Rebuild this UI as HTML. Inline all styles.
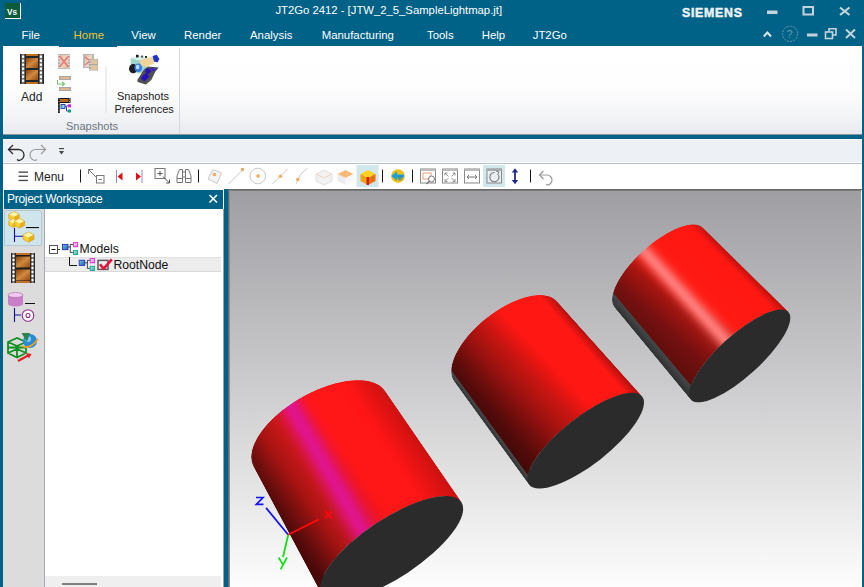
<!DOCTYPE html>
<html><head><meta charset="utf-8">
<style>
*{margin:0;padding:0;box-sizing:border-box}
html,body{width:864px;height:587px;overflow:hidden;background:#006286;font-family:"Liberation Sans",sans-serif}
.a{position:absolute}
.t{position:absolute;white-space:nowrap;line-height:1}
#title{left:0;top:0;width:864px;height:46px;background:#006286}
.tab{color:#fff;font-size:11.4px;top:30.2px}
#ribbon{left:3px;top:46px;width:859px;height:88px;background:linear-gradient(#ffffff 0%,#fefefe 45%,#f5f6f8 75%,#e9eaee 100%)}
#qat{left:3px;top:139px;width:859px;height:24px;background:#edf0f4;border-top:1px solid #f8f9fb;border-bottom:1px solid #fafbfc}
#tb{left:3px;top:163px;width:859px;height:26px;background:#fff;border-top:1px solid #b8c2cc}
#pwh{left:4px;top:190px;width:219px;height:19px;background:#006286}
#col{left:3px;top:209px;width:41px;height:378px;background:#dcdcdc}
#tree{left:45px;top:209px;width:177px;height:378px;background:#fff}
#vp{left:229px;top:190px;width:632px;height:397px;background:linear-gradient(#9f9ea3 0%,#c8c8ca 45%,#fdfdfd 100%)}
</style></head><body>
<div id="title" class="a"></div>
<!-- app icon -->
<div class="a" style="left:5px;top:3px;width:16px;height:16px;background:#0d5a3c;border-right:1px solid #fff;border-bottom:1px solid #fff"></div>
<div class="t" style="left:7px;top:8.5px;font-size:8.2px;font-weight:bold;color:#fff">Vs</div>
<div class="t" style="left:275.4px;top:5.3px;font-size:11.3px;color:#fff">JT2Go 2412 - [JTW_2_5_SampleLightmap.jt]</div>
<div class="t" style="left:682px;top:6.6px;font-size:12.3px;font-weight:bold;color:#eef2f4;letter-spacing:0.75px;-webkit-text-stroke:0.5px #eef2f4">SIEMENS</div>

<div class="t tab" style="left:21.5px">File</div>
<div class="t tab" style="left:73.6px;color:#f0c030">Home</div>
<div class="t tab" style="left:131.3px">View</div>
<div class="t tab" style="left:184px">Render</div>
<div class="t tab" style="left:250px">Analysis</div>
<div class="t tab" style="left:321.7px">Manufacturing</div>
<div class="t tab" style="left:427px">Tools</div>
<div class="t tab" style="left:481.7px">Help</div>
<div class="t tab" style="left:532.7px">JT2Go</div>

<div id="ribbon" class="a"></div>
<div class="a" style="left:59px;top:46px;width:58px;height:1px;background:#006286"></div>
<svg class="a" style="left:0;top:0" width="864" height="140"><defs>
<linearGradient id="fside" x1="0" y1="0" x2="1" y2="0"><stop offset="0" stop-color="#151515"/><stop offset="0.5" stop-color="#8a8a8a"/><stop offset="1" stop-color="#151515"/></linearGradient>
<linearGradient id="brn" x1="0" y1="0" x2="1" y2="1"><stop offset="0" stop-color="#8a4208"/><stop offset="0.5" stop-color="#d08a40"/><stop offset="1" stop-color="#904a10"/></linearGradient>
<linearGradient id="brnl" x1="0" y1="0" x2="1" y2="1"><stop offset="0" stop-color="#d8b898"/><stop offset="0.5" stop-color="#f0dcc4"/><stop offset="1" stop-color="#d8b898"/></linearGradient>
</defs>
<!-- Add film -->
<rect x="20" y="54" width="24" height="30" fill="#22262a"/>
<rect x="20" y="54" width="6" height="30" fill="url(#fside)"/>
<rect x="38" y="54" width="6" height="30" fill="url(#fside)"/>
<g fill="#fff">
<rect x="22" y="55.6" width="2.2" height="2.2"/><rect x="22" y="59.6" width="2.2" height="2.2"/><rect x="22" y="63.6" width="2.2" height="2.2"/><rect x="22" y="67.6" width="2.2" height="2.2"/><rect x="22" y="71.6" width="2.2" height="2.2"/><rect x="22" y="75.6" width="2.2" height="2.2"/><rect x="22" y="79.6" width="2.2" height="2.2"/>
<rect x="39.8" y="55.6" width="2.2" height="2.2"/><rect x="39.8" y="59.6" width="2.2" height="2.2"/><rect x="39.8" y="63.6" width="2.2" height="2.2"/><rect x="39.8" y="67.6" width="2.2" height="2.2"/><rect x="39.8" y="71.6" width="2.2" height="2.2"/><rect x="39.8" y="75.6" width="2.2" height="2.2"/><rect x="39.8" y="79.6" width="2.2" height="2.2"/>
</g>
<rect x="26" y="54" width="12" height="2" fill="#c0701c"/>
<rect x="26" y="58" width="12" height="10" fill="url(#brn)"/>
<rect x="26" y="70" width="12" height="10" fill="url(#brn)"/>
<rect x="26" y="82" width="12" height="2" fill="#c0701c"/>
<!-- delete snapshot -->
<rect x="58" y="54" width="12" height="15" fill="#b8b8b8"/>
<rect x="60" y="55" width="8" height="13" fill="url(#brnl)"/>
<g fill="#fff"><rect x="58.6" y="55" width="1" height="1"/><rect x="58.6" y="58" width="1" height="1"/><rect x="58.6" y="61" width="1" height="1"/><rect x="58.6" y="64" width="1" height="1"/><rect x="58.6" y="67" width="1" height="1"/><rect x="68.4" y="55" width="1" height="1"/><rect x="68.4" y="58" width="1" height="1"/><rect x="68.4" y="61" width="1" height="1"/><rect x="68.4" y="64" width="1" height="1"/><rect x="68.4" y="67" width="1" height="1"/></g>
<path d="M59.5 56 L68.5 67 M68.5 56 L59.5 67" stroke="#ea7a7a" stroke-width="1.8"/>
<!-- replace snapshot -->
<rect x="83" y="54" width="11" height="14" fill="#b8b8b8"/>
<rect x="85" y="55" width="7" height="12" fill="url(#brnl)"/>
<path d="M85 57 L90 61 L85 65" stroke="#ea7a7a" stroke-width="1.6" fill="none"/>
<rect x="89" y="59" width="9" height="11.5" fill="#a8a8a8"/>
<rect x="91" y="59.5" width="6.5" height="10.5" fill="#e0c4a0"/>
<rect x="91" y="64" width="6.5" height="1" fill="#a8a8a8"/>
<g fill="#fff"><rect x="89.6" y="60" width="1" height="1"/><rect x="89.6" y="63" width="1" height="1"/><rect x="89.6" y="66" width="1" height="1"/><rect x="89.6" y="69" width="1" height="1"/></g>
<!-- move snapshot -->
<rect x="59" y="76" width="12" height="4" fill="#a8a8a8"/><rect x="60.5" y="77" width="9" height="2" fill="#e0b890"/>
<rect x="59" y="87" width="12" height="4" fill="#a8a8a8"/><rect x="60.5" y="88" width="9" height="2" fill="#e0b890"/>
<path d="M57.5 80 V84 H64 M62 82 L64.5 84 L62 86" stroke="#78c070" stroke-width="1.1" fill="none"/>
<!-- tree snapshot -->
<rect x="58" y="98" width="12.5" height="5" fill="#151515"/>
<rect x="60" y="99" width="8.5" height="3" fill="#b86a20"/>
<g fill="#fff"><rect x="58.6" y="98.6" width="0.9" height="0.9"/><rect x="58.6" y="101.3" width="0.9" height="0.9"/><rect x="69" y="98.6" width="0.9" height="0.9"/><rect x="69" y="101.3" width="0.9" height="0.9"/></g>
<rect x="58" y="103" width="1.8" height="10" fill="#151515"/>
<g fill="#fff"><rect x="58.5" y="104.5" width="0.8" height="0.8"/><rect x="58.5" y="107.5" width="0.8" height="0.8"/><rect x="58.5" y="110.5" width="0.8" height="0.8"/></g>
<rect x="61" y="104.5" width="4" height="4" fill="#80d0e8" stroke="#2838a8" stroke-width="0.9"/>
<path d="M65 106.5 H66.5 V111 H68 M66.5 105.8 H68" stroke="#3030a0" stroke-width="0.9" fill="none"/>
<rect x="68" y="104.3" width="3" height="3" fill="#d020d0"/>
<rect x="68" y="109.5" width="3" height="3" fill="#109a80"/>
<!-- separator -->
<rect x="105.5" y="66" width="1" height="47" fill="#dcdfe3"/>
<rect x="179" y="48" width="1" height="86" fill="#d4d8dc"/>
<!-- camera -->
<path d="M130.8 58.2 L138.3 56.1 L146.5 58.2 L146.5 72.5 L138.3 73.6 L130.8 69.5Z" fill="#9ed4cc"/>
<path d="M130.8 58.2 L138.3 56.1 L146.5 58.2 L139 60.5Z" fill="#d8f2ee"/>
<rect x="136" y="54.8" width="2.6" height="2.6" fill="#1a1a1a"/><rect x="141" y="55.6" width="2.2" height="2" fill="#555"/><rect x="145" y="56" width="2" height="2" fill="#333"/>
<ellipse cx="133.2" cy="68.7" rx="4.2" ry="4.6" fill="#1c1c1c"/>
<ellipse cx="138.3" cy="67.7" rx="3.8" ry="4.2" fill="#3a7ee0"/>
<ellipse cx="137.6" cy="67" rx="1.8" ry="2.2" fill="#b8dcff"/>
<path d="M139.7 60 L153.3 56.8 L154.5 63.6 L146.5 66.4 L141 65.5Z" fill="#f2d49a"/>
<path d="M152.6 56.1 L156.7 54.8 L159.4 58.9 L157.4 62.6 L154 61.6Z" fill="#2232c8"/>
<path d="M137.3 80 L143.8 69.8 L147.9 66.4 L158.8 67.4 L155.3 71.8 L151.3 80 L145.8 84.4 L137.6 82Z" fill="#505050"/>
<path d="M140.4 77.9 L146 72.8 L149.6 76.6 L144.4 81.6Z" fill="#2a12b8"/>
<path d="M144.8 70 L148.5 67.9 L151.6 71.6 L147.4 74.8Z" fill="#2a12b8"/>
<path d="M150 68 L156.5 68.4 L154.2 70.8 L152.2 71.2Z" fill="#3a22c8"/>
</svg>
<div class="t" style="left:21px;top:91px;font-size:12px;color:#222">Add</div>
<div class="t" style="left:117px;top:91px;font-size:11px;color:#222">Snapshots</div>
<div class="t" style="left:114.5px;top:104px;font-size:11px;color:#222">Preferences</div>
<div class="t" style="left:66px;top:121px;font-size:11px;color:#6a7480">Snapshots</div>
<div class="a" style="left:3px;top:134px;width:859px;height:1px;background:#8e959c"></div>
<div id="qat" class="a"></div>
<div id="tb" class="a"></div>
<svg class="a" style="left:0;top:0" width="864" height="189"><!-- window controls row 1 -->
<rect x="767" y="10.5" width="10.5" height="3.5" fill="#c4d4dc"/>
<rect x="803.5" y="7" width="9.5" height="7.5" fill="none" stroke="#c4d4dc" stroke-width="2"/>
<path d="M840 7.5 L849.5 15 M849.5 7.5 L840 15" stroke="#c4d4dc" stroke-width="2.2"/>
<!-- row 2 -->
<path d="M763.8 36.5 L767.4 32.5 L771 36.5" stroke="#d8e4ea" stroke-width="2" fill="none"/>
<circle cx="790" cy="33.8" r="7.6" fill="none" stroke="#6e9cb2" stroke-width="1" stroke-dasharray="2 1.2"/>
<text x="786.6" y="38.4" font-family="Liberation Sans" font-size="11" fill="#6e9cb2">?</text>
<rect x="807" y="33.5" width="10.5" height="3" fill="#c4d4dc"/>
<rect x="825.5" y="32" width="7" height="6.5" fill="none" stroke="#c4d4dc" stroke-width="1.6"/>
<path d="M829 31.5 V28.8 H836 V35 H833" fill="none" stroke="#c4d4dc" stroke-width="1.6"/>
<path d="M846 29.5 L855 38 M855 29.5 L846 38" stroke="#c4d4dc" stroke-width="2"/>
<!-- QAT -->
<path d="M9 149.5 H18.5 A5.5 5.5 0 0 1 18.5 160.5 L17 159.5" fill="none" stroke="#2a2a2a" stroke-width="1.3"/>
<path d="M13 145 L8.5 149.5 L13 154" fill="none" stroke="#2a2a2a" stroke-width="1.3"/>
<path d="M45 149.5 H35.5 A5.5 5.5 0 0 0 35.5 160.5 L37 159.5" fill="none" stroke="#9a9a9a" stroke-width="1.2"/>
<path d="M41 145 L45.5 149.5 L41 154" fill="none" stroke="#9a9a9a" stroke-width="1.2"/>
<rect x="59" y="148" width="5" height="1.2" fill="#444"/>
<path d="M59 151 H64 L61.5 154.5Z" fill="#444"/>
<!-- hamburger -->
<rect x="18.5" y="171.5" width="9.5" height="1.3" fill="#444"/>
<rect x="18.5" y="175.6" width="9.5" height="1.3" fill="#444"/>
<rect x="18.5" y="179.8" width="9.5" height="1.3" fill="#444"/>
<!-- separators -->
<g fill="#1a1a1a"><rect x="80" y="169.5" width="1" height="13"/><rect x="198" y="169.5" width="1" height="13"/><rect x="382" y="169.5" width="1" height="13"/><rect x="412" y="169.5" width="1" height="13"/><rect x="530" y="169.5" width="1" height="13"/></g>
<!-- collapse icon -->
<path d="M88.5 169.5 L96 177 M88.5 169.5 V174 M88.5 169.5 H93" stroke="#777" stroke-width="1" fill="none"/>
<rect x="96.5" y="175.5" width="7.5" height="7.5" fill="#fff" stroke="#777" stroke-width="1"/>
<rect x="98.5" y="179" width="3.5" height="1" fill="#777"/>
<!-- prev/next -->
<rect x="116" y="170" width="1" height="13" fill="#9090c8"/>
<path d="M117.5 176.5 L122.5 172.5 V180.5Z" fill="#e01010"/>
<rect x="141.5" y="170" width="1" height="13" fill="#9090c8"/>
<path d="M141 176.5 L136 172.5 V180.5Z" fill="#e01010"/>
<!-- zoom box -->
<rect x="155" y="168.5" width="10" height="10" fill="#fff" stroke="#777" stroke-width="1"/>
<path d="M157.5 173.5 H162.5 M160 171 V176" stroke="#555" stroke-width="1"/>
<path d="M163 176.5 L169.5 183 M169.5 179.5 V183 H166" stroke="#555" stroke-width="1" fill="none"/>
<!-- binoculars -->
<path d="M177 182.5 V176 L179.5 169.5 H182.5 V182.5Z M185.5 182.5 V169.5 H188.5 L191 176 V182.5Z" fill="#fff" stroke="#777" stroke-width="1"/>
<rect x="182.5" y="172" width="3" height="5" fill="#fff" stroke="#777" stroke-width="1"/>
<path d="M177 178.5 H182.5 M185.5 178.5 H191" stroke="#777" stroke-width="1"/>
<!-- face -->
<path d="M208 179 L213 169.5 L221.5 173 L217 183.5Z" fill="#f4f4f4" stroke="#c8c8c8" stroke-width="1"/>
<circle cx="214.5" cy="174.5" r="1.8" fill="#f4a860"/>
<!-- line w dot -->
<path d="M228.5 184 L242.5 170" stroke="#c8c8c8" stroke-width="1"/>
<circle cx="242.5" cy="169.5" r="1.8" fill="#f4a860"/>
<!-- circle w dot -->
<circle cx="257.8" cy="176" r="7.8" fill="none" stroke="#c8c8c8" stroke-width="1"/>
<circle cx="258" cy="176" r="1.8" fill="#f4a860"/>
<!-- line w mid dot -->
<path d="M272.5 184 L287.5 169" stroke="#c8c8c8" stroke-width="1"/>
<circle cx="280.5" cy="176.3" r="1.8" fill="#f4a860"/>
<!-- curve w dot -->
<path d="M296.5 183.5 Q298.5 174 307.5 168.5" stroke="#c8c8c8" stroke-width="1" fill="none"/>
<circle cx="297.8" cy="179.5" r="1.8" fill="#f4a860"/>
<!-- white cube -->
<path d="M316 174 L324 170 L332 174 V181 L324 185 L316 181Z" fill="#f2f2f2" stroke="#d8d8d8" stroke-width="0.8"/>
<path d="M316 174 L324 178 L332 174" fill="none" stroke="#e6c8b0" stroke-width="0.8"/>
<!-- orange-top cube -->
<path d="M337.5 174 L345.5 170 L353.5 174 L345.5 178Z" fill="#f8b878"/>
<path d="M337.5 174 L345.5 178 V185 L337.5 181Z" fill="#ececec"/>
<path d="M345.5 178 L353.5 174 V181 L345.5 185Z" fill="#f6f6f6"/>
<!-- selected bg -->
<rect x="356.5" y="165" width="22" height="22" fill="#d2e6ee"/>
<path d="M360.5 174 L368 170 L375.5 174 L368 178Z" fill="#ffd020"/>
<path d="M360.5 174 L368 178 V185 L360.5 181Z" fill="#f4a010"/>
<path d="M368 178 L375.5 174 V181 L368 185Z" fill="#e87010"/>
<rect x="366.5" y="177" width="2.5" height="8" fill="#d02010"/>
<!-- globe icon -->
<circle cx="398" cy="176" r="6.8" fill="#e8c020"/>
<path d="M391 176 L397 171.5 V174.5 H404 V177.5 H397 V180.5Z" fill="#20a0d0"/>
<circle cx="400" cy="178" r="2.5" fill="#2080b0" opacity="0.6"/>
<!-- box magnifier -->
<rect x="420.5" y="169" width="15" height="14" fill="#fff" stroke="#888" stroke-width="1"/>
<rect x="420.5" y="169" width="15" height="2" fill="#bbb"/>
<rect x="423" y="173" width="8" height="6" fill="#fff" stroke="#f0a070" stroke-width="1"/>
<circle cx="431.5" cy="179" r="3" fill="#fff" stroke="#777" stroke-width="1"/>
<path d="M429.5 181 L426.5 184" stroke="#777" stroke-width="1.2"/>
<!-- fit -->
<rect x="442.5" y="169" width="15" height="14" fill="#fff" stroke="#888" stroke-width="1"/>
<rect x="442.5" y="169" width="15" height="2" fill="#bbb"/>
<path d="M445 173 L448.5 176.5 M445 173 H447.5 M445 173 V175.5 M455 173 L451.5 176.5 M455 173 H452.5 M455 173 V175.5 M445 181.5 L448.5 178 M445 181.5 H447.5 M445 181.5 V179 M455 181.5 L451.5 178 M455 181.5 H452.5 M455 181.5 V179" stroke="#888" stroke-width="0.9" fill="none"/>
<!-- width -->
<rect x="464.5" y="169" width="15" height="14" fill="#fff" stroke="#888" stroke-width="1"/>
<rect x="464.5" y="169" width="15" height="2" fill="#bbb"/>
<path d="M467 177 H477 M469 175 L467 177 L469 179 M475 175 L477 177 L475 179" stroke="#777" stroke-width="1" fill="none"/>
<!-- selected rotate -->
<rect x="483" y="165" width="22" height="22" fill="#d2e6ee"/>
<rect x="487" y="169" width="14.5" height="14" fill="#e8f0f4" stroke="#888" stroke-width="1"/>
<rect x="487" y="169" width="14.5" height="2" fill="#aaa"/>
<path d="M498.5 175 A4.6 4.6 0 1 1 494.5 172.5" stroke="#777" stroke-width="1.1" fill="none"/>
<path d="M496 171 L499 172 L497.5 175" stroke="#777" stroke-width="1" fill="none"/>
<!-- blue updown -->
<path d="M515 170.5 V182" stroke="#1a2a90" stroke-width="1.8"/>
<path d="M511.8 172.5 L515 168.2 L518.2 172.5Z M511.8 180 L515 184.3 L518.2 180Z" fill="#1a2a90"/>
<!-- undo grey -->
<path d="M539.5 175 H547 A5 5 0 0 1 547 185 L546 184.3" fill="none" stroke="#999" stroke-width="1.2"/>
<path d="M543.5 171 L539.5 175 L543.5 179" fill="none" stroke="#999" stroke-width="1.2"/>
</svg>
<div class="t" style="left:34px;top:171px;font-size:12px;color:#222">Menu</div>
<div class="a" style="left:3px;top:189px;width:221px;height:1px;background:#fff"></div>
<div class="a" style="left:3px;top:189px;width:1px;height:398px;background:#f4f4f4"></div>
<div id="pwh" class="a"></div>
<div class="t" style="left:7px;top:193px;font-size:12px;color:#fff;letter-spacing:-0.3px">Project Workspace</div>
<div id="col" class="a"></div>
<div class="a" style="left:44px;top:209px;width:1px;height:378px;background:#a4aab0"></div>
<div id="tree" class="a"></div>
<div class="a" style="left:45px;top:257px;width:176px;height:15px;background:#ececec;border-top:1px solid #e0e0e0;border-bottom:1px solid #d8d8d8"></div>
<div class="a" style="left:45px;top:576px;width:176px;height:11px;background:#efefef"></div>
<div class="a" style="left:221px;top:209px;width:2px;height:378px;background:#fff"></div>
<div class="a" style="left:223px;top:190px;width:1px;height:397px;background:#fff"></div>
<div class="a" style="left:223px;top:209px;width:1px;height:378px;background:#a0a0a0"></div>
<svg class="a" style="left:0;top:0" width="230" height="587"><!-- close X -->
<path d="M209.5 195 L217 202.5 M217 195 L209.5 202.5" stroke="#fff" stroke-width="1.6"/>
<!-- selected tab -->
<path d="M4.5 245.5 V213 Q4.5 210.5 7 210.5 H39 Q41.5 210.5 41.5 213 V245.5Z" fill="#cfe4ec" stroke="#b4c8d0" stroke-width="1"/>
<!-- cubes icon -->
<g><path d="M8.7 214.16 L13.95 211.5 L19.2 214.16 L13.95 216.82Z" fill="#fff4a8"/><path d="M8.7 214.16 L13.95 216.82 V221.0 L8.7 218.34Z" fill="#f8d030"/><path d="M13.95 216.82 L19.2 214.16 V218.34 L13.95 221.0Z" fill="#e8b010"/><path d="M8.7 214.16 L13.95 211.5 L19.2 214.16 V218.34 L13.95 221.0 L8.7 218.34Z" fill="none" stroke="#d89810" stroke-width="0.6"/><path d="M8.7 221.02 L13.2 218.5 L17.7 221.02 L13.2 223.54Z" fill="#fff4a8"/><path d="M8.7 221.02 L13.2 223.54 V227.5 L8.7 224.98Z" fill="#f8d030"/><path d="M13.2 223.54 L17.7 221.02 V224.98 L13.2 227.5Z" fill="#e8b010"/><path d="M8.7 221.02 L13.2 218.5 L17.7 221.02 V224.98 L13.2 227.5 L8.7 224.98Z" fill="none" stroke="#d89810" stroke-width="0.6"/><path d="M14.5 221.0 L19.5 218.2 L24.5 221.0 L19.5 223.79999999999998Z" fill="#fff4a8"/><path d="M14.5 221.0 L19.5 223.79999999999998 V228.2 L14.5 225.39999999999998Z" fill="#f8d030"/><path d="M19.5 223.79999999999998 L24.5 221.0 V225.39999999999998 L19.5 228.2Z" fill="#e8b010"/><path d="M14.5 221.0 L19.5 218.2 L24.5 221.0 V225.39999999999998 L19.5 228.2 L14.5 225.39999999999998Z" fill="none" stroke="#d89810" stroke-width="0.6"/><rect x="26" y="227" width="13" height="1.1" fill="#111"/><path d="M14.5 228 V242 M14.5 236.2 H23" stroke="#1010a0" stroke-width="1.1"/><path d="M23.2 234.71200000000002 L28.6 231.8 L34.0 234.71200000000002 L28.6 237.62400000000002Z" fill="#fff4a8"/><path d="M23.2 234.71200000000002 L28.6 237.62400000000002 V242.20000000000002 L23.2 239.288Z" fill="#f8d030"/><path d="M28.6 237.62400000000002 L34.0 234.71200000000002 V239.288 L28.6 242.20000000000002Z" fill="#e8b010"/><path d="M23.2 234.71200000000002 L28.6 231.8 L34.0 234.71200000000002 V239.288 L28.6 242.20000000000002 L23.2 239.288Z" fill="none" stroke="#d89810" stroke-width="0.6"/></g>
<!-- film icon -->
<rect x="11" y="253" width="24" height="30" fill="#1a1a1a"/>
<rect x="11" y="253" width="5" height="30" fill="url(#fside)"/>
<rect x="30" y="253" width="5" height="30" fill="url(#fside)"/>
<g fill="#fff"><rect x="12.5" y="255" width="2" height="2"/><rect x="12.5" y="259" width="2" height="2"/><rect x="12.5" y="263" width="2" height="2"/><rect x="12.5" y="267" width="2" height="2"/><rect x="12.5" y="271" width="2" height="2"/><rect x="12.5" y="275" width="2" height="2"/><rect x="12.5" y="279" width="2" height="2"/>
<rect x="31.5" y="255" width="2" height="2"/><rect x="31.5" y="259" width="2" height="2"/><rect x="31.5" y="263" width="2" height="2"/><rect x="31.5" y="267" width="2" height="2"/><rect x="31.5" y="271" width="2" height="2"/><rect x="31.5" y="275" width="2" height="2"/><rect x="31.5" y="279" width="2" height="2"/></g>
<rect x="16" y="253" width="14" height="2" fill="#c07028"/>
<rect x="16" y="256.5" width="14" height="11" fill="url(#brn)"/>
<rect x="16" y="269.5" width="14" height="11" fill="url(#brn)"/>
<rect x="16" y="281" width="14" height="2" fill="#c07028"/>
<!-- db icon -->
<path d="M8 295 V304 A7.5 2.5 0 0 0 23 304 V295Z" fill="#c880c8"/>
<ellipse cx="15.5" cy="295" rx="7.5" ry="2.5" fill="#f0c8f0" stroke="#a050a0" stroke-width="0.5"/>
<rect x="25" y="303" width="10" height="1" fill="#111"/>
<path d="M14.5 308 V322 M14.5 315 H21" stroke="#1010a0" stroke-width="1.1"/>
<circle cx="28" cy="315.5" r="5.8" fill="#fff" stroke="#903090" stroke-width="1.1"/>
<circle cx="28" cy="315.5" r="2" fill="none" stroke="#903090" stroke-width="1.1"/>
<!-- globe cube icon -->
<path d="M8 342 L17 338 L26 342 V353 L17 357.5 L8 353Z M8 342 L17 346 L26 342 M17 346 V357.5 M8 353 L17 349 L26 353 M8 347.5 L26 347.5" fill="none" stroke="#109020" stroke-width="1.8"/>
<circle cx="30" cy="341" r="7" fill="#2a8ad8"/>
<circle cx="28" cy="339" r="3" fill="#80d0f8"/>
<path d="M22 346 Q30 350 38 339" fill="none" stroke="#f0a020" stroke-width="1.8"/>
<path d="M21.5 333 L30 333 L27 342Z" fill="#308050"/>
<path d="M18 361 L29 355" stroke="#e02020" stroke-width="2"/>
<path d="M26 353 L31.5 354 L29 358.5Z" fill="#e02020"/>
<!-- tree -->
<defs><linearGradient id="bsq" x1="0" y1="0" x2="1" y2="1"><stop offset="0" stop-color="#60d0d0"/><stop offset="1" stop-color="#2060c0"/></linearGradient>
<linearGradient id="tsq" x1="0" y1="0" x2="1" y2="1"><stop offset="0" stop-color="#a0f0e0"/><stop offset="1" stop-color="#30b0a0"/></linearGradient>
<linearGradient id="psq" x1="0" y1="0" x2="1" y2="1"><stop offset="0" stop-color="#ffd0ff"/><stop offset="1" stop-color="#e080e0"/></linearGradient></defs>
<rect x="49.5" y="245.5" width="8" height="8" fill="#fff" stroke="#555" stroke-width="1"/>
<rect x="51.5" y="249" width="4" height="1" fill="#111"/>
<rect x="57.5" y="249" width="2.5" height="1" fill="#333"/>
<rect x="62.5" y="244.5" width="5.5" height="5.2" fill="url(#bsq)" stroke="#3030c0" stroke-width="0.9"/>
<path d="M68 247 H70.3 M70.3 244.5 V252.6 M70.3 244.5 H73.3 M70.3 252.4 H73.3" stroke="#333" stroke-width="0.9" fill="none"/>
<rect x="73.5" y="242.6" width="4.2" height="4.2" fill="url(#psq)" stroke="#d030d0" stroke-width="0.9"/>
<rect x="73.5" y="250.4" width="4.2" height="4.2" fill="url(#tsq)" stroke="#20a090" stroke-width="0.9"/>
<path d="M69.5 257 V265.5 H77" stroke="#111" stroke-width="1" fill="none"/>
<rect x="79.2" y="260.2" width="5.5" height="5.2" fill="url(#bsq)" stroke="#3030c0" stroke-width="0.9"/>
<path d="M84.7 262.8 H87.4 M87.4 260.3 V268.5 M87.4 260.3 H90 M87.4 268.4 H90" stroke="#333" stroke-width="0.9" fill="none"/>
<rect x="90.2" y="258.6" width="4.4" height="4.2" fill="url(#psq)" stroke="#d030d0" stroke-width="0.9"/>
<rect x="90.2" y="266.3" width="4.4" height="4.2" fill="url(#tsq)" stroke="#20a090" stroke-width="0.9"/>
<rect x="98" y="260.4" width="10" height="9" fill="#f0f0f0" stroke="#5a5a5a" stroke-width="1.5"/>
<path d="M100 264.2 L103.5 268.8 L111.8 259.3" stroke="#e8103a" stroke-width="2.6" fill="none" stroke-linejoin="round"/>
<!-- scrollbar -->
<rect x="62" y="583" width="35" height="2" fill="#808080"/>
</svg>
<div class="t" style="left:79.6px;top:243.1px;font-size:12.2px;color:#111">Models</div>
<div class="t" style="left:113.4px;top:258.8px;font-size:12.2px;color:#111">RootNode</div>
<div class="a" style="left:228px;top:189px;width:1px;height:398px;background:#6a6a6a"></div>
<div class="a" style="left:229px;top:189px;width:633px;height:1px;background:#6a6a6a"></div>
<div id="vpb" class="a" style="left:229px;top:190px;width:632px;height:1px;background:#7a7a7c;z-index:2"></div><div class="a" style="left:229px;top:190px;width:1px;height:397px;background:#8a8a8c;z-index:2"></div>
<div id="vp" class="a"><svg style="position:absolute;left:0;top:0" width="632" height="397" viewBox="229 190 632 397">
<clipPath id="k0"><path d="M251.3 456.6 L251.4 455.1 L251.6 453.6 L251.8 452.1 L252.1 450.6 L252.5 449.0 L253.0 447.4 L253.5 445.8 L254.2 444.2 L254.9 442.5 L255.7 440.9 L256.6 439.2 L257.5 437.5 L258.6 435.8 L259.7 434.1 L260.8 432.4 L262.1 430.7 L263.4 429.0 L264.8 427.2 L266.3 425.5 L267.8 423.8 L269.4 422.1 L271.0 420.4 L272.7 418.7 L274.5 417.1 L276.3 415.4 L278.2 413.8 L280.1 412.1 L282.0 410.5 L284.1 409.0 L286.1 407.4 L288.2 405.9 L290.4 404.4 L292.5 402.9 L294.7 401.5 L297.0 400.1 L299.2 398.7 L301.5 397.4 L303.8 396.1 L306.2 394.9 L308.5 393.7 L310.9 392.5 L313.2 391.4 L315.6 390.3 L318.0 389.3 L320.4 388.3 L322.8 387.4 L325.2 386.5 L327.5 385.7 L329.9 384.9 L332.3 384.2 L334.6 383.6 L336.9 383.0 L339.2 382.4 L341.5 381.9 L343.7 381.5 L346.0 381.1 L348.1 380.8 L350.3 380.6 L352.4 380.4 L354.5 380.2 L356.5 380.2 L358.5 380.2 L360.4 380.2 L362.3 380.3 L364.2 380.5 L366.0 380.7 L367.7 381.0 L369.4 381.3 L371.0 381.7 L372.5 382.2 L374.0 382.7 L375.4 383.3 L376.8 383.9 L378.0 384.6 L379.3 385.3 L380.4 386.1 L381.5 387.0 L382.4 387.9 L383.3 388.8 L384.2 389.8 L384.9 390.9 L461.3 502.1 L461.8 502.9 L462.3 503.9 L462.6 504.9 L462.9 505.9 L463.1 507.0 L463.2 508.1 L463.2 509.3 L463.1 510.6 L462.9 511.9 L462.6 513.2 L462.3 514.6 L461.9 516.0 L461.3 517.4 L460.7 518.9 L460.1 520.5 L459.3 522.0 L458.4 523.6 L457.5 525.2 L456.5 526.9 L455.4 528.6 L454.2 530.3 L453.0 532.0 L451.7 533.7 L450.3 535.5 L448.8 537.3 L447.3 539.0 L445.7 540.8 L444.0 542.7 L442.3 544.5 L440.5 546.3 L438.6 548.1 L436.7 549.9 L434.7 551.8 L432.7 553.6 L430.6 555.4 L428.5 557.2 L426.4 559.0 L424.2 560.7 L421.9 562.5 L419.6 564.2 L417.3 566.0 L415.0 567.7 L412.6 569.4 L410.2 571.0 L407.8 572.6 L405.3 574.2 L402.9 575.8 L400.4 577.3 L397.9 578.8 L395.4 580.3 L392.9 581.7 L390.4 583.1 L387.9 584.4 L385.4 585.7 L383.0 586.9 L380.5 588.1 L378.0 589.3 L375.6 590.4 L373.2 591.4 L370.7 592.4 L368.4 593.4 L366.0 594.3 L363.7 595.1 L361.4 595.9 L359.2 596.6 L357.0 597.2 L354.8 597.8 L352.7 598.4 L350.6 598.8 L348.6 599.3 L346.6 599.6 L344.7 599.9 L342.8 600.1 L341.0 600.3 L339.3 600.4 L337.6 600.4 L336.0 600.4 L334.5 600.3 L333.0 600.1 L331.6 599.9 L330.3 599.6 L329.0 599.3 L327.9 598.9 L326.8 598.4 L325.8 597.9 L324.8 597.3 L324.0 596.6 L323.2 595.9 L322.5 595.2 L321.9 594.3 L321.4 593.5 L253.8 466.8 L253.2 465.7 L252.7 464.5 L252.3 463.3 L251.9 462.0 L251.6 460.7 L251.5 459.4 L251.4 458.0Z"/></clipPath>
<g clip-path="url(#k0)">
<linearGradient id="s0_1000" gradientUnits="userSpaceOnUse" x1="321.9" y1="594.3" x2="253.8" y2="466.8"><stop offset="0.00" stop-color="#4a0909"/><stop offset="0.17" stop-color="#4a0909"/><stop offset="0.33" stop-color="#4a0909"/><stop offset="0.50" stop-color="#4a0909"/><stop offset="0.67" stop-color="#520a0a"/><stop offset="0.83" stop-color="#590b0b"/><stop offset="1.00" stop-color="#610c0c"/></linearGradient>
<linearGradient id="s0_1001" gradientUnits="userSpaceOnUse" x1="461.3" y1="502.1" x2="385.6" y2="392.0"><stop offset="0.00" stop-color="#cc1111"/><stop offset="0.17" stop-color="#cc1111"/><stop offset="0.33" stop-color="#cc1111"/><stop offset="0.50" stop-color="#cc1111"/><stop offset="0.67" stop-color="#cc1111"/><stop offset="0.83" stop-color="#cc1111"/><stop offset="1.00" stop-color="#cc1111"/></linearGradient>
<linearGradient id="s0_0" gradientUnits="userSpaceOnUse" x1="321.7" y1="594.0" x2="253.5" y2="466.4"><stop offset="0.00" stop-color="#4a0909"/><stop offset="0.17" stop-color="#4a0909"/><stop offset="0.33" stop-color="#4a0909"/><stop offset="0.50" stop-color="#4a0909"/><stop offset="0.67" stop-color="#520a0a"/><stop offset="0.83" stop-color="#590b0b"/><stop offset="1.00" stop-color="#610c0c"/></linearGradient>
<linearGradient id="s0_1" gradientUnits="userSpaceOnUse" x1="321.3" y1="593.3" x2="253.1" y2="465.4"><stop offset="0.00" stop-color="#4a0909"/><stop offset="0.17" stop-color="#4a0909"/><stop offset="0.33" stop-color="#4a0909"/><stop offset="0.50" stop-color="#4a0909"/><stop offset="0.67" stop-color="#520a0a"/><stop offset="0.83" stop-color="#590b0b"/><stop offset="1.00" stop-color="#610c0c"/></linearGradient>
<linearGradient id="s0_2" gradientUnits="userSpaceOnUse" x1="320.9" y1="592.5" x2="252.7" y2="464.5"><stop offset="0.00" stop-color="#4a0909"/><stop offset="0.17" stop-color="#4a0909"/><stop offset="0.33" stop-color="#4a0909"/><stop offset="0.50" stop-color="#4b0909"/><stop offset="0.67" stop-color="#520a0a"/><stop offset="0.83" stop-color="#5a0b0b"/><stop offset="1.00" stop-color="#610c0c"/></linearGradient>
<linearGradient id="s0_3" gradientUnits="userSpaceOnUse" x1="320.6" y1="591.7" x2="252.3" y2="463.5"><stop offset="0.00" stop-color="#4a0909"/><stop offset="0.17" stop-color="#4a0909"/><stop offset="0.33" stop-color="#4a0909"/><stop offset="0.50" stop-color="#4b0909"/><stop offset="0.67" stop-color="#530a0a"/><stop offset="0.83" stop-color="#5a0b0b"/><stop offset="1.00" stop-color="#620c0c"/></linearGradient>
<linearGradient id="s0_4" gradientUnits="userSpaceOnUse" x1="320.4" y1="590.8" x2="252.0" y2="462.4"><stop offset="0.00" stop-color="#4a0909"/><stop offset="0.17" stop-color="#4a0909"/><stop offset="0.33" stop-color="#4a0909"/><stop offset="0.50" stop-color="#4c0909"/><stop offset="0.67" stop-color="#530a0a"/><stop offset="0.83" stop-color="#5b0b0b"/><stop offset="1.00" stop-color="#620c0c"/></linearGradient>
<linearGradient id="s0_5" gradientUnits="userSpaceOnUse" x1="320.2" y1="590.0" x2="251.8" y2="461.4"><stop offset="0.00" stop-color="#4a0909"/><stop offset="0.17" stop-color="#4a0909"/><stop offset="0.33" stop-color="#4a0909"/><stop offset="0.50" stop-color="#4d0909"/><stop offset="0.67" stop-color="#540a0a"/><stop offset="0.83" stop-color="#5c0b0b"/><stop offset="1.00" stop-color="#630d0d"/></linearGradient>
<linearGradient id="s0_6" gradientUnits="userSpaceOnUse" x1="320.1" y1="589.0" x2="251.6" y2="460.3"><stop offset="0.00" stop-color="#4a0909"/><stop offset="0.17" stop-color="#4a0909"/><stop offset="0.33" stop-color="#4a0909"/><stop offset="0.50" stop-color="#4e0a0a"/><stop offset="0.67" stop-color="#550b0b"/><stop offset="0.83" stop-color="#5d0c0c"/><stop offset="1.00" stop-color="#640d0d"/></linearGradient>
<linearGradient id="s0_7" gradientUnits="userSpaceOnUse" x1="320.0" y1="588.1" x2="251.4" y2="459.2"><stop offset="0.00" stop-color="#4a0909"/><stop offset="0.17" stop-color="#4a0909"/><stop offset="0.33" stop-color="#4a0909"/><stop offset="0.50" stop-color="#4f0a0a"/><stop offset="0.67" stop-color="#570b0b"/><stop offset="0.83" stop-color="#5e0c0c"/><stop offset="1.00" stop-color="#660d0d"/></linearGradient>
<linearGradient id="s0_8" gradientUnits="userSpaceOnUse" x1="320.0" y1="587.1" x2="251.4" y2="458.1"><stop offset="0.00" stop-color="#4a0909"/><stop offset="0.17" stop-color="#4a0909"/><stop offset="0.33" stop-color="#4a0909"/><stop offset="0.50" stop-color="#510a0a"/><stop offset="0.67" stop-color="#580b0b"/><stop offset="0.83" stop-color="#600c0c"/><stop offset="1.00" stop-color="#670d0d"/></linearGradient>
<linearGradient id="s0_9" gradientUnits="userSpaceOnUse" x1="320.1" y1="586.1" x2="251.3" y2="456.9"><stop offset="0.00" stop-color="#4a0909"/><stop offset="0.17" stop-color="#4a0909"/><stop offset="0.33" stop-color="#4b0909"/><stop offset="0.50" stop-color="#520a0a"/><stop offset="0.67" stop-color="#5a0b0b"/><stop offset="0.83" stop-color="#610c0c"/><stop offset="1.00" stop-color="#690d0d"/></linearGradient>
<linearGradient id="s0_10" gradientUnits="userSpaceOnUse" x1="320.2" y1="585.1" x2="251.4" y2="455.7"><stop offset="0.00" stop-color="#4a0909"/><stop offset="0.17" stop-color="#4a0909"/><stop offset="0.33" stop-color="#4d0909"/><stop offset="0.50" stop-color="#540a0a"/><stop offset="0.67" stop-color="#5c0b0b"/><stop offset="0.83" stop-color="#630c0c"/><stop offset="1.00" stop-color="#6b0e0e"/></linearGradient>
<linearGradient id="s0_11" gradientUnits="userSpaceOnUse" x1="320.4" y1="584.0" x2="251.5" y2="454.5"><stop offset="0.00" stop-color="#4a0909"/><stop offset="0.17" stop-color="#4a0909"/><stop offset="0.33" stop-color="#4f0a0a"/><stop offset="0.50" stop-color="#560b0b"/><stop offset="0.67" stop-color="#5e0c0c"/><stop offset="0.83" stop-color="#650d0d"/><stop offset="1.00" stop-color="#6d0e0e"/></linearGradient>
<linearGradient id="s0_12" gradientUnits="userSpaceOnUse" x1="320.6" y1="582.9" x2="251.6" y2="453.3"><stop offset="0.00" stop-color="#4a0909"/><stop offset="0.17" stop-color="#4a0909"/><stop offset="0.33" stop-color="#510a0a"/><stop offset="0.50" stop-color="#580b0b"/><stop offset="0.67" stop-color="#600c0c"/><stop offset="0.83" stop-color="#670d0d"/><stop offset="1.00" stop-color="#6f0e0e"/></linearGradient>
<linearGradient id="s0_13" gradientUnits="userSpaceOnUse" x1="320.9" y1="581.8" x2="251.8" y2="452.1"><stop offset="0.00" stop-color="#4a0909"/><stop offset="0.17" stop-color="#4c0909"/><stop offset="0.33" stop-color="#530a0a"/><stop offset="0.50" stop-color="#5b0b0b"/><stop offset="0.67" stop-color="#620c0c"/><stop offset="0.83" stop-color="#6a0d0d"/><stop offset="1.00" stop-color="#710e0e"/></linearGradient>
<linearGradient id="s0_14" gradientUnits="userSpaceOnUse" x1="321.3" y1="580.6" x2="252.0" y2="450.8"><stop offset="0.00" stop-color="#4a0909"/><stop offset="0.17" stop-color="#4e0a0a"/><stop offset="0.33" stop-color="#560b0b"/><stop offset="0.50" stop-color="#5d0c0c"/><stop offset="0.67" stop-color="#650d0d"/><stop offset="0.83" stop-color="#6c0e0e"/><stop offset="1.00" stop-color="#740f0e"/></linearGradient>
<linearGradient id="s0_15" gradientUnits="userSpaceOnUse" x1="321.7" y1="579.4" x2="252.4" y2="449.5"><stop offset="0.00" stop-color="#4a0909"/><stop offset="0.17" stop-color="#510a0a"/><stop offset="0.33" stop-color="#580b0b"/><stop offset="0.50" stop-color="#600c0c"/><stop offset="0.67" stop-color="#670d0d"/><stop offset="0.83" stop-color="#6f0e0e"/><stop offset="1.00" stop-color="#770f0f"/></linearGradient>
<linearGradient id="s0_16" gradientUnits="userSpaceOnUse" x1="322.1" y1="578.2" x2="252.7" y2="448.2"><stop offset="0.00" stop-color="#4c0909"/><stop offset="0.17" stop-color="#540a0a"/><stop offset="0.33" stop-color="#5b0b0b"/><stop offset="0.50" stop-color="#630c0c"/><stop offset="0.67" stop-color="#6a0d0d"/><stop offset="0.83" stop-color="#720e0e"/><stop offset="1.00" stop-color="#7a0f0f"/></linearGradient>
<linearGradient id="s0_17" gradientUnits="userSpaceOnUse" x1="322.7" y1="577.0" x2="253.1" y2="446.9"><stop offset="0.00" stop-color="#4f0a0a"/><stop offset="0.17" stop-color="#570b0b"/><stop offset="0.33" stop-color="#5e0c0c"/><stop offset="0.50" stop-color="#660d0d"/><stop offset="0.67" stop-color="#6d0e0e"/><stop offset="0.83" stop-color="#750f0e"/><stop offset="1.00" stop-color="#7d100f"/></linearGradient>
<linearGradient id="s0_18" gradientUnits="userSpaceOnUse" x1="323.2" y1="575.7" x2="253.6" y2="445.6"><stop offset="0.00" stop-color="#520a0a"/><stop offset="0.17" stop-color="#5a0b0b"/><stop offset="0.33" stop-color="#610c0c"/><stop offset="0.50" stop-color="#690d0d"/><stop offset="0.67" stop-color="#700e0e"/><stop offset="0.83" stop-color="#780f0f"/><stop offset="1.00" stop-color="#80100f"/></linearGradient>
<linearGradient id="s0_19" gradientUnits="userSpaceOnUse" x1="323.9" y1="574.5" x2="254.1" y2="444.3"><stop offset="0.00" stop-color="#560b0b"/><stop offset="0.17" stop-color="#5d0c0c"/><stop offset="0.33" stop-color="#650d0d"/><stop offset="0.50" stop-color="#6c0e0e"/><stop offset="0.67" stop-color="#740f0e"/><stop offset="0.83" stop-color="#7c0f0f"/><stop offset="1.00" stop-color="#841010"/></linearGradient>
<linearGradient id="s0_20" gradientUnits="userSpaceOnUse" x1="324.6" y1="573.2" x2="254.7" y2="442.9"><stop offset="0.00" stop-color="#590b0b"/><stop offset="0.17" stop-color="#600c0c"/><stop offset="0.33" stop-color="#680d0d"/><stop offset="0.50" stop-color="#700e0e"/><stop offset="0.67" stop-color="#780f0f"/><stop offset="0.83" stop-color="#80100f"/><stop offset="1.00" stop-color="#881110"/></linearGradient>
<linearGradient id="s0_21" gradientUnits="userSpaceOnUse" x1="325.3" y1="571.8" x2="255.4" y2="441.6"><stop offset="0.00" stop-color="#5d0c0c"/><stop offset="0.17" stop-color="#640d0d"/><stop offset="0.33" stop-color="#6c0e0e"/><stop offset="0.50" stop-color="#730f0e"/><stop offset="0.67" stop-color="#7c0f0f"/><stop offset="0.83" stop-color="#84100f"/><stop offset="1.00" stop-color="#8c1110"/></linearGradient>
<linearGradient id="s0_22" gradientUnits="userSpaceOnUse" x1="326.1" y1="570.5" x2="256.0" y2="440.2"><stop offset="0.00" stop-color="#600c0c"/><stop offset="0.17" stop-color="#680d0d"/><stop offset="0.33" stop-color="#6f0e0e"/><stop offset="0.50" stop-color="#780f0f"/><stop offset="0.67" stop-color="#80100f"/><stop offset="0.83" stop-color="#881110"/><stop offset="1.00" stop-color="#901110"/></linearGradient>
<linearGradient id="s0_23" gradientUnits="userSpaceOnUse" x1="327.0" y1="569.1" x2="256.8" y2="438.8"><stop offset="0.00" stop-color="#640d0d"/><stop offset="0.17" stop-color="#6c0e0e"/><stop offset="0.33" stop-color="#740f0e"/><stop offset="0.50" stop-color="#7c0f0f"/><stop offset="0.67" stop-color="#841010"/><stop offset="0.83" stop-color="#8c1110"/><stop offset="1.00" stop-color="#941211"/></linearGradient>
<linearGradient id="s0_24" gradientUnits="userSpaceOnUse" x1="327.9" y1="567.8" x2="257.6" y2="437.4"><stop offset="0.00" stop-color="#680d0d"/><stop offset="0.17" stop-color="#700e0e"/><stop offset="0.33" stop-color="#780f0f"/><stop offset="0.50" stop-color="#80100f"/><stop offset="0.67" stop-color="#881110"/><stop offset="0.83" stop-color="#901210"/><stop offset="1.00" stop-color="#981211"/></linearGradient>
<linearGradient id="s0_25" gradientUnits="userSpaceOnUse" x1="328.8" y1="566.4" x2="258.4" y2="436.0"><stop offset="0.00" stop-color="#6d0e0e"/><stop offset="0.17" stop-color="#750f0e"/><stop offset="0.33" stop-color="#7d100f"/><stop offset="0.50" stop-color="#851010"/><stop offset="0.67" stop-color="#8d1110"/><stop offset="0.83" stop-color="#951211"/><stop offset="1.00" stop-color="#9d1311"/></linearGradient>
<linearGradient id="s0_26" gradientUnits="userSpaceOnUse" x1="329.8" y1="565.0" x2="259.3" y2="434.6"><stop offset="0.00" stop-color="#710e0e"/><stop offset="0.17" stop-color="#790f0f"/><stop offset="0.33" stop-color="#81100f"/><stop offset="0.50" stop-color="#891110"/><stop offset="0.67" stop-color="#911210"/><stop offset="0.83" stop-color="#991211"/><stop offset="1.00" stop-color="#a11312"/></linearGradient>
<linearGradient id="s0_27" gradientUnits="userSpaceOnUse" x1="330.9" y1="563.6" x2="260.2" y2="433.2"><stop offset="0.00" stop-color="#760f0f"/><stop offset="0.17" stop-color="#7e100f"/><stop offset="0.33" stop-color="#861010"/><stop offset="0.50" stop-color="#8e1110"/><stop offset="0.67" stop-color="#961211"/><stop offset="0.83" stop-color="#9e1311"/><stop offset="1.00" stop-color="#a61412"/></linearGradient>
<linearGradient id="s0_28" gradientUnits="userSpaceOnUse" x1="332.0" y1="562.1" x2="261.2" y2="431.8"><stop offset="0.00" stop-color="#7b0f0f"/><stop offset="0.17" stop-color="#83100f"/><stop offset="0.33" stop-color="#8b1110"/><stop offset="0.50" stop-color="#931211"/><stop offset="0.67" stop-color="#9b1311"/><stop offset="0.83" stop-color="#a31412"/><stop offset="1.00" stop-color="#aa1412"/></linearGradient>
<linearGradient id="s0_29" gradientUnits="userSpaceOnUse" x1="333.1" y1="560.7" x2="262.3" y2="430.4"><stop offset="0.00" stop-color="#80100f"/><stop offset="0.17" stop-color="#881110"/><stop offset="0.33" stop-color="#901210"/><stop offset="0.50" stop-color="#981211"/><stop offset="0.67" stop-color="#a01311"/><stop offset="0.83" stop-color="#a81412"/><stop offset="1.00" stop-color="#ad1413"/></linearGradient>
<linearGradient id="s0_30" gradientUnits="userSpaceOnUse" x1="334.3" y1="559.2" x2="263.3" y2="429.0"><stop offset="0.00" stop-color="#851010"/><stop offset="0.17" stop-color="#8d1110"/><stop offset="0.33" stop-color="#951211"/><stop offset="0.50" stop-color="#9d1311"/><stop offset="0.67" stop-color="#a51412"/><stop offset="0.83" stop-color="#ab1413"/><stop offset="1.00" stop-color="#af1513"/></linearGradient>
<linearGradient id="s0_31" gradientUnits="userSpaceOnUse" x1="335.6" y1="557.8" x2="264.5" y2="427.6"><stop offset="0.00" stop-color="#8b1110"/><stop offset="0.17" stop-color="#931211"/><stop offset="0.33" stop-color="#9b1311"/><stop offset="0.50" stop-color="#a31312"/><stop offset="0.67" stop-color="#aa1412"/><stop offset="0.83" stop-color="#ae1513"/><stop offset="1.00" stop-color="#b21514"/></linearGradient>
<linearGradient id="s0_32" gradientUnits="userSpaceOnUse" x1="336.9" y1="556.3" x2="265.7" y2="426.2"><stop offset="0.00" stop-color="#901210"/><stop offset="0.17" stop-color="#981211"/><stop offset="0.33" stop-color="#a01312"/><stop offset="0.50" stop-color="#a81412"/><stop offset="0.67" stop-color="#ad1413"/><stop offset="0.83" stop-color="#b11514"/><stop offset="1.00" stop-color="#b51515"/></linearGradient>
<linearGradient id="s0_33" gradientUnits="userSpaceOnUse" x1="338.2" y1="554.8" x2="266.9" y2="424.8"><stop offset="0.00" stop-color="#961211"/><stop offset="0.17" stop-color="#9e1311"/><stop offset="0.33" stop-color="#a61412"/><stop offset="0.50" stop-color="#ab1413"/><stop offset="0.67" stop-color="#b01514"/><stop offset="0.83" stop-color="#b41514"/><stop offset="1.00" stop-color="#b91615"/></linearGradient>
<linearGradient id="s0_34" gradientUnits="userSpaceOnUse" x1="339.6" y1="553.3" x2="268.1" y2="423.4"><stop offset="0.00" stop-color="#9b1311"/><stop offset="0.17" stop-color="#a31412"/><stop offset="0.33" stop-color="#aa1413"/><stop offset="0.50" stop-color="#ae1513"/><stop offset="0.67" stop-color="#b31514"/><stop offset="0.83" stop-color="#b71515"/><stop offset="1.00" stop-color="#bc1616"/></linearGradient>
<linearGradient id="s0_35" gradientUnits="userSpaceOnUse" x1="341.0" y1="551.8" x2="269.4" y2="422.0"><stop offset="0.00" stop-color="#a11312"/><stop offset="0.17" stop-color="#a91413"/><stop offset="0.33" stop-color="#ad1413"/><stop offset="0.50" stop-color="#b21514"/><stop offset="0.67" stop-color="#b61515"/><stop offset="0.83" stop-color="#bb1616"/><stop offset="1.00" stop-color="#bf1617"/></linearGradient>
<linearGradient id="s0_36" gradientUnits="userSpaceOnUse" x1="342.5" y1="550.4" x2="270.8" y2="420.6"><stop offset="0.00" stop-color="#a81413"/><stop offset="0.17" stop-color="#ac1414"/><stop offset="0.33" stop-color="#b11515"/><stop offset="0.50" stop-color="#b51516"/><stop offset="0.67" stop-color="#ba1616"/><stop offset="0.83" stop-color="#be1617"/><stop offset="1.00" stop-color="#c21618"/></linearGradient>
<linearGradient id="s0_37" gradientUnits="userSpaceOnUse" x1="344.0" y1="548.9" x2="272.2" y2="419.3"><stop offset="0.00" stop-color="#ac1415"/><stop offset="0.17" stop-color="#b01516"/><stop offset="0.33" stop-color="#b41516"/><stop offset="0.50" stop-color="#b91517"/><stop offset="0.67" stop-color="#bd1618"/><stop offset="0.83" stop-color="#c21619"/><stop offset="1.00" stop-color="#c6171a"/></linearGradient>
<linearGradient id="s0_38" gradientUnits="userSpaceOnUse" x1="345.5" y1="547.4" x2="273.6" y2="417.9"><stop offset="0.00" stop-color="#b01517"/><stop offset="0.17" stop-color="#b41518"/><stop offset="0.33" stop-color="#b81519"/><stop offset="0.50" stop-color="#bd161a"/><stop offset="0.67" stop-color="#c1161b"/><stop offset="0.83" stop-color="#c5171b"/><stop offset="1.00" stop-color="#ca171c"/></linearGradient>
<linearGradient id="s0_39" gradientUnits="userSpaceOnUse" x1="347.1" y1="545.9" x2="275.0" y2="416.5"><stop offset="0.00" stop-color="#b5151c"/><stop offset="0.17" stop-color="#b9151c"/><stop offset="0.33" stop-color="#bd161d"/><stop offset="0.50" stop-color="#c1161e"/><stop offset="0.67" stop-color="#c5161f"/><stop offset="0.83" stop-color="#c9171f"/><stop offset="1.00" stop-color="#cd1720"/></linearGradient>
<linearGradient id="s0_40" gradientUnits="userSpaceOnUse" x1="348.7" y1="544.4" x2="276.5" y2="415.2"><stop offset="0.00" stop-color="#ba1522"/><stop offset="0.17" stop-color="#be1522"/><stop offset="0.33" stop-color="#c21623"/><stop offset="0.50" stop-color="#c61624"/><stop offset="0.67" stop-color="#ca1725"/><stop offset="0.83" stop-color="#cd1726"/><stop offset="1.00" stop-color="#d11626"/></linearGradient>
<linearGradient id="s0_41" gradientUnits="userSpaceOnUse" x1="350.4" y1="542.9" x2="278.1" y2="413.8"><stop offset="0.00" stop-color="#c0152b"/><stop offset="0.17" stop-color="#c3162b"/><stop offset="0.33" stop-color="#c7162c"/><stop offset="0.50" stop-color="#cb162d"/><stop offset="0.67" stop-color="#ce162d"/><stop offset="0.83" stop-color="#d1162e"/><stop offset="1.00" stop-color="#d5162f"/></linearGradient>
<linearGradient id="s0_42" gradientUnits="userSpaceOnUse" x1="352.1" y1="541.4" x2="279.6" y2="412.5"><stop offset="0.00" stop-color="#c61537"/><stop offset="0.17" stop-color="#c91637"/><stop offset="0.33" stop-color="#cd1638"/><stop offset="0.50" stop-color="#d01639"/><stop offset="0.67" stop-color="#d31639"/><stop offset="0.83" stop-color="#d6163a"/><stop offset="1.00" stop-color="#d9163b"/></linearGradient>
<linearGradient id="s0_43" gradientUnits="userSpaceOnUse" x1="353.8" y1="540.0" x2="281.2" y2="411.2"><stop offset="0.00" stop-color="#cd1546"/><stop offset="0.17" stop-color="#cf1647"/><stop offset="0.33" stop-color="#d21647"/><stop offset="0.50" stop-color="#d41648"/><stop offset="0.67" stop-color="#d71548"/><stop offset="0.83" stop-color="#d91549"/><stop offset="1.00" stop-color="#dc154a"/></linearGradient>
<linearGradient id="s0_44" gradientUnits="userSpaceOnUse" x1="355.6" y1="538.5" x2="282.9" y2="409.9"><stop offset="0.00" stop-color="#d31558"/><stop offset="0.17" stop-color="#d51558"/><stop offset="0.33" stop-color="#d71559"/><stop offset="0.50" stop-color="#d91559"/><stop offset="0.67" stop-color="#db155a"/><stop offset="0.83" stop-color="#dc155a"/><stop offset="1.00" stop-color="#de155a"/></linearGradient>
<linearGradient id="s0_45" gradientUnits="userSpaceOnUse" x1="357.3" y1="537.0" x2="284.5" y2="408.6"><stop offset="0.00" stop-color="#d9156a"/><stop offset="0.17" stop-color="#da156a"/><stop offset="0.33" stop-color="#db156b"/><stop offset="0.50" stop-color="#dc156b"/><stop offset="0.67" stop-color="#de156b"/><stop offset="0.83" stop-color="#df156c"/><stop offset="1.00" stop-color="#e0146c"/></linearGradient>
<linearGradient id="s0_46" gradientUnits="userSpaceOnUse" x1="359.1" y1="535.6" x2="286.2" y2="407.3"><stop offset="0.00" stop-color="#dd147b"/><stop offset="0.17" stop-color="#dd147b"/><stop offset="0.33" stop-color="#de147b"/><stop offset="0.50" stop-color="#df147b"/><stop offset="0.67" stop-color="#df147b"/><stop offset="0.83" stop-color="#e0147c"/><stop offset="1.00" stop-color="#e0147c"/></linearGradient>
<linearGradient id="s0_47" gradientUnits="userSpaceOnUse" x1="361.0" y1="534.1" x2="287.9" y2="406.1"><stop offset="0.00" stop-color="#df1487"/><stop offset="0.17" stop-color="#df1487"/><stop offset="0.33" stop-color="#e01487"/><stop offset="0.50" stop-color="#e01487"/><stop offset="0.67" stop-color="#e01487"/><stop offset="0.83" stop-color="#e01487"/><stop offset="1.00" stop-color="#e01487"/></linearGradient>
<linearGradient id="s0_48" gradientUnits="userSpaceOnUse" x1="362.8" y1="532.7" x2="289.7" y2="404.9"><stop offset="0.00" stop-color="#e0148c"/><stop offset="0.17" stop-color="#e0148c"/><stop offset="0.33" stop-color="#e0148c"/><stop offset="0.50" stop-color="#e0148c"/><stop offset="0.67" stop-color="#e0148c"/><stop offset="0.83" stop-color="#e0148c"/><stop offset="1.00" stop-color="#e0148c"/></linearGradient>
<linearGradient id="s0_49" gradientUnits="userSpaceOnUse" x1="364.7" y1="531.3" x2="291.4" y2="403.7"><stop offset="0.00" stop-color="#e01489"/><stop offset="0.17" stop-color="#e01489"/><stop offset="0.33" stop-color="#e01489"/><stop offset="0.50" stop-color="#e01489"/><stop offset="0.67" stop-color="#e01489"/><stop offset="0.83" stop-color="#e01489"/><stop offset="1.00" stop-color="#e01489"/></linearGradient>
<linearGradient id="s0_50" gradientUnits="userSpaceOnUse" x1="366.6" y1="529.9" x2="293.2" y2="402.5"><stop offset="0.00" stop-color="#df147f"/><stop offset="0.17" stop-color="#e01480"/><stop offset="0.33" stop-color="#e01480"/><stop offset="0.50" stop-color="#e11480"/><stop offset="0.67" stop-color="#e11480"/><stop offset="0.83" stop-color="#e11480"/><stop offset="1.00" stop-color="#e2147f"/></linearGradient>
<linearGradient id="s0_51" gradientUnits="userSpaceOnUse" x1="368.6" y1="528.5" x2="295.0" y2="401.3"><stop offset="0.00" stop-color="#df1470"/><stop offset="0.17" stop-color="#e01471"/><stop offset="0.33" stop-color="#e11471"/><stop offset="0.50" stop-color="#e21471"/><stop offset="0.67" stop-color="#e31471"/><stop offset="0.83" stop-color="#e41470"/><stop offset="1.00" stop-color="#e51470"/></linearGradient>
<linearGradient id="s0_52" gradientUnits="userSpaceOnUse" x1="370.5" y1="527.1" x2="296.9" y2="400.2"><stop offset="0.00" stop-color="#e0155f"/><stop offset="0.17" stop-color="#e1155f"/><stop offset="0.33" stop-color="#e31460"/><stop offset="0.50" stop-color="#e4145f"/><stop offset="0.67" stop-color="#e6155f"/><stop offset="0.83" stop-color="#e7155e"/><stop offset="1.00" stop-color="#e9155e"/></linearGradient>
<linearGradient id="s0_53" gradientUnits="userSpaceOnUse" x1="372.5" y1="525.8" x2="298.7" y2="399.0"><stop offset="0.00" stop-color="#e2154e"/><stop offset="0.17" stop-color="#e4154f"/><stop offset="0.33" stop-color="#e6154e"/><stop offset="0.50" stop-color="#e8154d"/><stop offset="0.67" stop-color="#ea154c"/><stop offset="0.83" stop-color="#ec154c"/><stop offset="1.00" stop-color="#ee154b"/></linearGradient>
<linearGradient id="s0_54" gradientUnits="userSpaceOnUse" x1="374.4" y1="524.4" x2="300.6" y2="397.9"><stop offset="0.00" stop-color="#e41540"/><stop offset="0.17" stop-color="#e7153f"/><stop offset="0.33" stop-color="#ea153e"/><stop offset="0.50" stop-color="#ec153d"/><stop offset="0.67" stop-color="#ee153c"/><stop offset="0.83" stop-color="#f1153b"/><stop offset="1.00" stop-color="#f3153a"/></linearGradient>
<linearGradient id="s0_55" gradientUnits="userSpaceOnUse" x1="376.4" y1="523.1" x2="302.5" y2="396.9"><stop offset="0.00" stop-color="#e81534"/><stop offset="0.17" stop-color="#eb1532"/><stop offset="0.33" stop-color="#ed1531"/><stop offset="0.50" stop-color="#f01530"/><stop offset="0.67" stop-color="#f3152f"/><stop offset="0.83" stop-color="#f6152d"/><stop offset="1.00" stop-color="#f9162c"/></linearGradient>
<linearGradient id="s0_56" gradientUnits="userSpaceOnUse" x1="378.4" y1="521.8" x2="304.4" y2="395.8"><stop offset="0.00" stop-color="#eb152a"/><stop offset="0.17" stop-color="#ee1529"/><stop offset="0.33" stop-color="#f11527"/><stop offset="0.50" stop-color="#f41526"/><stop offset="0.67" stop-color="#f81625"/><stop offset="0.83" stop-color="#fb1623"/><stop offset="1.00" stop-color="#fc1623"/></linearGradient>
<linearGradient id="s0_57" gradientUnits="userSpaceOnUse" x1="380.4" y1="520.5" x2="306.3" y2="394.8"><stop offset="0.00" stop-color="#ef1523"/><stop offset="0.17" stop-color="#f21522"/><stop offset="0.33" stop-color="#f51621"/><stop offset="0.50" stop-color="#f8161f"/><stop offset="0.67" stop-color="#fc161e"/><stop offset="0.83" stop-color="#fd161d"/><stop offset="1.00" stop-color="#fd161d"/></linearGradient>
<linearGradient id="s0_58" gradientUnits="userSpaceOnUse" x1="382.5" y1="519.3" x2="308.2" y2="393.8"><stop offset="0.00" stop-color="#f2151f"/><stop offset="0.17" stop-color="#f5161d"/><stop offset="0.33" stop-color="#f9161c"/><stop offset="0.50" stop-color="#fc161b"/><stop offset="0.67" stop-color="#fe161a"/><stop offset="0.83" stop-color="#fe161a"/><stop offset="1.00" stop-color="#fe161a"/></linearGradient>
<linearGradient id="s0_59" gradientUnits="userSpaceOnUse" x1="384.5" y1="518.1" x2="310.1" y2="392.9"><stop offset="0.00" stop-color="#f5161c"/><stop offset="0.17" stop-color="#f9161a"/><stop offset="0.33" stop-color="#fc1619"/><stop offset="0.50" stop-color="#ff1618"/><stop offset="0.67" stop-color="#ff1618"/><stop offset="0.83" stop-color="#ff1618"/><stop offset="1.00" stop-color="#ff1618"/></linearGradient>
<linearGradient id="s0_60" gradientUnits="userSpaceOnUse" x1="386.5" y1="516.8" x2="312.1" y2="391.9"><stop offset="0.00" stop-color="#f8161a"/><stop offset="0.17" stop-color="#fc1618"/><stop offset="0.33" stop-color="#ff1617"/><stop offset="0.50" stop-color="#ff1617"/><stop offset="0.67" stop-color="#ff1617"/><stop offset="0.83" stop-color="#ff1617"/><stop offset="1.00" stop-color="#ff1617"/></linearGradient>
<linearGradient id="s0_61" gradientUnits="userSpaceOnUse" x1="388.6" y1="515.7" x2="314.0" y2="391.0"><stop offset="0.00" stop-color="#fb1618"/><stop offset="0.17" stop-color="#ff1616"/><stop offset="0.33" stop-color="#ff1616"/><stop offset="0.50" stop-color="#ff1616"/><stop offset="0.67" stop-color="#ff1616"/><stop offset="0.83" stop-color="#ff1616"/><stop offset="1.00" stop-color="#ff1616"/></linearGradient>
<linearGradient id="s0_62" gradientUnits="userSpaceOnUse" x1="390.6" y1="514.5" x2="315.9" y2="390.2"><stop offset="0.00" stop-color="#fe1616"/><stop offset="0.17" stop-color="#ff1616"/><stop offset="0.33" stop-color="#ff1616"/><stop offset="0.50" stop-color="#ff1616"/><stop offset="0.67" stop-color="#ff1616"/><stop offset="0.83" stop-color="#ff1616"/><stop offset="1.00" stop-color="#ff1616"/></linearGradient>
<linearGradient id="s0_63" gradientUnits="userSpaceOnUse" x1="392.7" y1="513.4" x2="317.9" y2="389.3"><stop offset="0.00" stop-color="#ff1616"/><stop offset="0.17" stop-color="#ff1616"/><stop offset="0.33" stop-color="#ff1616"/><stop offset="0.50" stop-color="#ff1616"/><stop offset="0.67" stop-color="#ff1616"/><stop offset="0.83" stop-color="#ff1616"/><stop offset="1.00" stop-color="#ff1616"/></linearGradient>
<linearGradient id="s0_64" gradientUnits="userSpaceOnUse" x1="394.7" y1="512.3" x2="319.9" y2="388.5"><stop offset="0.00" stop-color="#ff1616"/><stop offset="0.17" stop-color="#ff1616"/><stop offset="0.33" stop-color="#ff1616"/><stop offset="0.50" stop-color="#ff1616"/><stop offset="0.67" stop-color="#ff1616"/><stop offset="0.83" stop-color="#ff1616"/><stop offset="1.00" stop-color="#ff1616"/></linearGradient>
<linearGradient id="s0_65" gradientUnits="userSpaceOnUse" x1="396.7" y1="511.2" x2="321.8" y2="387.8"><stop offset="0.00" stop-color="#ff1616"/><stop offset="0.17" stop-color="#ff1616"/><stop offset="0.33" stop-color="#ff1616"/><stop offset="0.50" stop-color="#ff1616"/><stop offset="0.67" stop-color="#ff1616"/><stop offset="0.83" stop-color="#ff1616"/><stop offset="1.00" stop-color="#ff1616"/></linearGradient>
<linearGradient id="s0_66" gradientUnits="userSpaceOnUse" x1="398.8" y1="510.2" x2="323.8" y2="387.0"><stop offset="0.00" stop-color="#ff1616"/><stop offset="0.17" stop-color="#ff1616"/><stop offset="0.33" stop-color="#ff1616"/><stop offset="0.50" stop-color="#ff1616"/><stop offset="0.67" stop-color="#ff1616"/><stop offset="0.83" stop-color="#ff1616"/><stop offset="1.00" stop-color="#ff1616"/></linearGradient>
<linearGradient id="s0_67" gradientUnits="userSpaceOnUse" x1="400.8" y1="509.2" x2="325.7" y2="386.3"><stop offset="0.00" stop-color="#ff1616"/><stop offset="0.17" stop-color="#ff1616"/><stop offset="0.33" stop-color="#ff1616"/><stop offset="0.50" stop-color="#ff1616"/><stop offset="0.67" stop-color="#ff1616"/><stop offset="0.83" stop-color="#ff1616"/><stop offset="1.00" stop-color="#ff1616"/></linearGradient>
<linearGradient id="s0_68" gradientUnits="userSpaceOnUse" x1="402.8" y1="508.2" x2="327.6" y2="385.7"><stop offset="0.00" stop-color="#ff1616"/><stop offset="0.17" stop-color="#ff1616"/><stop offset="0.33" stop-color="#ff1616"/><stop offset="0.50" stop-color="#ff1616"/><stop offset="0.67" stop-color="#ff1616"/><stop offset="0.83" stop-color="#ff1616"/><stop offset="1.00" stop-color="#ff1616"/></linearGradient>
<linearGradient id="s0_69" gradientUnits="userSpaceOnUse" x1="404.8" y1="507.3" x2="329.6" y2="385.0"><stop offset="0.00" stop-color="#ff1616"/><stop offset="0.17" stop-color="#ff1616"/><stop offset="0.33" stop-color="#ff1616"/><stop offset="0.50" stop-color="#ff1616"/><stop offset="0.67" stop-color="#ff1616"/><stop offset="0.83" stop-color="#ff1616"/><stop offset="1.00" stop-color="#ff1616"/></linearGradient>
<linearGradient id="s0_70" gradientUnits="userSpaceOnUse" x1="406.8" y1="506.4" x2="331.5" y2="384.4"><stop offset="0.00" stop-color="#ff1616"/><stop offset="0.17" stop-color="#ff1616"/><stop offset="0.33" stop-color="#ff1616"/><stop offset="0.50" stop-color="#ff1616"/><stop offset="0.67" stop-color="#ff1616"/><stop offset="0.83" stop-color="#ff1616"/><stop offset="1.00" stop-color="#ff1616"/></linearGradient>
<linearGradient id="s0_71" gradientUnits="userSpaceOnUse" x1="408.8" y1="505.5" x2="333.4" y2="383.9"><stop offset="0.00" stop-color="#ff1616"/><stop offset="0.17" stop-color="#ff1616"/><stop offset="0.33" stop-color="#ff1616"/><stop offset="0.50" stop-color="#ff1616"/><stop offset="0.67" stop-color="#ff1616"/><stop offset="0.83" stop-color="#ff1616"/><stop offset="1.00" stop-color="#ff1616"/></linearGradient>
<linearGradient id="s0_72" gradientUnits="userSpaceOnUse" x1="410.8" y1="504.6" x2="335.3" y2="383.4"><stop offset="0.00" stop-color="#ff1616"/><stop offset="0.17" stop-color="#ff1616"/><stop offset="0.33" stop-color="#ff1616"/><stop offset="0.50" stop-color="#ff1616"/><stop offset="0.67" stop-color="#ff1616"/><stop offset="0.83" stop-color="#ff1616"/><stop offset="1.00" stop-color="#ff1515"/></linearGradient>
<linearGradient id="s0_73" gradientUnits="userSpaceOnUse" x1="412.8" y1="503.8" x2="337.2" y2="382.9"><stop offset="0.00" stop-color="#ff1616"/><stop offset="0.17" stop-color="#ff1616"/><stop offset="0.33" stop-color="#ff1616"/><stop offset="0.50" stop-color="#ff1616"/><stop offset="0.67" stop-color="#ff1616"/><stop offset="0.83" stop-color="#ff1515"/><stop offset="1.00" stop-color="#ff1515"/></linearGradient>
<linearGradient id="s0_74" gradientUnits="userSpaceOnUse" x1="414.7" y1="503.1" x2="339.1" y2="382.4"><stop offset="0.00" stop-color="#ff1616"/><stop offset="0.17" stop-color="#ff1616"/><stop offset="0.33" stop-color="#ff1616"/><stop offset="0.50" stop-color="#ff1616"/><stop offset="0.67" stop-color="#ff1515"/><stop offset="0.83" stop-color="#ff1515"/><stop offset="1.00" stop-color="#ff1515"/></linearGradient>
<linearGradient id="s0_75" gradientUnits="userSpaceOnUse" x1="416.6" y1="502.3" x2="341.0" y2="382.0"><stop offset="0.00" stop-color="#ff1616"/><stop offset="0.17" stop-color="#ff1616"/><stop offset="0.33" stop-color="#ff1616"/><stop offset="0.50" stop-color="#ff1616"/><stop offset="0.67" stop-color="#ff1515"/><stop offset="0.83" stop-color="#ff1515"/><stop offset="1.00" stop-color="#ff1515"/></linearGradient>
<linearGradient id="s0_76" gradientUnits="userSpaceOnUse" x1="418.5" y1="501.6" x2="342.8" y2="381.7"><stop offset="0.00" stop-color="#ff1616"/><stop offset="0.17" stop-color="#ff1616"/><stop offset="0.33" stop-color="#ff1616"/><stop offset="0.50" stop-color="#ff1515"/><stop offset="0.67" stop-color="#ff1515"/><stop offset="0.83" stop-color="#ff1515"/><stop offset="1.00" stop-color="#ff1515"/></linearGradient>
<linearGradient id="s0_77" gradientUnits="userSpaceOnUse" x1="420.4" y1="501.0" x2="344.6" y2="381.3"><stop offset="0.00" stop-color="#ff1616"/><stop offset="0.17" stop-color="#ff1616"/><stop offset="0.33" stop-color="#ff1515"/><stop offset="0.50" stop-color="#ff1515"/><stop offset="0.67" stop-color="#ff1515"/><stop offset="0.83" stop-color="#ff1515"/><stop offset="1.00" stop-color="#ff1515"/></linearGradient>
<linearGradient id="s0_78" gradientUnits="userSpaceOnUse" x1="422.3" y1="500.4" x2="346.5" y2="381.1"><stop offset="0.00" stop-color="#fc1515"/><stop offset="0.17" stop-color="#fc1515"/><stop offset="0.33" stop-color="#fc1515"/><stop offset="0.50" stop-color="#fc1515"/><stop offset="0.67" stop-color="#fc1515"/><stop offset="0.83" stop-color="#fc1515"/><stop offset="1.00" stop-color="#fc1515"/></linearGradient>
<linearGradient id="s0_79" gradientUnits="userSpaceOnUse" x1="424.1" y1="499.8" x2="348.2" y2="380.8"><stop offset="0.00" stop-color="#f91515"/><stop offset="0.17" stop-color="#f91515"/><stop offset="0.33" stop-color="#f91515"/><stop offset="0.50" stop-color="#f91515"/><stop offset="0.67" stop-color="#f91515"/><stop offset="0.83" stop-color="#f91515"/><stop offset="1.00" stop-color="#f91515"/></linearGradient>
<linearGradient id="s0_80" gradientUnits="userSpaceOnUse" x1="425.9" y1="499.3" x2="350.0" y2="380.6"><stop offset="0.00" stop-color="#f71515"/><stop offset="0.17" stop-color="#f71515"/><stop offset="0.33" stop-color="#f71515"/><stop offset="0.50" stop-color="#f71515"/><stop offset="0.67" stop-color="#f71515"/><stop offset="0.83" stop-color="#f71515"/><stop offset="1.00" stop-color="#f71515"/></linearGradient>
<linearGradient id="s0_81" gradientUnits="userSpaceOnUse" x1="427.7" y1="498.8" x2="351.7" y2="380.4"><stop offset="0.00" stop-color="#f41515"/><stop offset="0.17" stop-color="#f41515"/><stop offset="0.33" stop-color="#f41414"/><stop offset="0.50" stop-color="#f41414"/><stop offset="0.67" stop-color="#f41414"/><stop offset="0.83" stop-color="#f41414"/><stop offset="1.00" stop-color="#f41414"/></linearGradient>
<linearGradient id="s0_82" gradientUnits="userSpaceOnUse" x1="429.5" y1="498.3" x2="353.5" y2="380.3"><stop offset="0.00" stop-color="#f11414"/><stop offset="0.17" stop-color="#f11414"/><stop offset="0.33" stop-color="#f11414"/><stop offset="0.50" stop-color="#f11414"/><stop offset="0.67" stop-color="#f11414"/><stop offset="0.83" stop-color="#f11414"/><stop offset="1.00" stop-color="#f11414"/></linearGradient>
<linearGradient id="s0_83" gradientUnits="userSpaceOnUse" x1="431.2" y1="497.9" x2="355.1" y2="380.2"><stop offset="0.00" stop-color="#ef1414"/><stop offset="0.17" stop-color="#ef1414"/><stop offset="0.33" stop-color="#ef1414"/><stop offset="0.50" stop-color="#ef1414"/><stop offset="0.67" stop-color="#ef1414"/><stop offset="0.83" stop-color="#ef1414"/><stop offset="1.00" stop-color="#ef1414"/></linearGradient>
<linearGradient id="s0_84" gradientUnits="userSpaceOnUse" x1="432.9" y1="497.5" x2="356.8" y2="380.2"><stop offset="0.00" stop-color="#ec1414"/><stop offset="0.17" stop-color="#ec1414"/><stop offset="0.33" stop-color="#ec1414"/><stop offset="0.50" stop-color="#ec1414"/><stop offset="0.67" stop-color="#ec1414"/><stop offset="0.83" stop-color="#ec1414"/><stop offset="1.00" stop-color="#ec1414"/></linearGradient>
<linearGradient id="s0_85" gradientUnits="userSpaceOnUse" x1="434.5" y1="497.2" x2="358.4" y2="380.2"><stop offset="0.00" stop-color="#ea1414"/><stop offset="0.17" stop-color="#ea1414"/><stop offset="0.33" stop-color="#ea1414"/><stop offset="0.50" stop-color="#ea1414"/><stop offset="0.67" stop-color="#ea1313"/><stop offset="0.83" stop-color="#ea1313"/><stop offset="1.00" stop-color="#ea1313"/></linearGradient>
<linearGradient id="s0_86" gradientUnits="userSpaceOnUse" x1="436.1" y1="496.9" x2="360.0" y2="380.2"><stop offset="0.00" stop-color="#e81313"/><stop offset="0.17" stop-color="#e81313"/><stop offset="0.33" stop-color="#e81313"/><stop offset="0.50" stop-color="#e81313"/><stop offset="0.67" stop-color="#e81313"/><stop offset="0.83" stop-color="#e81313"/><stop offset="1.00" stop-color="#e81313"/></linearGradient>
<linearGradient id="s0_87" gradientUnits="userSpaceOnUse" x1="437.7" y1="496.6" x2="361.6" y2="380.3"><stop offset="0.00" stop-color="#e51313"/><stop offset="0.17" stop-color="#e51313"/><stop offset="0.33" stop-color="#e51313"/><stop offset="0.50" stop-color="#e51313"/><stop offset="0.67" stop-color="#e51313"/><stop offset="0.83" stop-color="#e51313"/><stop offset="1.00" stop-color="#e51313"/></linearGradient>
<linearGradient id="s0_88" gradientUnits="userSpaceOnUse" x1="439.3" y1="496.4" x2="363.1" y2="380.4"><stop offset="0.00" stop-color="#e31313"/><stop offset="0.17" stop-color="#e31313"/><stop offset="0.33" stop-color="#e31313"/><stop offset="0.50" stop-color="#e31313"/><stop offset="0.67" stop-color="#e31313"/><stop offset="0.83" stop-color="#e31313"/><stop offset="1.00" stop-color="#e31313"/></linearGradient>
<linearGradient id="s0_89" gradientUnits="userSpaceOnUse" x1="440.8" y1="496.2" x2="364.6" y2="380.5"><stop offset="0.00" stop-color="#e11313"/><stop offset="0.17" stop-color="#e11313"/><stop offset="0.33" stop-color="#e11313"/><stop offset="0.50" stop-color="#e11313"/><stop offset="0.67" stop-color="#e11313"/><stop offset="0.83" stop-color="#e11313"/><stop offset="1.00" stop-color="#e11313"/></linearGradient>
<linearGradient id="s0_90" gradientUnits="userSpaceOnUse" x1="442.2" y1="496.1" x2="366.0" y2="380.7"><stop offset="0.00" stop-color="#df1313"/><stop offset="0.17" stop-color="#df1313"/><stop offset="0.33" stop-color="#df1313"/><stop offset="0.50" stop-color="#df1313"/><stop offset="0.67" stop-color="#df1313"/><stop offset="0.83" stop-color="#df1212"/><stop offset="1.00" stop-color="#df1212"/></linearGradient>
<linearGradient id="s0_91" gradientUnits="userSpaceOnUse" x1="443.7" y1="496.0" x2="367.5" y2="380.9"><stop offset="0.00" stop-color="#dd1212"/><stop offset="0.17" stop-color="#dd1212"/><stop offset="0.33" stop-color="#dd1212"/><stop offset="0.50" stop-color="#dd1212"/><stop offset="0.67" stop-color="#dd1212"/><stop offset="0.83" stop-color="#dd1212"/><stop offset="1.00" stop-color="#dd1212"/></linearGradient>
<linearGradient id="s0_92" gradientUnits="userSpaceOnUse" x1="445.0" y1="496.0" x2="368.8" y2="381.2"><stop offset="0.00" stop-color="#dc1212"/><stop offset="0.17" stop-color="#dc1212"/><stop offset="0.33" stop-color="#dc1212"/><stop offset="0.50" stop-color="#dc1212"/><stop offset="0.67" stop-color="#dc1212"/><stop offset="0.83" stop-color="#dc1212"/><stop offset="1.00" stop-color="#dc1212"/></linearGradient>
<linearGradient id="s0_93" gradientUnits="userSpaceOnUse" x1="446.4" y1="496.0" x2="370.2" y2="381.5"><stop offset="0.00" stop-color="#da1212"/><stop offset="0.17" stop-color="#da1212"/><stop offset="0.33" stop-color="#da1212"/><stop offset="0.50" stop-color="#da1212"/><stop offset="0.67" stop-color="#da1212"/><stop offset="0.83" stop-color="#da1212"/><stop offset="1.00" stop-color="#da1212"/></linearGradient>
<linearGradient id="s0_94" gradientUnits="userSpaceOnUse" x1="447.7" y1="496.0" x2="371.5" y2="381.9"><stop offset="0.00" stop-color="#d81212"/><stop offset="0.17" stop-color="#d81212"/><stop offset="0.33" stop-color="#d81212"/><stop offset="0.50" stop-color="#d81212"/><stop offset="0.67" stop-color="#d81212"/><stop offset="0.83" stop-color="#d81212"/><stop offset="1.00" stop-color="#d81212"/></linearGradient>
<linearGradient id="s0_95" gradientUnits="userSpaceOnUse" x1="448.9" y1="496.1" x2="372.7" y2="382.2"><stop offset="0.00" stop-color="#d71212"/><stop offset="0.17" stop-color="#d71212"/><stop offset="0.33" stop-color="#d71212"/><stop offset="0.50" stop-color="#d71212"/><stop offset="0.67" stop-color="#d71212"/><stop offset="0.83" stop-color="#d71212"/><stop offset="1.00" stop-color="#d71212"/></linearGradient>
<linearGradient id="s0_96" gradientUnits="userSpaceOnUse" x1="450.1" y1="496.3" x2="373.9" y2="382.7"><stop offset="0.00" stop-color="#d51212"/><stop offset="0.17" stop-color="#d51212"/><stop offset="0.33" stop-color="#d51212"/><stop offset="0.50" stop-color="#d51212"/><stop offset="0.67" stop-color="#d51212"/><stop offset="0.83" stop-color="#d51212"/><stop offset="1.00" stop-color="#d51212"/></linearGradient>
<linearGradient id="s0_97" gradientUnits="userSpaceOnUse" x1="451.3" y1="496.4" x2="375.1" y2="383.1"><stop offset="0.00" stop-color="#d41212"/><stop offset="0.17" stop-color="#d41212"/><stop offset="0.33" stop-color="#d41212"/><stop offset="0.50" stop-color="#d41212"/><stop offset="0.67" stop-color="#d41111"/><stop offset="0.83" stop-color="#d41111"/><stop offset="1.00" stop-color="#d41111"/></linearGradient>
<linearGradient id="s0_98" gradientUnits="userSpaceOnUse" x1="452.4" y1="496.6" x2="376.2" y2="383.6"><stop offset="0.00" stop-color="#d31212"/><stop offset="0.17" stop-color="#d31111"/><stop offset="0.33" stop-color="#d31111"/><stop offset="0.50" stop-color="#d31111"/><stop offset="0.67" stop-color="#d31111"/><stop offset="0.83" stop-color="#d31111"/><stop offset="1.00" stop-color="#d31111"/></linearGradient>
<linearGradient id="s0_99" gradientUnits="userSpaceOnUse" x1="453.4" y1="496.9" x2="377.3" y2="384.2"><stop offset="0.00" stop-color="#d21111"/><stop offset="0.17" stop-color="#d21111"/><stop offset="0.33" stop-color="#d21111"/><stop offset="0.50" stop-color="#d21111"/><stop offset="0.67" stop-color="#d21111"/><stop offset="0.83" stop-color="#d21111"/><stop offset="1.00" stop-color="#d21111"/></linearGradient>
<linearGradient id="s0_100" gradientUnits="userSpaceOnUse" x1="454.4" y1="497.2" x2="378.3" y2="384.8"><stop offset="0.00" stop-color="#d11111"/><stop offset="0.17" stop-color="#d11111"/><stop offset="0.33" stop-color="#d11111"/><stop offset="0.50" stop-color="#d11111"/><stop offset="0.67" stop-color="#d11111"/><stop offset="0.83" stop-color="#d11111"/><stop offset="1.00" stop-color="#d11111"/></linearGradient>
<linearGradient id="s0_101" gradientUnits="userSpaceOnUse" x1="455.4" y1="497.5" x2="379.3" y2="385.4"><stop offset="0.00" stop-color="#d01111"/><stop offset="0.17" stop-color="#d01111"/><stop offset="0.33" stop-color="#d01111"/><stop offset="0.50" stop-color="#d01111"/><stop offset="0.67" stop-color="#d01111"/><stop offset="0.83" stop-color="#d01111"/><stop offset="1.00" stop-color="#d01111"/></linearGradient>
<linearGradient id="s0_102" gradientUnits="userSpaceOnUse" x1="456.3" y1="497.9" x2="380.2" y2="386.0"><stop offset="0.00" stop-color="#cf1111"/><stop offset="0.17" stop-color="#cf1111"/><stop offset="0.33" stop-color="#cf1111"/><stop offset="0.50" stop-color="#cf1111"/><stop offset="0.67" stop-color="#cf1111"/><stop offset="0.83" stop-color="#cf1111"/><stop offset="1.00" stop-color="#cf1111"/></linearGradient>
<linearGradient id="s0_103" gradientUnits="userSpaceOnUse" x1="457.1" y1="498.3" x2="381.1" y2="386.7"><stop offset="0.00" stop-color="#ce1111"/><stop offset="0.17" stop-color="#ce1111"/><stop offset="0.33" stop-color="#ce1111"/><stop offset="0.50" stop-color="#ce1111"/><stop offset="0.67" stop-color="#ce1111"/><stop offset="0.83" stop-color="#ce1111"/><stop offset="1.00" stop-color="#ce1111"/></linearGradient>
<linearGradient id="s0_104" gradientUnits="userSpaceOnUse" x1="457.9" y1="498.8" x2="382.0" y2="387.4"><stop offset="0.00" stop-color="#ce1111"/><stop offset="0.17" stop-color="#ce1111"/><stop offset="0.33" stop-color="#ce1111"/><stop offset="0.50" stop-color="#ce1111"/><stop offset="0.67" stop-color="#ce1111"/><stop offset="0.83" stop-color="#ce1111"/><stop offset="1.00" stop-color="#ce1111"/></linearGradient>
<linearGradient id="s0_105" gradientUnits="userSpaceOnUse" x1="458.7" y1="499.3" x2="382.7" y2="388.2"><stop offset="0.00" stop-color="#cd1111"/><stop offset="0.17" stop-color="#cd1111"/><stop offset="0.33" stop-color="#cd1111"/><stop offset="0.50" stop-color="#cd1111"/><stop offset="0.67" stop-color="#cd1111"/><stop offset="0.83" stop-color="#cd1111"/><stop offset="1.00" stop-color="#cd1111"/></linearGradient>
<linearGradient id="s0_106" gradientUnits="userSpaceOnUse" x1="459.4" y1="499.9" x2="383.5" y2="389.0"><stop offset="0.00" stop-color="#cd1111"/><stop offset="0.17" stop-color="#cd1111"/><stop offset="0.33" stop-color="#cd1111"/><stop offset="0.50" stop-color="#cd1111"/><stop offset="0.67" stop-color="#cd1111"/><stop offset="0.83" stop-color="#cd1111"/><stop offset="1.00" stop-color="#cd1111"/></linearGradient>
<linearGradient id="s0_107" gradientUnits="userSpaceOnUse" x1="460.0" y1="500.4" x2="384.1" y2="389.8"><stop offset="0.00" stop-color="#cc1111"/><stop offset="0.17" stop-color="#cc1111"/><stop offset="0.33" stop-color="#cc1111"/><stop offset="0.50" stop-color="#cc1111"/><stop offset="0.67" stop-color="#cc1111"/><stop offset="0.83" stop-color="#cc1111"/><stop offset="1.00" stop-color="#cc1111"/></linearGradient>
<linearGradient id="s0_108" gradientUnits="userSpaceOnUse" x1="460.6" y1="501.1" x2="384.8" y2="390.6"><stop offset="0.00" stop-color="#cc1111"/><stop offset="0.17" stop-color="#cc1111"/><stop offset="0.33" stop-color="#cc1111"/><stop offset="0.50" stop-color="#cc1111"/><stop offset="0.67" stop-color="#cc1111"/><stop offset="0.83" stop-color="#cc1111"/><stop offset="1.00" stop-color="#cc1111"/></linearGradient>
<linearGradient id="s0_109" gradientUnits="userSpaceOnUse" x1="461.1" y1="501.7" x2="385.3" y2="391.5"><stop offset="0.00" stop-color="#cc1111"/><stop offset="0.17" stop-color="#cc1111"/><stop offset="0.33" stop-color="#cc1111"/><stop offset="0.50" stop-color="#cc1111"/><stop offset="0.67" stop-color="#cc1111"/><stop offset="0.83" stop-color="#cc1111"/><stop offset="1.00" stop-color="#cc1111"/></linearGradient>
<path d="M338.2 600.4 L321.4 593.6 L253.3 465.9 L270.6 477.6Z" fill="url(#s0_1000)"/>
<path d="M460.8 501.3 L460.5 519.4 L386.3 411.9 L385.0 391.0Z" fill="url(#s0_1001)"/>
<path d="M321.9 594.3 L321.1 592.9 L252.9 465.0 L253.8 466.8Z" fill="url(#s0_0)"/>
<path d="M321.5 593.6 L320.8 592.1 L252.5 464.0 L253.3 465.9Z" fill="url(#s0_1)"/>
<path d="M321.1 592.9 L320.5 591.3 L252.1 462.9 L252.9 465.0Z" fill="url(#s0_2)"/>
<path d="M320.8 592.1 L320.3 590.4 L251.9 461.9 L252.5 464.0Z" fill="url(#s0_3)"/>
<path d="M320.5 591.3 L320.2 589.5 L251.7 460.8 L252.1 462.9Z" fill="url(#s0_4)"/>
<path d="M320.3 590.4 L320.1 588.6 L251.5 459.7 L251.9 461.9Z" fill="url(#s0_5)"/>
<path d="M320.2 589.5 L320.0 587.6 L251.4 458.6 L251.7 460.8Z" fill="url(#s0_6)"/>
<path d="M320.1 588.6 L320.1 586.6 L251.3 457.5 L251.5 459.7Z" fill="url(#s0_7)"/>
<path d="M320.0 587.6 L320.2 585.6 L251.3 456.3 L251.4 458.6Z" fill="url(#s0_8)"/>
<path d="M320.1 586.6 L320.3 584.5 L251.4 455.1 L251.3 457.5Z" fill="url(#s0_9)"/>
<path d="M320.2 585.6 L320.5 583.4 L251.5 453.9 L251.3 456.3Z" fill="url(#s0_10)"/>
<path d="M320.3 584.5 L320.8 582.3 L251.7 452.7 L251.4 455.1Z" fill="url(#s0_11)"/>
<path d="M320.5 583.4 L321.1 581.2 L251.9 451.4 L251.5 453.9Z" fill="url(#s0_12)"/>
<path d="M320.8 582.3 L321.5 580.0 L252.2 450.2 L251.7 452.7Z" fill="url(#s0_13)"/>
<path d="M321.1 581.2 L321.9 578.8 L252.5 448.9 L251.9 451.4Z" fill="url(#s0_14)"/>
<path d="M321.5 580.0 L322.4 577.6 L252.9 447.6 L252.2 450.2Z" fill="url(#s0_15)"/>
<path d="M321.9 578.8 L322.9 576.4 L253.4 446.3 L252.5 448.9Z" fill="url(#s0_16)"/>
<path d="M322.4 577.6 L323.6 575.1 L253.9 444.9 L252.9 447.6Z" fill="url(#s0_17)"/>
<path d="M322.9 576.4 L324.2 573.8 L254.4 443.6 L253.4 446.3Z" fill="url(#s0_18)"/>
<path d="M323.6 575.1 L324.9 572.5 L255.0 442.2 L253.9 444.9Z" fill="url(#s0_19)"/>
<path d="M324.2 573.8 L325.7 571.2 L255.7 440.9 L254.4 443.6Z" fill="url(#s0_20)"/>
<path d="M324.9 572.5 L326.5 569.8 L256.4 439.5 L255.0 442.2Z" fill="url(#s0_21)"/>
<path d="M325.7 571.2 L327.4 568.5 L257.2 438.1 L255.7 440.9Z" fill="url(#s0_22)"/>
<path d="M326.5 569.8 L328.3 567.1 L258.0 436.7 L256.4 439.5Z" fill="url(#s0_23)"/>
<path d="M327.4 568.5 L329.3 565.7 L258.9 435.3 L257.2 438.1Z" fill="url(#s0_24)"/>
<path d="M328.3 567.1 L330.3 564.3 L259.8 433.9 L258.0 436.7Z" fill="url(#s0_25)"/>
<path d="M329.3 565.7 L331.4 562.8 L260.7 432.5 L258.9 435.3Z" fill="url(#s0_26)"/>
<path d="M330.3 564.3 L332.5 561.4 L261.7 431.1 L259.8 433.9Z" fill="url(#s0_27)"/>
<path d="M331.4 562.8 L333.7 560.0 L262.8 429.7 L260.7 432.5Z" fill="url(#s0_28)"/>
<path d="M332.5 561.4 L335.0 558.5 L263.9 428.3 L261.7 431.1Z" fill="url(#s0_29)"/>
<path d="M333.7 560.0 L336.2 557.0 L265.1 426.9 L262.8 429.7Z" fill="url(#s0_30)"/>
<path d="M335.0 558.5 L337.5 555.6 L266.3 425.5 L263.9 428.3Z" fill="url(#s0_31)"/>
<path d="M336.2 557.0 L338.9 554.1 L267.5 424.1 L265.1 426.9Z" fill="url(#s0_32)"/>
<path d="M337.5 555.6 L340.3 552.6 L268.8 422.7 L266.3 425.5Z" fill="url(#s0_33)"/>
<path d="M338.9 554.1 L341.8 551.1 L270.1 421.3 L267.5 424.1Z" fill="url(#s0_34)"/>
<path d="M340.3 552.6 L343.2 549.6 L271.5 419.9 L268.8 422.7Z" fill="url(#s0_35)"/>
<path d="M341.8 551.1 L344.8 548.1 L272.9 418.6 L270.1 421.3Z" fill="url(#s0_36)"/>
<path d="M343.2 549.6 L346.3 546.6 L274.3 417.2 L271.5 419.9Z" fill="url(#s0_37)"/>
<path d="M344.8 548.1 L347.9 545.1 L275.8 415.8 L272.9 418.6Z" fill="url(#s0_38)"/>
<path d="M346.3 546.6 L349.6 543.7 L277.3 414.5 L274.3 417.2Z" fill="url(#s0_39)"/>
<path d="M347.9 545.1 L351.2 542.2 L278.8 413.2 L275.8 415.8Z" fill="url(#s0_40)"/>
<path d="M349.6 543.7 L352.9 540.7 L280.4 411.8 L277.3 414.5Z" fill="url(#s0_41)"/>
<path d="M351.2 542.2 L354.7 539.2 L282.0 410.5 L278.8 413.2Z" fill="url(#s0_42)"/>
<path d="M352.9 540.7 L356.4 537.8 L283.7 409.2 L280.4 411.8Z" fill="url(#s0_43)"/>
<path d="M354.7 539.2 L358.2 536.3 L285.4 408.0 L282.0 410.5Z" fill="url(#s0_44)"/>
<path d="M356.4 537.8 L360.1 534.9 L287.1 406.7 L283.7 409.2Z" fill="url(#s0_45)"/>
<path d="M358.2 536.3 L361.9 533.4 L288.8 405.5 L285.4 408.0Z" fill="url(#s0_46)"/>
<path d="M360.1 534.9 L363.8 532.0 L290.6 404.3 L287.1 406.7Z" fill="url(#s0_47)"/>
<path d="M361.9 533.4 L365.7 530.6 L292.3 403.1 L288.8 405.5Z" fill="url(#s0_48)"/>
<path d="M363.8 532.0 L367.6 529.2 L294.1 401.9 L290.6 404.3Z" fill="url(#s0_49)"/>
<path d="M365.7 530.6 L369.5 527.8 L295.9 400.7 L292.3 403.1Z" fill="url(#s0_50)"/>
<path d="M367.6 529.2 L371.5 526.4 L297.8 399.6 L294.1 401.9Z" fill="url(#s0_51)"/>
<path d="M369.5 527.8 L373.4 525.1 L299.6 398.5 L295.9 400.7Z" fill="url(#s0_52)"/>
<path d="M371.5 526.4 L375.4 523.8 L301.5 397.4 L297.8 399.6Z" fill="url(#s0_53)"/>
<path d="M373.4 525.1 L377.4 522.5 L303.4 396.3 L299.6 398.5Z" fill="url(#s0_54)"/>
<path d="M375.4 523.8 L379.4 521.2 L305.3 395.3 L301.5 397.4Z" fill="url(#s0_55)"/>
<path d="M377.4 522.5 L381.5 519.9 L307.2 394.3 L303.4 396.3Z" fill="url(#s0_56)"/>
<path d="M379.4 521.2 L383.5 518.7 L309.2 393.3 L305.3 395.3Z" fill="url(#s0_57)"/>
<path d="M381.5 519.9 L385.5 517.4 L311.1 392.4 L307.2 394.3Z" fill="url(#s0_58)"/>
<path d="M383.5 518.7 L387.6 516.3 L313.0 391.5 L309.2 393.3Z" fill="url(#s0_59)"/>
<path d="M385.5 517.4 L389.6 515.1 L315.0 390.6 L311.1 392.4Z" fill="url(#s0_60)"/>
<path d="M387.6 516.3 L391.6 514.0 L316.9 389.8 L313.0 391.5Z" fill="url(#s0_61)"/>
<path d="M389.6 515.1 L393.7 512.8 L318.9 388.9 L315.0 390.6Z" fill="url(#s0_62)"/>
<path d="M391.6 514.0 L395.7 511.8 L320.8 388.2 L316.9 389.8Z" fill="url(#s0_63)"/>
<path d="M393.7 512.8 L397.8 510.7 L322.8 387.4 L318.9 388.9Z" fill="url(#s0_64)"/>
<path d="M395.7 511.8 L399.8 509.7 L324.7 386.7 L320.8 388.2Z" fill="url(#s0_65)"/>
<path d="M397.8 510.7 L401.8 508.7 L326.7 386.0 L322.8 387.4Z" fill="url(#s0_66)"/>
<path d="M399.8 509.7 L403.8 507.7 L328.6 385.4 L324.7 386.7Z" fill="url(#s0_67)"/>
<path d="M401.8 508.7 L405.8 506.8 L330.5 384.7 L326.7 386.0Z" fill="url(#s0_68)"/>
<path d="M403.8 507.7 L407.8 505.9 L332.5 384.2 L328.6 385.4Z" fill="url(#s0_69)"/>
<path d="M405.8 506.8 L409.8 505.1 L334.4 383.6 L330.5 384.7Z" fill="url(#s0_70)"/>
<path d="M407.8 505.9 L411.8 504.2 L336.3 383.1 L332.5 384.2Z" fill="url(#s0_71)"/>
<path d="M409.8 505.1 L413.8 503.4 L338.2 382.7 L334.4 383.6Z" fill="url(#s0_72)"/>
<path d="M411.8 504.2 L415.7 502.7 L340.0 382.2 L336.3 383.1Z" fill="url(#s0_73)"/>
<path d="M413.8 503.4 L417.6 502.0 L341.9 381.9 L338.2 382.7Z" fill="url(#s0_74)"/>
<path d="M415.7 502.7 L419.5 501.3 L343.7 381.5 L340.0 382.2Z" fill="url(#s0_75)"/>
<path d="M417.6 502.0 L421.4 500.7 L345.6 381.2 L341.9 381.9Z" fill="url(#s0_76)"/>
<path d="M419.5 501.3 L423.2 500.1 L347.3 380.9 L343.7 381.5Z" fill="url(#s0_77)"/>
<path d="M421.4 500.7 L425.0 499.5 L349.1 380.7 L345.6 381.2Z" fill="url(#s0_78)"/>
<path d="M423.2 500.1 L426.8 499.0 L350.9 380.5 L347.3 380.9Z" fill="url(#s0_79)"/>
<path d="M425.0 499.5 L428.6 498.5 L352.6 380.4 L349.1 380.7Z" fill="url(#s0_80)"/>
<path d="M426.8 499.0 L430.3 498.1 L354.3 380.2 L350.9 380.5Z" fill="url(#s0_81)"/>
<path d="M428.6 498.5 L432.0 497.7 L356.0 380.2 L352.6 380.4Z" fill="url(#s0_82)"/>
<path d="M430.3 498.1 L433.7 497.3 L357.6 380.2 L354.3 380.2Z" fill="url(#s0_83)"/>
<path d="M432.0 497.7 L435.3 497.0 L359.2 380.2 L356.0 380.2Z" fill="url(#s0_84)"/>
<path d="M433.7 497.3 L436.9 496.7 L360.8 380.2 L357.6 380.2Z" fill="url(#s0_85)"/>
<path d="M435.3 497.0 L438.5 496.5 L362.3 380.3 L359.2 380.2Z" fill="url(#s0_86)"/>
<path d="M436.9 496.7 L440.0 496.3 L363.8 380.4 L360.8 380.2Z" fill="url(#s0_87)"/>
<path d="M438.5 496.5 L441.5 496.2 L365.3 380.6 L362.3 380.3Z" fill="url(#s0_88)"/>
<path d="M440.0 496.3 L442.9 496.1 L366.8 380.8 L363.8 380.4Z" fill="url(#s0_89)"/>
<path d="M441.5 496.2 L444.4 496.0 L368.2 381.1 L365.3 380.6Z" fill="url(#s0_90)"/>
<path d="M442.9 496.1 L445.7 496.0 L369.5 381.4 L366.8 380.8Z" fill="url(#s0_91)"/>
<path d="M444.4 496.0 L447.0 496.0 L370.8 381.7 L368.2 381.1Z" fill="url(#s0_92)"/>
<path d="M445.7 496.0 L448.3 496.1 L372.1 382.1 L369.5 381.4Z" fill="url(#s0_93)"/>
<path d="M447.0 496.0 L449.5 496.2 L373.3 382.5 L370.8 381.7Z" fill="url(#s0_94)"/>
<path d="M448.3 496.1 L450.7 496.3 L374.5 382.9 L372.1 382.1Z" fill="url(#s0_95)"/>
<path d="M449.5 496.2 L451.8 496.5 L375.7 383.4 L373.3 382.5Z" fill="url(#s0_96)"/>
<path d="M450.7 496.3 L452.9 496.8 L376.8 383.9 L374.5 382.9Z" fill="url(#s0_97)"/>
<path d="M451.8 496.5 L453.9 497.0 L377.8 384.5 L375.7 383.4Z" fill="url(#s0_98)"/>
<path d="M452.9 496.8 L454.9 497.4 L378.8 385.1 L376.8 383.9Z" fill="url(#s0_99)"/>
<path d="M453.9 497.0 L455.8 497.7 L379.8 385.7 L377.8 384.5Z" fill="url(#s0_100)"/>
<path d="M454.9 497.4 L456.7 498.1 L380.7 386.4 L378.8 385.1Z" fill="url(#s0_101)"/>
<path d="M455.8 497.7 L457.5 498.6 L381.5 387.1 L379.8 385.7Z" fill="url(#s0_102)"/>
<path d="M456.7 498.1 L458.3 499.1 L382.4 387.8 L380.7 386.4Z" fill="url(#s0_103)"/>
<path d="M457.5 498.6 L459.0 499.6 L383.1 388.6 L381.5 387.1Z" fill="url(#s0_104)"/>
<path d="M458.3 499.1 L459.7 500.1 L383.8 389.4 L382.4 387.8Z" fill="url(#s0_105)"/>
<path d="M459.0 499.6 L460.3 500.7 L384.5 390.2 L383.1 388.6Z" fill="url(#s0_106)"/>
<path d="M459.7 500.1 L460.8 501.4 L385.1 391.1 L383.8 389.4Z" fill="url(#s0_107)"/>
<path d="M460.3 500.7 L461.3 502.1 L385.6 392.0 L384.5 390.2Z" fill="url(#s0_108)"/>
<path d="M460.8 501.4 L461.3 502.1 L385.6 392.0 L385.1 391.1Z" fill="url(#s0_109)"/>
</g>
<ellipse cx="391.6" cy="548.2" rx="83.6" ry="29.3" transform="rotate(146.5 391.6 548.2)" fill="#2b2b2b"/>
<clipPath id="k1"><path d="M451.4 371.3 L451.4 370.0 L451.5 368.7 L451.6 367.4 L451.8 366.0 L452.1 364.6 L452.5 363.1 L452.9 361.6 L453.4 360.1 L453.9 358.6 L454.5 357.1 L455.2 355.5 L455.9 354.0 L456.7 352.4 L457.6 350.8 L458.5 349.2 L459.5 347.6 L460.5 345.9 L461.6 344.3 L462.7 342.7 L463.9 341.0 L465.2 339.4 L466.5 337.8 L467.8 336.1 L469.2 334.5 L470.6 332.9 L472.1 331.3 L473.6 329.7 L475.1 328.2 L476.7 326.6 L478.4 325.1 L480.0 323.6 L481.7 322.1 L483.4 320.6 L485.2 319.2 L487.0 317.7 L488.8 316.4 L490.6 315.0 L492.4 313.7 L494.3 312.4 L496.1 311.1 L498.0 309.9 L499.9 308.8 L501.8 307.6 L503.7 306.5 L505.6 305.5 L507.5 304.5 L509.4 303.5 L511.3 302.6 L513.2 301.7 L515.1 300.9 L516.9 300.2 L518.8 299.4 L520.6 298.8 L522.5 298.2 L524.3 297.6 L526.0 297.1 L527.8 296.7 L529.5 296.3 L531.2 295.9 L532.9 295.6 L534.5 295.4 L536.1 295.3 L537.7 295.1 L539.2 295.1 L540.7 295.1 L542.2 295.1 L543.6 295.3 L544.9 295.4 L546.2 295.7 L547.5 295.9 L548.7 296.3 L549.8 296.7 L550.9 297.1 L552.0 297.6 L553.0 298.2 L553.9 298.8 L554.8 299.5 L555.6 300.2 L556.4 301.0 L641.6 396.0 L642.1 396.6 L642.6 397.3 L643.0 398.0 L643.3 398.8 L643.6 399.6 L643.8 400.5 L643.9 401.5 L644.0 402.4 L644.0 403.5 L643.9 404.5 L643.7 405.7 L643.5 406.8 L643.2 408.0 L642.8 409.3 L642.4 410.5 L641.9 411.9 L641.3 413.2 L640.6 414.6 L639.9 416.0 L639.1 417.5 L638.3 418.9 L637.4 420.4 L636.4 422.0 L635.4 423.5 L634.3 425.1 L633.1 426.7 L631.9 428.3 L630.7 429.9 L629.3 431.5 L628.0 433.2 L626.5 434.8 L625.1 436.5 L623.5 438.2 L622.0 439.8 L620.4 441.5 L618.7 443.2 L617.0 444.8 L615.3 446.5 L613.5 448.2 L611.7 449.8 L609.9 451.4 L608.0 453.1 L606.1 454.7 L604.2 456.3 L602.3 457.8 L600.3 459.4 L598.3 460.9 L596.3 462.4 L594.3 463.9 L592.3 465.3 L590.3 466.7 L588.2 468.1 L586.2 469.5 L584.2 470.8 L582.1 472.1 L580.1 473.3 L578.1 474.5 L576.1 475.7 L574.1 476.8 L572.1 477.9 L570.1 478.9 L568.2 479.9 L566.2 480.8 L564.3 481.7 L562.5 482.6 L560.6 483.3 L558.8 484.1 L557.0 484.8 L555.2 485.4 L553.5 486.0 L551.9 486.5 L550.2 486.9 L548.6 487.3 L547.1 487.7 L545.6 488.0 L544.1 488.2 L542.7 488.4 L541.4 488.5 L540.1 488.6 L538.9 488.6 L537.7 488.5 L536.5 488.4 L535.5 488.2 L534.5 488.0 L533.5 487.7 L532.7 487.4 L531.9 487.0 L531.1 486.5 L530.4 486.0 L529.8 485.4 L529.3 484.8 L454.1 381.1 L453.6 380.2 L453.0 379.3 L452.6 378.3 L452.2 377.2 L451.9 376.1 L451.7 375.0 L451.5 373.8 L451.4 372.6Z"/></clipPath>
<g clip-path="url(#k1)">
<linearGradient id="s1_1000" gradientUnits="userSpaceOnUse" x1="529.3" y1="484.8" x2="454.7" y2="382.0"><stop offset="0.00" stop-color="#2f3030"/><stop offset="0.17" stop-color="#2f3030"/><stop offset="0.33" stop-color="#2f3030"/><stop offset="0.50" stop-color="#2f3030"/><stop offset="0.67" stop-color="#2f3030"/><stop offset="0.83" stop-color="#2f3030"/><stop offset="1.00" stop-color="#2f3030"/></linearGradient>
<linearGradient id="s1_1001" gradientUnits="userSpaceOnUse" x1="642.1" y1="396.6" x2="557.1" y2="301.8"><stop offset="0.00" stop-color="#b2100e"/><stop offset="0.17" stop-color="#b2100e"/><stop offset="0.33" stop-color="#b2100e"/><stop offset="0.50" stop-color="#b2100e"/><stop offset="0.67" stop-color="#b2100e"/><stop offset="0.83" stop-color="#b2100e"/><stop offset="1.00" stop-color="#b2100e"/></linearGradient>
<linearGradient id="s1_0" gradientUnits="userSpaceOnUse" x1="529.1" y1="484.5" x2="454.5" y2="381.7"><stop offset="0.00" stop-color="#2f3030"/><stop offset="0.17" stop-color="#2f3030"/><stop offset="0.33" stop-color="#2f3030"/><stop offset="0.50" stop-color="#2f3030"/><stop offset="0.67" stop-color="#2f3030"/><stop offset="0.83" stop-color="#2f3030"/><stop offset="1.00" stop-color="#2f3030"/></linearGradient>
<linearGradient id="s1_1" gradientUnits="userSpaceOnUse" x1="528.7" y1="483.9" x2="454.0" y2="380.9"><stop offset="0.00" stop-color="#2f3030"/><stop offset="0.17" stop-color="#2f3030"/><stop offset="0.33" stop-color="#2f3030"/><stop offset="0.50" stop-color="#2f3030"/><stop offset="0.67" stop-color="#2f3030"/><stop offset="0.83" stop-color="#2f3030"/><stop offset="1.00" stop-color="#2f3030"/></linearGradient>
<linearGradient id="s1_2" gradientUnits="userSpaceOnUse" x1="528.4" y1="483.3" x2="453.5" y2="380.2"><stop offset="0.00" stop-color="#303131"/><stop offset="0.17" stop-color="#303131"/><stop offset="0.33" stop-color="#303131"/><stop offset="0.50" stop-color="#303131"/><stop offset="0.67" stop-color="#303131"/><stop offset="0.83" stop-color="#303131"/><stop offset="1.00" stop-color="#303131"/></linearGradient>
<linearGradient id="s1_3" gradientUnits="userSpaceOnUse" x1="528.1" y1="482.7" x2="453.1" y2="379.4"><stop offset="0.00" stop-color="#313232"/><stop offset="0.17" stop-color="#313232"/><stop offset="0.33" stop-color="#313232"/><stop offset="0.50" stop-color="#313232"/><stop offset="0.67" stop-color="#313232"/><stop offset="0.83" stop-color="#313232"/><stop offset="1.00" stop-color="#313232"/></linearGradient>
<linearGradient id="s1_4" gradientUnits="userSpaceOnUse" x1="527.9" y1="482.0" x2="452.7" y2="378.6"><stop offset="0.00" stop-color="#323333"/><stop offset="0.17" stop-color="#323333"/><stop offset="0.33" stop-color="#323333"/><stop offset="0.50" stop-color="#323333"/><stop offset="0.67" stop-color="#323333"/><stop offset="0.83" stop-color="#323333"/><stop offset="1.00" stop-color="#323333"/></linearGradient>
<linearGradient id="s1_5" gradientUnits="userSpaceOnUse" x1="527.7" y1="481.3" x2="452.4" y2="377.7"><stop offset="0.00" stop-color="#343535"/><stop offset="0.17" stop-color="#343535"/><stop offset="0.33" stop-color="#343535"/><stop offset="0.50" stop-color="#343535"/><stop offset="0.67" stop-color="#343535"/><stop offset="0.83" stop-color="#343535"/><stop offset="1.00" stop-color="#343535"/></linearGradient>
<linearGradient id="s1_6" gradientUnits="userSpaceOnUse" x1="527.6" y1="480.6" x2="452.1" y2="376.9"><stop offset="0.00" stop-color="#353737"/><stop offset="0.17" stop-color="#353737"/><stop offset="0.33" stop-color="#353737"/><stop offset="0.50" stop-color="#353737"/><stop offset="0.67" stop-color="#353737"/><stop offset="0.83" stop-color="#353737"/><stop offset="1.00" stop-color="#353737"/></linearGradient>
<linearGradient id="s1_7" gradientUnits="userSpaceOnUse" x1="527.5" y1="479.8" x2="451.9" y2="376.0"><stop offset="0.00" stop-color="#38393a"/><stop offset="0.17" stop-color="#38393a"/><stop offset="0.33" stop-color="#38393a"/><stop offset="0.50" stop-color="#38393a"/><stop offset="0.67" stop-color="#38393a"/><stop offset="0.83" stop-color="#38393a"/><stop offset="1.00" stop-color="#38393a"/></linearGradient>
<linearGradient id="s1_8" gradientUnits="userSpaceOnUse" x1="527.4" y1="479.0" x2="451.7" y2="375.0"><stop offset="0.00" stop-color="#3a3c3c"/><stop offset="0.17" stop-color="#3a3c3c"/><stop offset="0.33" stop-color="#3a3c3c"/><stop offset="0.50" stop-color="#3a3c3c"/><stop offset="0.67" stop-color="#3a3c3c"/><stop offset="0.83" stop-color="#3a3c3c"/><stop offset="1.00" stop-color="#3a3c3c"/></linearGradient>
<linearGradient id="s1_9" gradientUnits="userSpaceOnUse" x1="527.4" y1="478.2" x2="451.5" y2="374.1"><stop offset="0.00" stop-color="#3d3f3f"/><stop offset="0.17" stop-color="#3d3f3f"/><stop offset="0.33" stop-color="#3d3f3f"/><stop offset="0.50" stop-color="#3d3f3f"/><stop offset="0.67" stop-color="#3d3f3f"/><stop offset="0.83" stop-color="#3d3f3f"/><stop offset="1.00" stop-color="#3d3f3f"/></linearGradient>
<linearGradient id="s1_10" gradientUnits="userSpaceOnUse" x1="527.5" y1="477.3" x2="451.4" y2="373.1"><stop offset="0.00" stop-color="#404243"/><stop offset="0.17" stop-color="#404243"/><stop offset="0.33" stop-color="#404243"/><stop offset="0.50" stop-color="#404243"/><stop offset="0.67" stop-color="#404243"/><stop offset="0.83" stop-color="#404243"/><stop offset="1.00" stop-color="#404243"/></linearGradient>
<linearGradient id="s1_11" gradientUnits="userSpaceOnUse" x1="527.6" y1="476.4" x2="451.4" y2="372.1"><stop offset="0.00" stop-color="#434647"/><stop offset="0.17" stop-color="#434647"/><stop offset="0.33" stop-color="#434647"/><stop offset="0.50" stop-color="#434647"/><stop offset="0.67" stop-color="#434647"/><stop offset="0.83" stop-color="#434647"/><stop offset="1.00" stop-color="#434647"/></linearGradient>
<linearGradient id="s1_12" gradientUnits="userSpaceOnUse" x1="527.7" y1="475.5" x2="451.4" y2="371.0"><stop offset="0.00" stop-color="#474a4b"/><stop offset="0.17" stop-color="#474a4b"/><stop offset="0.33" stop-color="#474a4b"/><stop offset="0.50" stop-color="#474a4b"/><stop offset="0.67" stop-color="#474a4b"/><stop offset="0.83" stop-color="#474a4b"/><stop offset="1.00" stop-color="#474a4b"/></linearGradient>
<linearGradient id="s1_13" gradientUnits="userSpaceOnUse" x1="527.9" y1="474.5" x2="451.4" y2="370.0"><stop offset="0.00" stop-color="#420909"/><stop offset="0.17" stop-color="#440909"/><stop offset="0.33" stop-color="#460a09"/><stop offset="0.50" stop-color="#480a09"/><stop offset="0.67" stop-color="#4a0a09"/><stop offset="0.83" stop-color="#4c0a0a"/><stop offset="1.00" stop-color="#4d0a0a"/></linearGradient>
<linearGradient id="s1_14" gradientUnits="userSpaceOnUse" x1="528.2" y1="473.5" x2="451.5" y2="368.9"><stop offset="0.00" stop-color="#430909"/><stop offset="0.17" stop-color="#450909"/><stop offset="0.33" stop-color="#470a09"/><stop offset="0.50" stop-color="#490a09"/><stop offset="0.67" stop-color="#4b0a0a"/><stop offset="0.83" stop-color="#4c0a0a"/><stop offset="1.00" stop-color="#4e0b0a"/></linearGradient>
<linearGradient id="s1_15" gradientUnits="userSpaceOnUse" x1="528.5" y1="472.5" x2="451.6" y2="367.8"><stop offset="0.00" stop-color="#440909"/><stop offset="0.17" stop-color="#460909"/><stop offset="0.33" stop-color="#480a09"/><stop offset="0.50" stop-color="#4a0a09"/><stop offset="0.67" stop-color="#4c0a0a"/><stop offset="0.83" stop-color="#4d0a0a"/><stop offset="1.00" stop-color="#4f0b0a"/></linearGradient>
<linearGradient id="s1_16" gradientUnits="userSpaceOnUse" x1="528.8" y1="471.5" x2="451.7" y2="366.7"><stop offset="0.00" stop-color="#450909"/><stop offset="0.17" stop-color="#470a09"/><stop offset="0.33" stop-color="#490a09"/><stop offset="0.50" stop-color="#4b0a0a"/><stop offset="0.67" stop-color="#4d0a0a"/><stop offset="0.83" stop-color="#4e0b0a"/><stop offset="1.00" stop-color="#500b0a"/></linearGradient>
<linearGradient id="s1_17" gradientUnits="userSpaceOnUse" x1="529.2" y1="470.4" x2="451.9" y2="365.5"><stop offset="0.00" stop-color="#460a09"/><stop offset="0.17" stop-color="#480a09"/><stop offset="0.33" stop-color="#4a0a09"/><stop offset="0.50" stop-color="#4c0a0a"/><stop offset="0.67" stop-color="#4e0a0a"/><stop offset="0.83" stop-color="#500b0a"/><stop offset="1.00" stop-color="#510b0a"/></linearGradient>
<linearGradient id="s1_18" gradientUnits="userSpaceOnUse" x1="529.6" y1="469.4" x2="452.2" y2="364.4"><stop offset="0.00" stop-color="#470a09"/><stop offset="0.17" stop-color="#490a09"/><stop offset="0.33" stop-color="#4b0a0a"/><stop offset="0.50" stop-color="#4d0a0a"/><stop offset="0.67" stop-color="#4f0b0a"/><stop offset="0.83" stop-color="#510b0a"/><stop offset="1.00" stop-color="#530b0a"/></linearGradient>
<linearGradient id="s1_19" gradientUnits="userSpaceOnUse" x1="530.1" y1="468.2" x2="452.5" y2="363.2"><stop offset="0.00" stop-color="#480a09"/><stop offset="0.17" stop-color="#4a0a0a"/><stop offset="0.33" stop-color="#4c0a0a"/><stop offset="0.50" stop-color="#4e0b0a"/><stop offset="0.67" stop-color="#500b0a"/><stop offset="0.83" stop-color="#520b0a"/><stop offset="1.00" stop-color="#550b0a"/></linearGradient>
<linearGradient id="s1_20" gradientUnits="userSpaceOnUse" x1="530.6" y1="467.1" x2="452.8" y2="362.0"><stop offset="0.00" stop-color="#4a0a09"/><stop offset="0.17" stop-color="#4c0a0a"/><stop offset="0.33" stop-color="#4d0a0a"/><stop offset="0.50" stop-color="#4f0b0a"/><stop offset="0.67" stop-color="#510b0a"/><stop offset="0.83" stop-color="#540b0a"/><stop offset="1.00" stop-color="#570c0a"/></linearGradient>
<linearGradient id="s1_21" gradientUnits="userSpaceOnUse" x1="531.2" y1="466.0" x2="453.2" y2="360.8"><stop offset="0.00" stop-color="#4b0a0a"/><stop offset="0.17" stop-color="#4d0a0a"/><stop offset="0.33" stop-color="#4f0b0a"/><stop offset="0.50" stop-color="#510b0a"/><stop offset="0.67" stop-color="#530b0a"/><stop offset="0.83" stop-color="#560b0a"/><stop offset="1.00" stop-color="#5a0c0b"/></linearGradient>
<linearGradient id="s1_22" gradientUnits="userSpaceOnUse" x1="531.8" y1="464.8" x2="453.6" y2="359.5"><stop offset="0.00" stop-color="#4c0a0a"/><stop offset="0.17" stop-color="#4e0b0a"/><stop offset="0.33" stop-color="#500b0a"/><stop offset="0.50" stop-color="#520b0a"/><stop offset="0.67" stop-color="#550b0a"/><stop offset="0.83" stop-color="#590c0a"/><stop offset="1.00" stop-color="#5c0c0b"/></linearGradient>
<linearGradient id="s1_23" gradientUnits="userSpaceOnUse" x1="532.4" y1="463.6" x2="454.1" y2="358.3"><stop offset="0.00" stop-color="#4e0a0a"/><stop offset="0.17" stop-color="#500b0a"/><stop offset="0.33" stop-color="#510b0a"/><stop offset="0.50" stop-color="#550b0a"/><stop offset="0.67" stop-color="#580c0a"/><stop offset="0.83" stop-color="#5c0c0b"/><stop offset="1.00" stop-color="#5f0c0b"/></linearGradient>
<linearGradient id="s1_24" gradientUnits="userSpaceOnUse" x1="533.1" y1="462.4" x2="454.6" y2="357.0"><stop offset="0.00" stop-color="#4f0b0a"/><stop offset="0.17" stop-color="#510b0a"/><stop offset="0.33" stop-color="#540b0a"/><stop offset="0.50" stop-color="#570c0a"/><stop offset="0.67" stop-color="#5b0c0b"/><stop offset="0.83" stop-color="#5e0c0b"/><stop offset="1.00" stop-color="#620d0b"/></linearGradient>
<linearGradient id="s1_25" gradientUnits="userSpaceOnUse" x1="533.9" y1="461.2" x2="455.1" y2="355.8"><stop offset="0.00" stop-color="#510b0a"/><stop offset="0.17" stop-color="#530b0a"/><stop offset="0.33" stop-color="#570b0a"/><stop offset="0.50" stop-color="#5a0c0b"/><stop offset="0.67" stop-color="#5e0c0b"/><stop offset="0.83" stop-color="#610d0b"/><stop offset="1.00" stop-color="#650d0b"/></linearGradient>
<linearGradient id="s1_26" gradientUnits="userSpaceOnUse" x1="534.7" y1="459.9" x2="455.7" y2="354.5"><stop offset="0.00" stop-color="#520b0a"/><stop offset="0.17" stop-color="#560b0a"/><stop offset="0.33" stop-color="#590c0a"/><stop offset="0.50" stop-color="#5d0c0b"/><stop offset="0.67" stop-color="#600c0b"/><stop offset="0.83" stop-color="#640d0b"/><stop offset="1.00" stop-color="#670d0b"/></linearGradient>
<linearGradient id="s1_27" gradientUnits="userSpaceOnUse" x1="535.5" y1="458.7" x2="456.3" y2="353.2"><stop offset="0.00" stop-color="#550b0a"/><stop offset="0.17" stop-color="#590c0a"/><stop offset="0.33" stop-color="#5c0c0b"/><stop offset="0.50" stop-color="#600c0b"/><stop offset="0.67" stop-color="#630d0b"/><stop offset="0.83" stop-color="#670d0b"/><stop offset="1.00" stop-color="#6a0d0c"/></linearGradient>
<linearGradient id="s1_28" gradientUnits="userSpaceOnUse" x1="536.4" y1="457.4" x2="457.0" y2="351.9"><stop offset="0.00" stop-color="#590c0a"/><stop offset="0.17" stop-color="#5c0c0b"/><stop offset="0.33" stop-color="#600c0b"/><stop offset="0.50" stop-color="#630d0b"/><stop offset="0.67" stop-color="#670d0b"/><stop offset="0.83" stop-color="#6a0d0c"/><stop offset="1.00" stop-color="#6e0e0c"/></linearGradient>
<linearGradient id="s1_29" gradientUnits="userSpaceOnUse" x1="537.3" y1="456.1" x2="457.7" y2="350.6"><stop offset="0.00" stop-color="#5c0c0b"/><stop offset="0.17" stop-color="#5f0c0b"/><stop offset="0.33" stop-color="#630d0b"/><stop offset="0.50" stop-color="#660d0b"/><stop offset="0.67" stop-color="#6a0d0c"/><stop offset="0.83" stop-color="#6d0e0c"/><stop offset="1.00" stop-color="#710e0c"/></linearGradient>
<linearGradient id="s1_30" gradientUnits="userSpaceOnUse" x1="538.2" y1="454.8" x2="458.5" y2="349.2"><stop offset="0.00" stop-color="#5f0c0b"/><stop offset="0.17" stop-color="#620d0b"/><stop offset="0.33" stop-color="#660d0b"/><stop offset="0.50" stop-color="#690d0c"/><stop offset="0.67" stop-color="#6d0e0c"/><stop offset="0.83" stop-color="#700e0c"/><stop offset="1.00" stop-color="#740e0d"/></linearGradient>
<linearGradient id="s1_31" gradientUnits="userSpaceOnUse" x1="539.2" y1="453.5" x2="459.3" y2="347.9"><stop offset="0.00" stop-color="#620d0b"/><stop offset="0.17" stop-color="#660d0b"/><stop offset="0.33" stop-color="#690d0c"/><stop offset="0.50" stop-color="#6d0e0c"/><stop offset="0.67" stop-color="#700e0c"/><stop offset="0.83" stop-color="#740e0c"/><stop offset="1.00" stop-color="#780f0d"/></linearGradient>
<linearGradient id="s1_32" gradientUnits="userSpaceOnUse" x1="540.2" y1="452.2" x2="460.1" y2="346.6"><stop offset="0.00" stop-color="#660d0b"/><stop offset="0.17" stop-color="#690d0c"/><stop offset="0.33" stop-color="#6d0e0c"/><stop offset="0.50" stop-color="#700e0c"/><stop offset="0.67" stop-color="#740e0c"/><stop offset="0.83" stop-color="#780f0d"/><stop offset="1.00" stop-color="#7c0f0d"/></linearGradient>
<linearGradient id="s1_33" gradientUnits="userSpaceOnUse" x1="541.3" y1="450.8" x2="460.9" y2="345.3"><stop offset="0.00" stop-color="#690d0c"/><stop offset="0.17" stop-color="#6d0e0c"/><stop offset="0.33" stop-color="#700e0c"/><stop offset="0.50" stop-color="#740e0c"/><stop offset="0.67" stop-color="#780f0d"/><stop offset="0.83" stop-color="#7c0f0d"/><stop offset="1.00" stop-color="#800f0e"/></linearGradient>
<linearGradient id="s1_34" gradientUnits="userSpaceOnUse" x1="542.4" y1="449.5" x2="461.8" y2="343.9"><stop offset="0.00" stop-color="#6d0e0c"/><stop offset="0.17" stop-color="#700e0c"/><stop offset="0.33" stop-color="#740e0c"/><stop offset="0.50" stop-color="#780f0d"/><stop offset="0.67" stop-color="#7c0f0d"/><stop offset="0.83" stop-color="#800f0e"/><stop offset="1.00" stop-color="#84100e"/></linearGradient>
<linearGradient id="s1_35" gradientUnits="userSpaceOnUse" x1="543.5" y1="448.1" x2="462.8" y2="342.6"><stop offset="0.00" stop-color="#700e0c"/><stop offset="0.17" stop-color="#740e0c"/><stop offset="0.33" stop-color="#780f0d"/><stop offset="0.50" stop-color="#7c0f0d"/><stop offset="0.67" stop-color="#800f0e"/><stop offset="0.83" stop-color="#84100e"/><stop offset="1.00" stop-color="#88100f"/></linearGradient>
<linearGradient id="s1_36" gradientUnits="userSpaceOnUse" x1="544.7" y1="446.8" x2="463.8" y2="341.3"><stop offset="0.00" stop-color="#740e0d"/><stop offset="0.17" stop-color="#780f0d"/><stop offset="0.33" stop-color="#7c0f0d"/><stop offset="0.50" stop-color="#800f0e"/><stop offset="0.67" stop-color="#84100e"/><stop offset="0.83" stop-color="#88100f"/><stop offset="1.00" stop-color="#8c100f"/></linearGradient>
<linearGradient id="s1_37" gradientUnits="userSpaceOnUse" x1="545.9" y1="445.4" x2="464.8" y2="339.9"><stop offset="0.00" stop-color="#790f0d"/><stop offset="0.17" stop-color="#7d0f0d"/><stop offset="0.33" stop-color="#810f0e"/><stop offset="0.50" stop-color="#85100e"/><stop offset="0.67" stop-color="#88100f"/><stop offset="0.83" stop-color="#8c110f"/><stop offset="1.00" stop-color="#901110"/></linearGradient>
<linearGradient id="s1_38" gradientUnits="userSpaceOnUse" x1="547.1" y1="444.1" x2="465.8" y2="338.6"><stop offset="0.00" stop-color="#7d0f0e"/><stop offset="0.17" stop-color="#810f0e"/><stop offset="0.33" stop-color="#85100e"/><stop offset="0.50" stop-color="#89100f"/><stop offset="0.67" stop-color="#8d110f"/><stop offset="0.83" stop-color="#911110"/><stop offset="1.00" stop-color="#941110"/></linearGradient>
<linearGradient id="s1_39" gradientUnits="userSpaceOnUse" x1="548.3" y1="442.7" x2="466.9" y2="337.3"><stop offset="0.00" stop-color="#81100e"/><stop offset="0.17" stop-color="#85100e"/><stop offset="0.33" stop-color="#89100f"/><stop offset="0.50" stop-color="#8d110f"/><stop offset="0.67" stop-color="#911110"/><stop offset="0.83" stop-color="#951110"/><stop offset="1.00" stop-color="#981210"/></linearGradient>
<linearGradient id="s1_40" gradientUnits="userSpaceOnUse" x1="549.6" y1="441.3" x2="468.0" y2="335.9"><stop offset="0.00" stop-color="#86100f"/><stop offset="0.17" stop-color="#8a100f"/><stop offset="0.33" stop-color="#8e110f"/><stop offset="0.50" stop-color="#921110"/><stop offset="0.67" stop-color="#951110"/><stop offset="0.83" stop-color="#991210"/><stop offset="1.00" stop-color="#9c1210"/></linearGradient>
<linearGradient id="s1_41" gradientUnits="userSpaceOnUse" x1="551.0" y1="440.0" x2="469.1" y2="334.6"><stop offset="0.00" stop-color="#8a100f"/><stop offset="0.17" stop-color="#8e1110"/><stop offset="0.33" stop-color="#921110"/><stop offset="0.50" stop-color="#961110"/><stop offset="0.67" stop-color="#991210"/><stop offset="0.83" stop-color="#9d1210"/><stop offset="1.00" stop-color="#a01210"/></linearGradient>
<linearGradient id="s1_42" gradientUnits="userSpaceOnUse" x1="552.3" y1="438.6" x2="470.3" y2="333.3"><stop offset="0.00" stop-color="#8f1110"/><stop offset="0.17" stop-color="#931110"/><stop offset="0.33" stop-color="#961110"/><stop offset="0.50" stop-color="#9a1210"/><stop offset="0.67" stop-color="#9d1210"/><stop offset="0.83" stop-color="#a11210"/><stop offset="1.00" stop-color="#a41310"/></linearGradient>
<linearGradient id="s1_43" gradientUnits="userSpaceOnUse" x1="553.7" y1="437.2" x2="471.5" y2="332.0"><stop offset="0.00" stop-color="#931110"/><stop offset="0.17" stop-color="#971110"/><stop offset="0.33" stop-color="#9a1210"/><stop offset="0.50" stop-color="#9e1210"/><stop offset="0.67" stop-color="#a11310"/><stop offset="0.83" stop-color="#a51310"/><stop offset="1.00" stop-color="#a81310"/></linearGradient>
<linearGradient id="s1_44" gradientUnits="userSpaceOnUse" x1="555.1" y1="435.9" x2="472.7" y2="330.7"><stop offset="0.00" stop-color="#971210"/><stop offset="0.17" stop-color="#9b1210"/><stop offset="0.33" stop-color="#9e1210"/><stop offset="0.50" stop-color="#a21310"/><stop offset="0.67" stop-color="#a51310"/><stop offset="0.83" stop-color="#a91310"/><stop offset="1.00" stop-color="#ac1410"/></linearGradient>
<linearGradient id="s1_45" gradientUnits="userSpaceOnUse" x1="556.5" y1="434.5" x2="473.9" y2="329.4"><stop offset="0.00" stop-color="#9b1210"/><stop offset="0.17" stop-color="#9f1210"/><stop offset="0.33" stop-color="#a21310"/><stop offset="0.50" stop-color="#a61310"/><stop offset="0.67" stop-color="#a91310"/><stop offset="0.83" stop-color="#ad1410"/><stop offset="1.00" stop-color="#b01410"/></linearGradient>
<linearGradient id="s1_46" gradientUnits="userSpaceOnUse" x1="558.0" y1="433.2" x2="475.2" y2="328.1"><stop offset="0.00" stop-color="#9f1210"/><stop offset="0.17" stop-color="#a31310"/><stop offset="0.33" stop-color="#a61310"/><stop offset="0.50" stop-color="#aa1310"/><stop offset="0.67" stop-color="#ad1410"/><stop offset="0.83" stop-color="#b11410"/><stop offset="1.00" stop-color="#b41410"/></linearGradient>
<linearGradient id="s1_47" gradientUnits="userSpaceOnUse" x1="559.4" y1="431.8" x2="476.5" y2="326.8"><stop offset="0.00" stop-color="#a41310"/><stop offset="0.17" stop-color="#a71310"/><stop offset="0.33" stop-color="#ab1310"/><stop offset="0.50" stop-color="#ae1410"/><stop offset="0.67" stop-color="#b21410"/><stop offset="0.83" stop-color="#b51410"/><stop offset="1.00" stop-color="#b81411"/></linearGradient>
<linearGradient id="s1_48" gradientUnits="userSpaceOnUse" x1="560.9" y1="430.5" x2="477.8" y2="325.6"><stop offset="0.00" stop-color="#a81310"/><stop offset="0.17" stop-color="#ab1410"/><stop offset="0.33" stop-color="#af1410"/><stop offset="0.50" stop-color="#b21410"/><stop offset="0.67" stop-color="#b51410"/><stop offset="0.83" stop-color="#b91411"/><stop offset="1.00" stop-color="#bc1411"/></linearGradient>
<linearGradient id="s1_49" gradientUnits="userSpaceOnUse" x1="562.5" y1="429.1" x2="479.2" y2="324.3"><stop offset="0.00" stop-color="#ac1410"/><stop offset="0.17" stop-color="#b01410"/><stop offset="0.33" stop-color="#b31410"/><stop offset="0.50" stop-color="#b61410"/><stop offset="0.67" stop-color="#b91411"/><stop offset="0.83" stop-color="#bd1411"/><stop offset="1.00" stop-color="#c01511"/></linearGradient>
<linearGradient id="s1_50" gradientUnits="userSpaceOnUse" x1="564.0" y1="427.8" x2="480.6" y2="323.1"><stop offset="0.00" stop-color="#b01410"/><stop offset="0.17" stop-color="#b41410"/><stop offset="0.33" stop-color="#b71410"/><stop offset="0.50" stop-color="#ba1411"/><stop offset="0.67" stop-color="#bd1411"/><stop offset="0.83" stop-color="#c11511"/><stop offset="1.00" stop-color="#c41511"/></linearGradient>
<linearGradient id="s1_51" gradientUnits="userSpaceOnUse" x1="565.6" y1="426.5" x2="481.9" y2="321.9"><stop offset="0.00" stop-color="#b41410"/><stop offset="0.17" stop-color="#b71411"/><stop offset="0.33" stop-color="#bb1411"/><stop offset="0.50" stop-color="#be1511"/><stop offset="0.67" stop-color="#c11511"/><stop offset="0.83" stop-color="#c51511"/><stop offset="1.00" stop-color="#c81512"/></linearGradient>
<linearGradient id="s1_52" gradientUnits="userSpaceOnUse" x1="567.1" y1="425.2" x2="483.4" y2="320.7"><stop offset="0.00" stop-color="#b81411"/><stop offset="0.17" stop-color="#bb1411"/><stop offset="0.33" stop-color="#bf1511"/><stop offset="0.50" stop-color="#c21511"/><stop offset="0.67" stop-color="#c51512"/><stop offset="0.83" stop-color="#c91512"/><stop offset="1.00" stop-color="#cc1512"/></linearGradient>
<linearGradient id="s1_53" gradientUnits="userSpaceOnUse" x1="568.7" y1="423.9" x2="484.8" y2="319.5"><stop offset="0.00" stop-color="#bc1411"/><stop offset="0.17" stop-color="#bf1511"/><stop offset="0.33" stop-color="#c31511"/><stop offset="0.50" stop-color="#c61512"/><stop offset="0.67" stop-color="#c91512"/><stop offset="0.83" stop-color="#cd1512"/><stop offset="1.00" stop-color="#d11512"/></linearGradient>
<linearGradient id="s1_54" gradientUnits="userSpaceOnUse" x1="570.3" y1="422.7" x2="486.2" y2="318.3"><stop offset="0.00" stop-color="#c01511"/><stop offset="0.17" stop-color="#c31511"/><stop offset="0.33" stop-color="#c71512"/><stop offset="0.50" stop-color="#ca1512"/><stop offset="0.67" stop-color="#ce1512"/><stop offset="0.83" stop-color="#d21512"/><stop offset="1.00" stop-color="#d61512"/></linearGradient>
<linearGradient id="s1_55" gradientUnits="userSpaceOnUse" x1="571.9" y1="421.4" x2="487.7" y2="317.2"><stop offset="0.00" stop-color="#c41511"/><stop offset="0.17" stop-color="#c71512"/><stop offset="0.33" stop-color="#cb1512"/><stop offset="0.50" stop-color="#ce1512"/><stop offset="0.67" stop-color="#d31512"/><stop offset="0.83" stop-color="#d71512"/><stop offset="1.00" stop-color="#db1612"/></linearGradient>
<linearGradient id="s1_56" gradientUnits="userSpaceOnUse" x1="573.5" y1="420.2" x2="489.2" y2="316.0"><stop offset="0.00" stop-color="#c81512"/><stop offset="0.17" stop-color="#cb1512"/><stop offset="0.33" stop-color="#cf1512"/><stop offset="0.50" stop-color="#d31512"/><stop offset="0.67" stop-color="#d81512"/><stop offset="0.83" stop-color="#dc1612"/><stop offset="1.00" stop-color="#e01612"/></linearGradient>
<linearGradient id="s1_57" gradientUnits="userSpaceOnUse" x1="575.2" y1="418.9" x2="490.7" y2="314.9"><stop offset="0.00" stop-color="#cc1512"/><stop offset="0.17" stop-color="#d01512"/><stop offset="0.33" stop-color="#d41512"/><stop offset="0.50" stop-color="#d81512"/><stop offset="0.67" stop-color="#dd1612"/><stop offset="0.83" stop-color="#e11612"/><stop offset="1.00" stop-color="#e51612"/></linearGradient>
<linearGradient id="s1_58" gradientUnits="userSpaceOnUse" x1="576.8" y1="417.7" x2="492.2" y2="313.9"><stop offset="0.00" stop-color="#d11512"/><stop offset="0.17" stop-color="#d51512"/><stop offset="0.33" stop-color="#d91512"/><stop offset="0.50" stop-color="#dd1612"/><stop offset="0.67" stop-color="#e21612"/><stop offset="0.83" stop-color="#e61612"/><stop offset="1.00" stop-color="#ea1612"/></linearGradient>
<linearGradient id="s1_59" gradientUnits="userSpaceOnUse" x1="578.5" y1="416.5" x2="493.7" y2="312.8"><stop offset="0.00" stop-color="#d61512"/><stop offset="0.17" stop-color="#da1612"/><stop offset="0.33" stop-color="#de1612"/><stop offset="0.50" stop-color="#e21612"/><stop offset="0.67" stop-color="#e71612"/><stop offset="0.83" stop-color="#ea1612"/><stop offset="1.00" stop-color="#ee1613"/></linearGradient>
<linearGradient id="s1_60" gradientUnits="userSpaceOnUse" x1="580.1" y1="415.4" x2="495.2" y2="311.8"><stop offset="0.00" stop-color="#db1612"/><stop offset="0.17" stop-color="#df1612"/><stop offset="0.33" stop-color="#e31612"/><stop offset="0.50" stop-color="#e71612"/><stop offset="0.67" stop-color="#eb1612"/><stop offset="0.83" stop-color="#ef1613"/><stop offset="1.00" stop-color="#f31613"/></linearGradient>
<linearGradient id="s1_61" gradientUnits="userSpaceOnUse" x1="581.8" y1="414.2" x2="496.7" y2="310.8"><stop offset="0.00" stop-color="#e01612"/><stop offset="0.17" stop-color="#e41612"/><stop offset="0.33" stop-color="#e81612"/><stop offset="0.50" stop-color="#ec1612"/><stop offset="0.67" stop-color="#f01613"/><stop offset="0.83" stop-color="#f41713"/><stop offset="1.00" stop-color="#f81713"/></linearGradient>
<linearGradient id="s1_62" gradientUnits="userSpaceOnUse" x1="583.4" y1="413.1" x2="498.3" y2="309.8"><stop offset="0.00" stop-color="#e51612"/><stop offset="0.17" stop-color="#e91612"/><stop offset="0.33" stop-color="#ed1612"/><stop offset="0.50" stop-color="#f11613"/><stop offset="0.67" stop-color="#f41713"/><stop offset="0.83" stop-color="#f81713"/><stop offset="1.00" stop-color="#fc1714"/></linearGradient>
<linearGradient id="s1_63" gradientUnits="userSpaceOnUse" x1="585.1" y1="412.0" x2="499.8" y2="308.8"><stop offset="0.00" stop-color="#ea1612"/><stop offset="0.17" stop-color="#ee1612"/><stop offset="0.33" stop-color="#f11613"/><stop offset="0.50" stop-color="#f51713"/><stop offset="0.67" stop-color="#f91713"/><stop offset="0.83" stop-color="#fd1714"/><stop offset="1.00" stop-color="#ff1714"/></linearGradient>
<linearGradient id="s1_64" gradientUnits="userSpaceOnUse" x1="586.8" y1="410.9" x2="501.4" y2="307.9"><stop offset="0.00" stop-color="#ee1613"/><stop offset="0.17" stop-color="#f21613"/><stop offset="0.33" stop-color="#f61713"/><stop offset="0.50" stop-color="#fa1714"/><stop offset="0.67" stop-color="#fe1714"/><stop offset="0.83" stop-color="#ff1714"/><stop offset="1.00" stop-color="#ff1714"/></linearGradient>
<linearGradient id="s1_65" gradientUnits="userSpaceOnUse" x1="588.4" y1="409.8" x2="502.9" y2="307.0"><stop offset="0.00" stop-color="#f31613"/><stop offset="0.17" stop-color="#f71713"/><stop offset="0.33" stop-color="#fa1714"/><stop offset="0.50" stop-color="#fe1714"/><stop offset="0.67" stop-color="#ff1714"/><stop offset="0.83" stop-color="#ff1714"/><stop offset="1.00" stop-color="#ff1714"/></linearGradient>
<linearGradient id="s1_66" gradientUnits="userSpaceOnUse" x1="590.1" y1="408.8" x2="504.5" y2="306.1"><stop offset="0.00" stop-color="#f71713"/><stop offset="0.17" stop-color="#fb1714"/><stop offset="0.33" stop-color="#ff1714"/><stop offset="0.50" stop-color="#ff1714"/><stop offset="0.67" stop-color="#ff1714"/><stop offset="0.83" stop-color="#ff1714"/><stop offset="1.00" stop-color="#ff1714"/></linearGradient>
<linearGradient id="s1_67" gradientUnits="userSpaceOnUse" x1="591.7" y1="407.8" x2="506.0" y2="305.2"><stop offset="0.00" stop-color="#fc1714"/><stop offset="0.17" stop-color="#ff1714"/><stop offset="0.33" stop-color="#ff1714"/><stop offset="0.50" stop-color="#ff1714"/><stop offset="0.67" stop-color="#ff1714"/><stop offset="0.83" stop-color="#ff1714"/><stop offset="1.00" stop-color="#ff1714"/></linearGradient>
<linearGradient id="s1_68" gradientUnits="userSpaceOnUse" x1="593.4" y1="406.8" x2="507.6" y2="304.4"><stop offset="0.00" stop-color="#ff1714"/><stop offset="0.17" stop-color="#ff1714"/><stop offset="0.33" stop-color="#ff1714"/><stop offset="0.50" stop-color="#ff1714"/><stop offset="0.67" stop-color="#ff1714"/><stop offset="0.83" stop-color="#ff1714"/><stop offset="1.00" stop-color="#ff1714"/></linearGradient>
<linearGradient id="s1_69" gradientUnits="userSpaceOnUse" x1="595.0" y1="405.9" x2="509.1" y2="303.6"><stop offset="0.00" stop-color="#ff1714"/><stop offset="0.17" stop-color="#ff1714"/><stop offset="0.33" stop-color="#ff1714"/><stop offset="0.50" stop-color="#ff1714"/><stop offset="0.67" stop-color="#ff1714"/><stop offset="0.83" stop-color="#ff1714"/><stop offset="1.00" stop-color="#ff1714"/></linearGradient>
<linearGradient id="s1_70" gradientUnits="userSpaceOnUse" x1="596.7" y1="404.9" x2="510.7" y2="302.9"><stop offset="0.00" stop-color="#ff1714"/><stop offset="0.17" stop-color="#ff1714"/><stop offset="0.33" stop-color="#ff1714"/><stop offset="0.50" stop-color="#ff1714"/><stop offset="0.67" stop-color="#ff1714"/><stop offset="0.83" stop-color="#ff1714"/><stop offset="1.00" stop-color="#ff1714"/></linearGradient>
<linearGradient id="s1_71" gradientUnits="userSpaceOnUse" x1="598.3" y1="404.0" x2="512.2" y2="302.2"><stop offset="0.00" stop-color="#ff1714"/><stop offset="0.17" stop-color="#ff1714"/><stop offset="0.33" stop-color="#ff1714"/><stop offset="0.50" stop-color="#ff1714"/><stop offset="0.67" stop-color="#ff1714"/><stop offset="0.83" stop-color="#ff1714"/><stop offset="1.00" stop-color="#ff1714"/></linearGradient>
<linearGradient id="s1_72" gradientUnits="userSpaceOnUse" x1="599.9" y1="403.2" x2="513.8" y2="301.5"><stop offset="0.00" stop-color="#ff1714"/><stop offset="0.17" stop-color="#ff1714"/><stop offset="0.33" stop-color="#ff1714"/><stop offset="0.50" stop-color="#ff1714"/><stop offset="0.67" stop-color="#ff1714"/><stop offset="0.83" stop-color="#ff1714"/><stop offset="1.00" stop-color="#ff1714"/></linearGradient>
<linearGradient id="s1_73" gradientUnits="userSpaceOnUse" x1="601.5" y1="402.3" x2="515.3" y2="300.8"><stop offset="0.00" stop-color="#ff1714"/><stop offset="0.17" stop-color="#ff1714"/><stop offset="0.33" stop-color="#ff1714"/><stop offset="0.50" stop-color="#ff1714"/><stop offset="0.67" stop-color="#ff1714"/><stop offset="0.83" stop-color="#ff1714"/><stop offset="1.00" stop-color="#ff1714"/></linearGradient>
<linearGradient id="s1_74" gradientUnits="userSpaceOnUse" x1="603.1" y1="401.5" x2="516.9" y2="300.2"><stop offset="0.00" stop-color="#ff1714"/><stop offset="0.17" stop-color="#ff1714"/><stop offset="0.33" stop-color="#ff1714"/><stop offset="0.50" stop-color="#ff1714"/><stop offset="0.67" stop-color="#ff1714"/><stop offset="0.83" stop-color="#ff1714"/><stop offset="1.00" stop-color="#ff1714"/></linearGradient>
<linearGradient id="s1_75" gradientUnits="userSpaceOnUse" x1="604.7" y1="400.8" x2="518.4" y2="299.6"><stop offset="0.00" stop-color="#ff1714"/><stop offset="0.17" stop-color="#ff1714"/><stop offset="0.33" stop-color="#ff1714"/><stop offset="0.50" stop-color="#ff1714"/><stop offset="0.67" stop-color="#ff1714"/><stop offset="0.83" stop-color="#ff1714"/><stop offset="1.00" stop-color="#ff1714"/></linearGradient>
<linearGradient id="s1_76" gradientUnits="userSpaceOnUse" x1="606.3" y1="400.0" x2="519.9" y2="299.0"><stop offset="0.00" stop-color="#ff1714"/><stop offset="0.17" stop-color="#ff1714"/><stop offset="0.33" stop-color="#ff1714"/><stop offset="0.50" stop-color="#ff1714"/><stop offset="0.67" stop-color="#ff1714"/><stop offset="0.83" stop-color="#ff1714"/><stop offset="1.00" stop-color="#ff1714"/></linearGradient>
<linearGradient id="s1_77" gradientUnits="userSpaceOnUse" x1="607.8" y1="399.3" x2="521.4" y2="298.5"><stop offset="0.00" stop-color="#ff1714"/><stop offset="0.17" stop-color="#ff1714"/><stop offset="0.33" stop-color="#ff1714"/><stop offset="0.50" stop-color="#ff1714"/><stop offset="0.67" stop-color="#ff1714"/><stop offset="0.83" stop-color="#ff1714"/><stop offset="1.00" stop-color="#ff1714"/></linearGradient>
<linearGradient id="s1_78" gradientUnits="userSpaceOnUse" x1="609.4" y1="398.7" x2="522.9" y2="298.0"><stop offset="0.00" stop-color="#ff1714"/><stop offset="0.17" stop-color="#ff1714"/><stop offset="0.33" stop-color="#ff1714"/><stop offset="0.50" stop-color="#ff1714"/><stop offset="0.67" stop-color="#ff1714"/><stop offset="0.83" stop-color="#ff1714"/><stop offset="1.00" stop-color="#ff1714"/></linearGradient>
<linearGradient id="s1_79" gradientUnits="userSpaceOnUse" x1="610.9" y1="398.0" x2="524.3" y2="297.6"><stop offset="0.00" stop-color="#ff1714"/><stop offset="0.17" stop-color="#ff1714"/><stop offset="0.33" stop-color="#ff1714"/><stop offset="0.50" stop-color="#ff1714"/><stop offset="0.67" stop-color="#ff1714"/><stop offset="0.83" stop-color="#ff1714"/><stop offset="1.00" stop-color="#ff1714"/></linearGradient>
<linearGradient id="s1_80" gradientUnits="userSpaceOnUse" x1="612.4" y1="397.4" x2="525.8" y2="297.2"><stop offset="0.00" stop-color="#ff1714"/><stop offset="0.17" stop-color="#ff1714"/><stop offset="0.33" stop-color="#ff1714"/><stop offset="0.50" stop-color="#ff1714"/><stop offset="0.67" stop-color="#ff1714"/><stop offset="0.83" stop-color="#ff1714"/><stop offset="1.00" stop-color="#ff1714"/></linearGradient>
<linearGradient id="s1_81" gradientUnits="userSpaceOnUse" x1="613.8" y1="396.9" x2="527.2" y2="296.8"><stop offset="0.00" stop-color="#ff1714"/><stop offset="0.17" stop-color="#ff1714"/><stop offset="0.33" stop-color="#ff1714"/><stop offset="0.50" stop-color="#ff1714"/><stop offset="0.67" stop-color="#ff1714"/><stop offset="0.83" stop-color="#ff1714"/><stop offset="1.00" stop-color="#ff1714"/></linearGradient>
<linearGradient id="s1_82" gradientUnits="userSpaceOnUse" x1="615.3" y1="396.3" x2="528.7" y2="296.5"><stop offset="0.00" stop-color="#ff1714"/><stop offset="0.17" stop-color="#ff1714"/><stop offset="0.33" stop-color="#ff1714"/><stop offset="0.50" stop-color="#ff1714"/><stop offset="0.67" stop-color="#ff1714"/><stop offset="0.83" stop-color="#ff1714"/><stop offset="1.00" stop-color="#ff1714"/></linearGradient>
<linearGradient id="s1_83" gradientUnits="userSpaceOnUse" x1="616.7" y1="395.8" x2="530.1" y2="296.2"><stop offset="0.00" stop-color="#ff1714"/><stop offset="0.17" stop-color="#ff1714"/><stop offset="0.33" stop-color="#ff1714"/><stop offset="0.50" stop-color="#ff1714"/><stop offset="0.67" stop-color="#ff1714"/><stop offset="0.83" stop-color="#ff1714"/><stop offset="1.00" stop-color="#ff1714"/></linearGradient>
<linearGradient id="s1_84" gradientUnits="userSpaceOnUse" x1="618.1" y1="395.4" x2="531.5" y2="295.9"><stop offset="0.00" stop-color="#ff1714"/><stop offset="0.17" stop-color="#ff1714"/><stop offset="0.33" stop-color="#ff1714"/><stop offset="0.50" stop-color="#ff1714"/><stop offset="0.67" stop-color="#ff1714"/><stop offset="0.83" stop-color="#ff1714"/><stop offset="1.00" stop-color="#ff1714"/></linearGradient>
<linearGradient id="s1_85" gradientUnits="userSpaceOnUse" x1="619.5" y1="394.9" x2="532.8" y2="295.7"><stop offset="0.00" stop-color="#ff1714"/><stop offset="0.17" stop-color="#ff1714"/><stop offset="0.33" stop-color="#ff1714"/><stop offset="0.50" stop-color="#ff1714"/><stop offset="0.67" stop-color="#ff1714"/><stop offset="0.83" stop-color="#ff1714"/><stop offset="1.00" stop-color="#ff1714"/></linearGradient>
<linearGradient id="s1_86" gradientUnits="userSpaceOnUse" x1="620.8" y1="394.6" x2="534.2" y2="295.5"><stop offset="0.00" stop-color="#ff1714"/><stop offset="0.17" stop-color="#ff1714"/><stop offset="0.33" stop-color="#ff1714"/><stop offset="0.50" stop-color="#ff1714"/><stop offset="0.67" stop-color="#ff1714"/><stop offset="0.83" stop-color="#ff1714"/><stop offset="1.00" stop-color="#ff1714"/></linearGradient>
<linearGradient id="s1_87" gradientUnits="userSpaceOnUse" x1="622.1" y1="394.2" x2="535.5" y2="295.3"><stop offset="0.00" stop-color="#ff1714"/><stop offset="0.17" stop-color="#ff1714"/><stop offset="0.33" stop-color="#ff1714"/><stop offset="0.50" stop-color="#ff1714"/><stop offset="0.67" stop-color="#ff1714"/><stop offset="0.83" stop-color="#ff1714"/><stop offset="1.00" stop-color="#ff1714"/></linearGradient>
<linearGradient id="s1_88" gradientUnits="userSpaceOnUse" x1="623.4" y1="393.9" x2="536.8" y2="295.2"><stop offset="0.00" stop-color="#ff1714"/><stop offset="0.17" stop-color="#ff1714"/><stop offset="0.33" stop-color="#ff1714"/><stop offset="0.50" stop-color="#ff1714"/><stop offset="0.67" stop-color="#ff1714"/><stop offset="0.83" stop-color="#ff1714"/><stop offset="1.00" stop-color="#ff1714"/></linearGradient>
<linearGradient id="s1_89" gradientUnits="userSpaceOnUse" x1="624.7" y1="393.6" x2="538.1" y2="295.1"><stop offset="0.00" stop-color="#ff1714"/><stop offset="0.17" stop-color="#ff1714"/><stop offset="0.33" stop-color="#ff1714"/><stop offset="0.50" stop-color="#ff1714"/><stop offset="0.67" stop-color="#ff1714"/><stop offset="0.83" stop-color="#ff1714"/><stop offset="1.00" stop-color="#ff1714"/></linearGradient>
<linearGradient id="s1_90" gradientUnits="userSpaceOnUse" x1="625.9" y1="393.4" x2="539.3" y2="295.1"><stop offset="0.00" stop-color="#fb1714"/><stop offset="0.17" stop-color="#fb1714"/><stop offset="0.33" stop-color="#fb1714"/><stop offset="0.50" stop-color="#fb1714"/><stop offset="0.67" stop-color="#fb1714"/><stop offset="0.83" stop-color="#fb1714"/><stop offset="1.00" stop-color="#fb1714"/></linearGradient>
<linearGradient id="s1_91" gradientUnits="userSpaceOnUse" x1="627.1" y1="393.2" x2="540.5" y2="295.1"><stop offset="0.00" stop-color="#f41613"/><stop offset="0.17" stop-color="#f41613"/><stop offset="0.33" stop-color="#f41613"/><stop offset="0.50" stop-color="#f41613"/><stop offset="0.67" stop-color="#f41613"/><stop offset="0.83" stop-color="#f41613"/><stop offset="1.00" stop-color="#f41613"/></linearGradient>
<linearGradient id="s1_92" gradientUnits="userSpaceOnUse" x1="628.2" y1="393.1" x2="541.7" y2="295.1"><stop offset="0.00" stop-color="#ed1513"/><stop offset="0.17" stop-color="#ed1513"/><stop offset="0.33" stop-color="#ed1513"/><stop offset="0.50" stop-color="#ed1513"/><stop offset="0.67" stop-color="#ed1513"/><stop offset="0.83" stop-color="#ed1513"/><stop offset="1.00" stop-color="#ed1513"/></linearGradient>
<linearGradient id="s1_93" gradientUnits="userSpaceOnUse" x1="629.3" y1="392.9" x2="542.9" y2="295.2"><stop offset="0.00" stop-color="#e71512"/><stop offset="0.17" stop-color="#e71512"/><stop offset="0.33" stop-color="#e71512"/><stop offset="0.50" stop-color="#e71512"/><stop offset="0.67" stop-color="#e71512"/><stop offset="0.83" stop-color="#e71512"/><stop offset="1.00" stop-color="#e71512"/></linearGradient>
<linearGradient id="s1_94" gradientUnits="userSpaceOnUse" x1="630.4" y1="392.9" x2="544.0" y2="295.3"><stop offset="0.00" stop-color="#e11412"/><stop offset="0.17" stop-color="#e11412"/><stop offset="0.33" stop-color="#e11412"/><stop offset="0.50" stop-color="#e11412"/><stop offset="0.67" stop-color="#e11412"/><stop offset="0.83" stop-color="#e11412"/><stop offset="1.00" stop-color="#e11412"/></linearGradient>
<linearGradient id="s1_95" gradientUnits="userSpaceOnUse" x1="631.5" y1="392.8" x2="545.1" y2="295.5"><stop offset="0.00" stop-color="#db1411"/><stop offset="0.17" stop-color="#db1411"/><stop offset="0.33" stop-color="#db1411"/><stop offset="0.50" stop-color="#db1411"/><stop offset="0.67" stop-color="#db1411"/><stop offset="0.83" stop-color="#db1411"/><stop offset="1.00" stop-color="#db1411"/></linearGradient>
<linearGradient id="s1_96" gradientUnits="userSpaceOnUse" x1="632.5" y1="392.8" x2="546.2" y2="295.7"><stop offset="0.00" stop-color="#d61311"/><stop offset="0.17" stop-color="#d61311"/><stop offset="0.33" stop-color="#d61311"/><stop offset="0.50" stop-color="#d61311"/><stop offset="0.67" stop-color="#d61311"/><stop offset="0.83" stop-color="#d61311"/><stop offset="1.00" stop-color="#d61311"/></linearGradient>
<linearGradient id="s1_97" gradientUnits="userSpaceOnUse" x1="633.5" y1="392.9" x2="547.2" y2="295.9"><stop offset="0.00" stop-color="#d11310"/><stop offset="0.17" stop-color="#d11310"/><stop offset="0.33" stop-color="#d11310"/><stop offset="0.50" stop-color="#d11310"/><stop offset="0.67" stop-color="#d11310"/><stop offset="0.83" stop-color="#d11310"/><stop offset="1.00" stop-color="#d11310"/></linearGradient>
<linearGradient id="s1_98" gradientUnits="userSpaceOnUse" x1="634.4" y1="393.0" x2="548.2" y2="296.1"><stop offset="0.00" stop-color="#cc1210"/><stop offset="0.17" stop-color="#cc1210"/><stop offset="0.33" stop-color="#cc1210"/><stop offset="0.50" stop-color="#cc1210"/><stop offset="0.67" stop-color="#cc1210"/><stop offset="0.83" stop-color="#cc1210"/><stop offset="1.00" stop-color="#cc1210"/></linearGradient>
<linearGradient id="s1_99" gradientUnits="userSpaceOnUse" x1="635.3" y1="393.1" x2="549.2" y2="296.4"><stop offset="0.00" stop-color="#c81210"/><stop offset="0.17" stop-color="#c81210"/><stop offset="0.33" stop-color="#c81210"/><stop offset="0.50" stop-color="#c81210"/><stop offset="0.67" stop-color="#c81210"/><stop offset="0.83" stop-color="#c81210"/><stop offset="1.00" stop-color="#c81210"/></linearGradient>
<linearGradient id="s1_100" gradientUnits="userSpaceOnUse" x1="636.1" y1="393.2" x2="550.1" y2="296.8"><stop offset="0.00" stop-color="#c4120f"/><stop offset="0.17" stop-color="#c4120f"/><stop offset="0.33" stop-color="#c4120f"/><stop offset="0.50" stop-color="#c4120f"/><stop offset="0.67" stop-color="#c4120f"/><stop offset="0.83" stop-color="#c4120f"/><stop offset="1.00" stop-color="#c4120f"/></linearGradient>
<linearGradient id="s1_101" gradientUnits="userSpaceOnUse" x1="637.0" y1="393.4" x2="551.0" y2="297.2"><stop offset="0.00" stop-color="#c1110f"/><stop offset="0.17" stop-color="#c1110f"/><stop offset="0.33" stop-color="#c1110f"/><stop offset="0.50" stop-color="#c1110f"/><stop offset="0.67" stop-color="#c1110f"/><stop offset="0.83" stop-color="#c1110f"/><stop offset="1.00" stop-color="#c1110f"/></linearGradient>
<linearGradient id="s1_102" gradientUnits="userSpaceOnUse" x1="637.7" y1="393.7" x2="551.9" y2="297.6"><stop offset="0.00" stop-color="#bd110f"/><stop offset="0.17" stop-color="#bd110f"/><stop offset="0.33" stop-color="#bd110f"/><stop offset="0.50" stop-color="#bd110f"/><stop offset="0.67" stop-color="#bd110f"/><stop offset="0.83" stop-color="#bd110f"/><stop offset="1.00" stop-color="#bd110f"/></linearGradient>
<linearGradient id="s1_103" gradientUnits="userSpaceOnUse" x1="638.5" y1="393.9" x2="552.7" y2="298.0"><stop offset="0.00" stop-color="#bb110f"/><stop offset="0.17" stop-color="#bb110f"/><stop offset="0.33" stop-color="#bb110f"/><stop offset="0.50" stop-color="#bb110f"/><stop offset="0.67" stop-color="#bb110f"/><stop offset="0.83" stop-color="#bb110f"/><stop offset="1.00" stop-color="#bb110f"/></linearGradient>
<linearGradient id="s1_104" gradientUnits="userSpaceOnUse" x1="639.1" y1="394.2" x2="553.5" y2="298.5"><stop offset="0.00" stop-color="#b8110e"/><stop offset="0.17" stop-color="#b8110e"/><stop offset="0.33" stop-color="#b8110e"/><stop offset="0.50" stop-color="#b8110e"/><stop offset="0.67" stop-color="#b8110e"/><stop offset="0.83" stop-color="#b8110e"/><stop offset="1.00" stop-color="#b8110e"/></linearGradient>
<linearGradient id="s1_105" gradientUnits="userSpaceOnUse" x1="639.8" y1="394.6" x2="554.2" y2="299.0"><stop offset="0.00" stop-color="#b6100e"/><stop offset="0.17" stop-color="#b6100e"/><stop offset="0.33" stop-color="#b6100e"/><stop offset="0.50" stop-color="#b6100e"/><stop offset="0.67" stop-color="#b6100e"/><stop offset="0.83" stop-color="#b6100e"/><stop offset="1.00" stop-color="#b6100e"/></linearGradient>
<linearGradient id="s1_106" gradientUnits="userSpaceOnUse" x1="640.4" y1="395.0" x2="554.9" y2="299.6"><stop offset="0.00" stop-color="#b5100e"/><stop offset="0.17" stop-color="#b5100e"/><stop offset="0.33" stop-color="#b5100e"/><stop offset="0.50" stop-color="#b5100e"/><stop offset="0.67" stop-color="#b5100e"/><stop offset="0.83" stop-color="#b5100e"/><stop offset="1.00" stop-color="#b5100e"/></linearGradient>
<linearGradient id="s1_107" gradientUnits="userSpaceOnUse" x1="640.9" y1="395.4" x2="555.6" y2="300.2"><stop offset="0.00" stop-color="#b4100e"/><stop offset="0.17" stop-color="#b4100e"/><stop offset="0.33" stop-color="#b4100e"/><stop offset="0.50" stop-color="#b4100e"/><stop offset="0.67" stop-color="#b4100e"/><stop offset="0.83" stop-color="#b4100e"/><stop offset="1.00" stop-color="#b4100e"/></linearGradient>
<linearGradient id="s1_108" gradientUnits="userSpaceOnUse" x1="641.4" y1="395.9" x2="556.2" y2="300.8"><stop offset="0.00" stop-color="#b3100e"/><stop offset="0.17" stop-color="#b3100e"/><stop offset="0.33" stop-color="#b3100e"/><stop offset="0.50" stop-color="#b3100e"/><stop offset="0.67" stop-color="#b3100e"/><stop offset="0.83" stop-color="#b3100e"/><stop offset="1.00" stop-color="#b3100e"/></linearGradient>
<linearGradient id="s1_109" gradientUnits="userSpaceOnUse" x1="641.9" y1="396.4" x2="556.8" y2="301.5"><stop offset="0.00" stop-color="#b3100e"/><stop offset="0.17" stop-color="#b3100e"/><stop offset="0.33" stop-color="#b3100e"/><stop offset="0.50" stop-color="#b3100e"/><stop offset="0.67" stop-color="#b3100e"/><stop offset="0.83" stop-color="#b3100e"/><stop offset="1.00" stop-color="#b3100e"/></linearGradient>
<path d="M543.2 488.3 L528.9 484.2 L454.2 381.3 L470.1 388.7Z" fill="url(#s1_1000)"/>
<path d="M641.7 396.1 L642.2 411.0 L559.9 318.3 L556.5 301.1Z" fill="url(#s1_1001)"/>
<path d="M529.3 484.8 L528.5 483.6 L453.8 380.6 L454.7 382.0Z" fill="url(#s1_0)"/>
<path d="M528.9 484.2 L528.2 483.0 L453.3 379.8 L454.2 381.3Z" fill="url(#s1_1)"/>
<path d="M528.5 483.6 L528.0 482.4 L452.9 379.0 L453.8 380.6Z" fill="url(#s1_2)"/>
<path d="M528.2 483.0 L527.8 481.7 L452.6 378.2 L453.3 379.8Z" fill="url(#s1_3)"/>
<path d="M528.0 482.4 L527.6 481.0 L452.3 377.3 L452.9 379.0Z" fill="url(#s1_4)"/>
<path d="M527.8 481.7 L527.5 480.2 L452.0 376.4 L452.6 378.2Z" fill="url(#s1_5)"/>
<path d="M527.6 481.0 L527.4 479.4 L451.8 375.5 L452.3 377.3Z" fill="url(#s1_6)"/>
<path d="M527.5 480.2 L527.4 478.6 L451.6 374.5 L452.0 376.4Z" fill="url(#s1_7)"/>
<path d="M527.4 479.4 L527.5 477.7 L451.5 373.6 L451.8 375.5Z" fill="url(#s1_8)"/>
<path d="M527.4 478.6 L527.5 476.9 L451.4 372.6 L451.6 374.5Z" fill="url(#s1_9)"/>
<path d="M527.5 477.7 L527.7 475.9 L451.4 371.6 L451.5 373.6Z" fill="url(#s1_10)"/>
<path d="M527.5 476.9 L527.8 475.0 L451.4 370.5 L451.4 372.6Z" fill="url(#s1_11)"/>
<path d="M527.7 475.9 L528.0 474.0 L451.4 369.4 L451.4 371.6Z" fill="url(#s1_12)"/>
<path d="M527.8 475.0 L528.3 473.0 L451.5 368.3 L451.4 370.5Z" fill="url(#s1_13)"/>
<path d="M528.0 474.0 L528.6 472.0 L451.6 367.2 L451.4 369.4Z" fill="url(#s1_14)"/>
<path d="M528.3 473.0 L529.0 471.0 L451.8 366.1 L451.5 368.3Z" fill="url(#s1_15)"/>
<path d="M528.6 472.0 L529.4 469.9 L452.0 364.9 L451.6 367.2Z" fill="url(#s1_16)"/>
<path d="M529.0 471.0 L529.8 468.8 L452.3 363.8 L451.8 366.1Z" fill="url(#s1_17)"/>
<path d="M529.4 469.9 L530.3 467.7 L452.6 362.6 L452.0 364.9Z" fill="url(#s1_18)"/>
<path d="M529.8 468.8 L530.9 466.5 L453.0 361.4 L452.3 363.8Z" fill="url(#s1_19)"/>
<path d="M530.3 467.7 L531.5 465.4 L453.4 360.1 L452.6 362.6Z" fill="url(#s1_20)"/>
<path d="M530.9 466.5 L532.1 464.2 L453.8 358.9 L453.0 361.4Z" fill="url(#s1_21)"/>
<path d="M531.5 465.4 L532.8 463.0 L454.3 357.7 L453.4 360.1Z" fill="url(#s1_22)"/>
<path d="M532.1 464.2 L533.5 461.8 L454.8 356.4 L453.8 358.9Z" fill="url(#s1_23)"/>
<path d="M532.8 463.0 L534.3 460.5 L455.4 355.1 L454.3 357.7Z" fill="url(#s1_24)"/>
<path d="M533.5 461.8 L535.1 459.3 L456.0 353.8 L454.8 356.4Z" fill="url(#s1_25)"/>
<path d="M534.3 460.5 L535.9 458.0 L456.7 352.5 L455.4 355.1Z" fill="url(#s1_26)"/>
<path d="M535.1 459.3 L536.8 456.7 L457.4 351.2 L456.0 353.8Z" fill="url(#s1_27)"/>
<path d="M535.9 458.0 L537.7 455.5 L458.1 349.9 L456.7 352.5Z" fill="url(#s1_28)"/>
<path d="M536.8 456.7 L538.7 454.1 L458.9 348.6 L457.4 351.2Z" fill="url(#s1_29)"/>
<path d="M537.7 455.5 L539.7 452.8 L459.7 347.3 L458.1 349.9Z" fill="url(#s1_30)"/>
<path d="M538.7 454.1 L540.7 451.5 L460.5 345.9 L458.9 348.6Z" fill="url(#s1_31)"/>
<path d="M539.7 452.8 L541.8 450.2 L461.4 344.6 L459.7 347.3Z" fill="url(#s1_32)"/>
<path d="M540.7 451.5 L542.9 448.8 L462.3 343.3 L460.5 345.9Z" fill="url(#s1_33)"/>
<path d="M541.8 450.2 L544.1 447.5 L463.3 341.9 L461.4 344.6Z" fill="url(#s1_34)"/>
<path d="M542.9 448.8 L545.3 446.1 L464.3 340.6 L462.3 343.3Z" fill="url(#s1_35)"/>
<path d="M544.1 447.5 L546.5 444.8 L465.3 339.2 L463.3 341.9Z" fill="url(#s1_36)"/>
<path d="M545.3 446.1 L547.7 443.4 L466.3 337.9 L464.3 340.6Z" fill="url(#s1_37)"/>
<path d="M546.5 444.8 L549.0 442.0 L467.4 336.6 L465.3 339.2Z" fill="url(#s1_38)"/>
<path d="M547.7 443.4 L550.3 440.7 L468.5 335.3 L466.3 337.9Z" fill="url(#s1_39)"/>
<path d="M549.0 442.0 L551.6 439.3 L469.7 333.9 L467.4 336.6Z" fill="url(#s1_40)"/>
<path d="M550.3 440.7 L553.0 437.9 L470.9 332.6 L468.5 335.3Z" fill="url(#s1_41)"/>
<path d="M551.6 439.3 L554.4 436.6 L472.1 331.3 L469.7 333.9Z" fill="url(#s1_42)"/>
<path d="M553.0 437.9 L555.8 435.2 L473.3 330.0 L470.9 332.6Z" fill="url(#s1_43)"/>
<path d="M554.4 436.6 L557.2 433.8 L474.6 328.7 L472.1 331.3Z" fill="url(#s1_44)"/>
<path d="M555.8 435.2 L558.7 432.5 L475.9 327.5 L473.3 330.0Z" fill="url(#s1_45)"/>
<path d="M557.2 433.8 L560.2 431.2 L477.2 326.2 L474.6 328.7Z" fill="url(#s1_46)"/>
<path d="M558.7 432.5 L561.7 429.8 L478.5 324.9 L475.9 327.5Z" fill="url(#s1_47)"/>
<path d="M560.2 431.2 L563.2 428.5 L479.9 323.7 L477.2 326.2Z" fill="url(#s1_48)"/>
<path d="M561.7 429.8 L564.8 427.2 L481.2 322.5 L478.5 324.9Z" fill="url(#s1_49)"/>
<path d="M563.2 428.5 L566.3 425.9 L482.6 321.3 L479.9 323.7Z" fill="url(#s1_50)"/>
<path d="M564.8 427.2 L567.9 424.6 L484.1 320.1 L481.2 322.5Z" fill="url(#s1_51)"/>
<path d="M566.3 425.9 L569.5 423.3 L485.5 318.9 L482.6 321.3Z" fill="url(#s1_52)"/>
<path d="M567.9 424.6 L571.1 422.0 L487.0 317.7 L484.1 320.1Z" fill="url(#s1_53)"/>
<path d="M569.5 423.3 L572.7 420.8 L488.4 316.6 L485.5 318.9Z" fill="url(#s1_54)"/>
<path d="M571.1 422.0 L574.4 419.5 L489.9 315.5 L487.0 317.7Z" fill="url(#s1_55)"/>
<path d="M572.7 420.8 L576.0 418.3 L491.4 314.4 L488.4 316.6Z" fill="url(#s1_56)"/>
<path d="M574.4 419.5 L577.6 417.1 L492.9 313.3 L489.9 315.5Z" fill="url(#s1_57)"/>
<path d="M576.0 418.3 L579.3 415.9 L494.4 312.3 L491.4 314.4Z" fill="url(#s1_58)"/>
<path d="M577.6 417.1 L580.9 414.8 L496.0 311.3 L492.9 313.3Z" fill="url(#s1_59)"/>
<path d="M579.3 415.9 L582.6 413.6 L497.5 310.3 L494.4 312.3Z" fill="url(#s1_60)"/>
<path d="M580.9 414.8 L584.3 412.5 L499.0 309.3 L496.0 311.3Z" fill="url(#s1_61)"/>
<path d="M582.6 413.6 L585.9 411.4 L500.6 308.3 L497.5 310.3Z" fill="url(#s1_62)"/>
<path d="M584.3 412.5 L587.6 410.4 L502.1 307.4 L499.0 309.3Z" fill="url(#s1_63)"/>
<path d="M585.9 411.4 L589.3 409.3 L503.7 306.5 L500.6 308.3Z" fill="url(#s1_64)"/>
<path d="M587.6 410.4 L590.9 408.3 L505.2 305.7 L502.1 307.4Z" fill="url(#s1_65)"/>
<path d="M589.3 409.3 L592.6 407.3 L506.8 304.8 L503.7 306.5Z" fill="url(#s1_66)"/>
<path d="M590.9 408.3 L594.2 406.3 L508.4 304.0 L505.2 305.7Z" fill="url(#s1_67)"/>
<path d="M592.6 407.3 L595.9 405.4 L509.9 303.3 L506.8 304.8Z" fill="url(#s1_68)"/>
<path d="M594.2 406.3 L597.5 404.5 L511.5 302.5 L508.4 304.0Z" fill="url(#s1_69)"/>
<path d="M595.9 405.4 L599.1 403.6 L513.0 301.8 L509.9 303.3Z" fill="url(#s1_70)"/>
<path d="M597.5 404.5 L600.7 402.8 L514.6 301.1 L511.5 302.5Z" fill="url(#s1_71)"/>
<path d="M599.1 403.6 L602.3 401.9 L516.1 300.5 L513.0 301.8Z" fill="url(#s1_72)"/>
<path d="M600.7 402.8 L603.9 401.2 L517.6 299.9 L514.6 301.1Z" fill="url(#s1_73)"/>
<path d="M602.3 401.9 L605.5 400.4 L519.1 299.3 L516.1 300.5Z" fill="url(#s1_74)"/>
<path d="M603.9 401.2 L607.1 399.7 L520.6 298.8 L517.6 299.9Z" fill="url(#s1_75)"/>
<path d="M605.5 400.4 L608.6 399.0 L522.1 298.3 L519.1 299.3Z" fill="url(#s1_76)"/>
<path d="M607.1 399.7 L610.1 398.3 L523.6 297.8 L520.6 298.8Z" fill="url(#s1_77)"/>
<path d="M608.6 399.0 L611.6 397.7 L525.1 297.4 L522.1 298.3Z" fill="url(#s1_78)"/>
<path d="M610.1 398.3 L613.1 397.1 L526.5 297.0 L523.6 297.8Z" fill="url(#s1_79)"/>
<path d="M611.6 397.7 L614.6 396.6 L528.0 296.6 L525.1 297.4Z" fill="url(#s1_80)"/>
<path d="M613.1 397.1 L616.0 396.1 L529.4 296.3 L526.5 297.0Z" fill="url(#s1_81)"/>
<path d="M614.6 396.6 L617.4 395.6 L530.8 296.0 L528.0 296.6Z" fill="url(#s1_82)"/>
<path d="M616.0 396.1 L618.8 395.2 L532.2 295.8 L529.4 296.3Z" fill="url(#s1_83)"/>
<path d="M617.4 395.6 L620.1 394.8 L533.5 295.6 L530.8 296.0Z" fill="url(#s1_84)"/>
<path d="M618.8 395.2 L621.5 394.4 L534.8 295.4 L532.2 295.8Z" fill="url(#s1_85)"/>
<path d="M620.1 394.8 L622.8 394.1 L536.1 295.3 L533.5 295.6Z" fill="url(#s1_86)"/>
<path d="M621.5 394.4 L624.0 393.8 L537.4 295.2 L534.8 295.4Z" fill="url(#s1_87)"/>
<path d="M622.8 394.1 L625.3 393.5 L538.7 295.1 L536.1 295.3Z" fill="url(#s1_88)"/>
<path d="M624.0 393.8 L626.5 393.3 L539.9 295.1 L537.4 295.2Z" fill="url(#s1_89)"/>
<path d="M625.3 393.5 L627.7 393.1 L541.1 295.1 L538.7 295.1Z" fill="url(#s1_90)"/>
<path d="M626.5 393.3 L628.8 393.0 L542.3 295.2 L539.9 295.1Z" fill="url(#s1_91)"/>
<path d="M627.7 393.1 L629.9 392.9 L543.4 295.2 L541.1 295.1Z" fill="url(#s1_92)"/>
<path d="M628.8 393.0 L631.0 392.8 L544.6 295.4 L542.3 295.2Z" fill="url(#s1_93)"/>
<path d="M629.9 392.9 L632.0 392.8 L545.6 295.6 L543.4 295.2Z" fill="url(#s1_94)"/>
<path d="M631.0 392.8 L633.0 392.8 L546.7 295.8 L544.6 295.4Z" fill="url(#s1_95)"/>
<path d="M632.0 392.8 L633.9 392.9 L547.7 296.0 L545.6 295.6Z" fill="url(#s1_96)"/>
<path d="M633.0 392.8 L634.9 393.0 L548.7 296.3 L546.7 295.8Z" fill="url(#s1_97)"/>
<path d="M633.9 392.9 L635.7 393.1 L549.6 296.6 L547.7 296.0Z" fill="url(#s1_98)"/>
<path d="M634.9 393.0 L636.6 393.3 L550.6 297.0 L548.7 296.3Z" fill="url(#s1_99)"/>
<path d="M635.7 393.1 L637.4 393.5 L551.4 297.4 L549.6 296.6Z" fill="url(#s1_100)"/>
<path d="M636.6 393.3 L638.1 393.8 L552.3 297.8 L550.6 297.0Z" fill="url(#s1_101)"/>
<path d="M637.4 393.5 L638.8 394.1 L553.1 298.3 L551.4 297.4Z" fill="url(#s1_102)"/>
<path d="M638.1 393.8 L639.5 394.4 L553.8 298.8 L552.3 297.8Z" fill="url(#s1_103)"/>
<path d="M638.8 394.1 L640.1 394.8 L554.6 299.3 L553.1 298.3Z" fill="url(#s1_104)"/>
<path d="M639.5 394.4 L640.7 395.2 L555.2 299.9 L553.8 298.8Z" fill="url(#s1_105)"/>
<path d="M640.1 394.8 L641.2 395.6 L555.9 300.5 L554.6 299.3Z" fill="url(#s1_106)"/>
<path d="M640.7 395.2 L641.7 396.1 L556.5 301.1 L555.2 299.9Z" fill="url(#s1_107)"/>
<path d="M641.2 395.6 L642.1 396.6 L557.1 301.8 L555.9 300.5Z" fill="url(#s1_108)"/>
<path d="M641.7 396.1 L642.1 396.6 L557.1 301.8 L556.5 301.1Z" fill="url(#s1_109)"/>
</g>
<ellipse cx="585.7" cy="440.7" rx="71.6" ry="23.7" transform="rotate(142.0 585.7 440.7)" fill="#2b2b2b"/>
<clipPath id="k2"><path d="M612.2 299.1 L612.3 298.1 L612.4 297.0 L612.5 295.9 L612.8 294.7 L613.0 293.5 L613.4 292.3 L613.8 291.0 L614.2 289.8 L614.7 288.4 L615.2 287.1 L615.9 285.8 L616.5 284.4 L617.2 283.0 L618.0 281.5 L618.8 280.1 L619.6 278.7 L620.5 277.2 L621.5 275.7 L622.5 274.2 L623.5 272.7 L624.6 271.2 L625.7 269.7 L626.9 268.2 L628.1 266.7 L629.4 265.2 L630.6 263.7 L632.0 262.2 L633.3 260.7 L634.7 259.2 L636.1 257.8 L637.5 256.3 L639.0 254.8 L640.5 253.4 L642.0 252.0 L643.5 250.6 L645.1 249.2 L646.6 247.9 L648.2 246.6 L649.8 245.3 L651.4 244.0 L653.0 242.7 L654.6 241.5 L656.3 240.3 L657.9 239.2 L659.5 238.1 L661.1 237.0 L662.8 235.9 L664.4 234.9 L666.0 234.0 L667.6 233.1 L669.2 232.2 L670.8 231.3 L672.4 230.5 L673.9 229.8 L675.4 229.1 L677.0 228.4 L678.4 227.8 L679.9 227.3 L681.4 226.8 L682.8 226.3 L684.2 225.9 L685.5 225.6 L686.8 225.2 L688.1 225.0 L689.4 224.8 L690.6 224.6 L691.8 224.5 L692.9 224.5 L694.0 224.5 L695.0 224.6 L696.1 224.7 L697.0 224.8 L697.9 225.1 L698.8 225.3 L699.6 225.7 L700.4 226.0 L701.1 226.5 L701.8 226.9 L702.4 227.4 L787.9 311.6 L788.4 312.1 L788.8 312.6 L789.2 313.3 L789.6 313.9 L789.8 314.6 L790.0 315.4 L790.2 316.2 L790.3 317.1 L790.3 318.0 L790.3 319.0 L790.2 320.0 L790.0 321.0 L789.8 322.1 L789.5 323.3 L789.2 324.4 L788.8 325.6 L788.3 326.9 L787.8 328.2 L787.2 329.5 L786.6 330.8 L785.9 332.2 L785.1 333.6 L784.3 335.1 L783.5 336.5 L782.6 338.0 L781.6 339.5 L780.6 341.0 L779.5 342.6 L778.4 344.1 L777.2 345.7 L776.0 347.3 L774.8 348.9 L773.5 350.5 L772.2 352.1 L770.8 353.7 L769.4 355.4 L767.9 357.0 L766.4 358.6 L764.9 360.2 L763.4 361.8 L761.8 363.4 L760.2 365.0 L758.6 366.6 L756.9 368.2 L755.2 369.7 L753.6 371.3 L751.8 372.8 L750.1 374.3 L748.4 375.8 L746.6 377.2 L744.9 378.7 L743.1 380.1 L741.4 381.4 L739.6 382.8 L737.8 384.1 L736.1 385.3 L734.3 386.6 L732.6 387.8 L730.8 388.9 L729.1 390.1 L727.4 391.1 L725.7 392.2 L724.0 393.2 L722.3 394.1 L720.6 395.0 L719.0 395.9 L717.4 396.7 L715.9 397.4 L714.3 398.1 L712.8 398.8 L711.3 399.4 L709.9 399.9 L708.5 400.4 L707.1 400.8 L705.8 401.2 L704.5 401.5 L703.2 401.8 L702.0 402.0 L700.9 402.2 L699.8 402.3 L698.7 402.3 L697.7 402.3 L696.7 402.3 L695.8 402.1 L695.0 402.0 L694.2 401.7 L693.4 401.4 L692.7 401.1 L692.1 400.7 L691.5 400.2 L691.0 399.7 L614.8 307.4 L614.3 306.8 L613.9 306.1 L613.5 305.4 L613.1 304.6 L612.8 303.8 L612.6 303.0 L612.4 302.1 L612.3 301.1 L612.2 300.2Z"/></clipPath>
<g clip-path="url(#k2)">
<linearGradient id="s2_1000" gradientUnits="userSpaceOnUse" x1="691.0" y1="399.7" x2="614.8" y2="307.4"><stop offset="0.00" stop-color="#2f3030"/><stop offset="0.17" stop-color="#2f3030"/><stop offset="0.33" stop-color="#2f3030"/><stop offset="0.50" stop-color="#2f3030"/><stop offset="0.67" stop-color="#2f3030"/><stop offset="0.83" stop-color="#2f3030"/><stop offset="1.00" stop-color="#2f3030"/></linearGradient>
<linearGradient id="s2_1001" gradientUnits="userSpaceOnUse" x1="788.4" y1="312.1" x2="703.0" y2="228.0"><stop offset="0.00" stop-color="#bf120e"/><stop offset="0.17" stop-color="#bf110e"/><stop offset="0.33" stop-color="#bf110e"/><stop offset="0.50" stop-color="#bf110e"/><stop offset="0.67" stop-color="#bf110e"/><stop offset="0.83" stop-color="#bf110e"/><stop offset="1.00" stop-color="#bf110e"/></linearGradient>
<linearGradient id="s2_0" gradientUnits="userSpaceOnUse" x1="690.8" y1="399.5" x2="614.6" y2="307.1"><stop offset="0.00" stop-color="#2f3030"/><stop offset="0.17" stop-color="#2f3030"/><stop offset="0.33" stop-color="#2f3030"/><stop offset="0.50" stop-color="#2f3030"/><stop offset="0.67" stop-color="#2f3030"/><stop offset="0.83" stop-color="#2f3030"/><stop offset="1.00" stop-color="#2f3030"/></linearGradient>
<linearGradient id="s2_1" gradientUnits="userSpaceOnUse" x1="690.5" y1="399.0" x2="614.2" y2="306.6"><stop offset="0.00" stop-color="#2f3030"/><stop offset="0.17" stop-color="#2f3030"/><stop offset="0.33" stop-color="#2f3030"/><stop offset="0.50" stop-color="#2f3030"/><stop offset="0.67" stop-color="#2f3030"/><stop offset="0.83" stop-color="#2f3030"/><stop offset="1.00" stop-color="#2f3030"/></linearGradient>
<linearGradient id="s2_2" gradientUnits="userSpaceOnUse" x1="690.2" y1="398.5" x2="613.8" y2="306.1"><stop offset="0.00" stop-color="#2f3030"/><stop offset="0.17" stop-color="#2f3030"/><stop offset="0.33" stop-color="#2f3030"/><stop offset="0.50" stop-color="#2f3030"/><stop offset="0.67" stop-color="#2f3030"/><stop offset="0.83" stop-color="#2f3030"/><stop offset="1.00" stop-color="#2f3030"/></linearGradient>
<linearGradient id="s2_3" gradientUnits="userSpaceOnUse" x1="689.9" y1="398.0" x2="613.5" y2="305.5"><stop offset="0.00" stop-color="#303131"/><stop offset="0.17" stop-color="#303131"/><stop offset="0.33" stop-color="#303131"/><stop offset="0.50" stop-color="#303131"/><stop offset="0.67" stop-color="#303131"/><stop offset="0.83" stop-color="#303131"/><stop offset="1.00" stop-color="#303131"/></linearGradient>
<linearGradient id="s2_4" gradientUnits="userSpaceOnUse" x1="689.7" y1="397.4" x2="613.2" y2="304.9"><stop offset="0.00" stop-color="#303131"/><stop offset="0.17" stop-color="#303131"/><stop offset="0.33" stop-color="#303131"/><stop offset="0.50" stop-color="#303131"/><stop offset="0.67" stop-color="#303131"/><stop offset="0.83" stop-color="#303131"/><stop offset="1.00" stop-color="#303131"/></linearGradient>
<linearGradient id="s2_5" gradientUnits="userSpaceOnUse" x1="689.5" y1="396.8" x2="613.0" y2="304.2"><stop offset="0.00" stop-color="#313232"/><stop offset="0.17" stop-color="#313232"/><stop offset="0.33" stop-color="#313232"/><stop offset="0.50" stop-color="#313232"/><stop offset="0.67" stop-color="#313232"/><stop offset="0.83" stop-color="#313232"/><stop offset="1.00" stop-color="#313232"/></linearGradient>
<linearGradient id="s2_6" gradientUnits="userSpaceOnUse" x1="689.3" y1="396.1" x2="612.7" y2="303.5"><stop offset="0.00" stop-color="#323333"/><stop offset="0.17" stop-color="#323333"/><stop offset="0.33" stop-color="#323333"/><stop offset="0.50" stop-color="#323333"/><stop offset="0.67" stop-color="#323333"/><stop offset="0.83" stop-color="#323333"/><stop offset="1.00" stop-color="#323333"/></linearGradient>
<linearGradient id="s2_7" gradientUnits="userSpaceOnUse" x1="689.2" y1="395.5" x2="612.6" y2="302.8"><stop offset="0.00" stop-color="#333434"/><stop offset="0.17" stop-color="#333434"/><stop offset="0.33" stop-color="#333434"/><stop offset="0.50" stop-color="#333434"/><stop offset="0.67" stop-color="#333434"/><stop offset="0.83" stop-color="#333434"/><stop offset="1.00" stop-color="#333434"/></linearGradient>
<linearGradient id="s2_8" gradientUnits="userSpaceOnUse" x1="689.1" y1="394.7" x2="612.4" y2="302.1"><stop offset="0.00" stop-color="#333535"/><stop offset="0.17" stop-color="#333535"/><stop offset="0.33" stop-color="#333535"/><stop offset="0.50" stop-color="#333535"/><stop offset="0.67" stop-color="#333535"/><stop offset="0.83" stop-color="#333535"/><stop offset="1.00" stop-color="#333535"/></linearGradient>
<linearGradient id="s2_9" gradientUnits="userSpaceOnUse" x1="689.1" y1="394.0" x2="612.3" y2="301.3"><stop offset="0.00" stop-color="#353636"/><stop offset="0.17" stop-color="#353636"/><stop offset="0.33" stop-color="#353636"/><stop offset="0.50" stop-color="#353636"/><stop offset="0.67" stop-color="#353636"/><stop offset="0.83" stop-color="#353636"/><stop offset="1.00" stop-color="#353636"/></linearGradient>
<linearGradient id="s2_10" gradientUnits="userSpaceOnUse" x1="689.1" y1="393.2" x2="612.3" y2="300.6"><stop offset="0.00" stop-color="#363738"/><stop offset="0.17" stop-color="#363738"/><stop offset="0.33" stop-color="#363738"/><stop offset="0.50" stop-color="#363738"/><stop offset="0.67" stop-color="#363738"/><stop offset="0.83" stop-color="#363738"/><stop offset="1.00" stop-color="#363738"/></linearGradient>
<linearGradient id="s2_11" gradientUnits="userSpaceOnUse" x1="689.2" y1="392.4" x2="612.2" y2="299.7"><stop offset="0.00" stop-color="#373939"/><stop offset="0.17" stop-color="#373939"/><stop offset="0.33" stop-color="#373939"/><stop offset="0.50" stop-color="#373939"/><stop offset="0.67" stop-color="#373939"/><stop offset="0.83" stop-color="#373939"/><stop offset="1.00" stop-color="#373939"/></linearGradient>
<linearGradient id="s2_12" gradientUnits="userSpaceOnUse" x1="689.3" y1="391.6" x2="612.2" y2="298.9"><stop offset="0.00" stop-color="#393b3b"/><stop offset="0.17" stop-color="#393b3b"/><stop offset="0.33" stop-color="#393b3b"/><stop offset="0.50" stop-color="#393b3b"/><stop offset="0.67" stop-color="#393b3b"/><stop offset="0.83" stop-color="#393b3b"/><stop offset="1.00" stop-color="#393b3b"/></linearGradient>
<linearGradient id="s2_13" gradientUnits="userSpaceOnUse" x1="689.4" y1="390.7" x2="612.3" y2="298.0"><stop offset="0.00" stop-color="#3a3c3d"/><stop offset="0.17" stop-color="#3a3c3d"/><stop offset="0.33" stop-color="#3a3c3d"/><stop offset="0.50" stop-color="#3a3c3d"/><stop offset="0.67" stop-color="#3a3c3d"/><stop offset="0.83" stop-color="#3a3c3d"/><stop offset="1.00" stop-color="#3a3c3d"/></linearGradient>
<linearGradient id="s2_14" gradientUnits="userSpaceOnUse" x1="689.6" y1="389.8" x2="612.4" y2="297.1"><stop offset="0.00" stop-color="#3c3e3f"/><stop offset="0.17" stop-color="#3c3e3f"/><stop offset="0.33" stop-color="#3c3e3f"/><stop offset="0.50" stop-color="#3c3e3f"/><stop offset="0.67" stop-color="#3c3e3f"/><stop offset="0.83" stop-color="#3c3e3f"/><stop offset="1.00" stop-color="#3c3e3f"/></linearGradient>
<linearGradient id="s2_15" gradientUnits="userSpaceOnUse" x1="689.8" y1="388.9" x2="612.5" y2="296.2"><stop offset="0.00" stop-color="#3e4041"/><stop offset="0.17" stop-color="#3e4041"/><stop offset="0.33" stop-color="#3e4041"/><stop offset="0.50" stop-color="#3e4041"/><stop offset="0.67" stop-color="#3e4041"/><stop offset="0.83" stop-color="#3e4041"/><stop offset="1.00" stop-color="#3e4041"/></linearGradient>
<linearGradient id="s2_16" gradientUnits="userSpaceOnUse" x1="690.0" y1="388.0" x2="612.6" y2="295.3"><stop offset="0.00" stop-color="#404243"/><stop offset="0.17" stop-color="#404243"/><stop offset="0.33" stop-color="#404243"/><stop offset="0.50" stop-color="#404243"/><stop offset="0.67" stop-color="#404243"/><stop offset="0.83" stop-color="#404243"/><stop offset="1.00" stop-color="#404243"/></linearGradient>
<linearGradient id="s2_17" gradientUnits="userSpaceOnUse" x1="690.3" y1="387.0" x2="612.8" y2="294.3"><stop offset="0.00" stop-color="#424445"/><stop offset="0.17" stop-color="#424445"/><stop offset="0.33" stop-color="#424445"/><stop offset="0.50" stop-color="#424445"/><stop offset="0.67" stop-color="#424445"/><stop offset="0.83" stop-color="#424445"/><stop offset="1.00" stop-color="#424445"/></linearGradient>
<linearGradient id="s2_18" gradientUnits="userSpaceOnUse" x1="690.7" y1="386.0" x2="613.1" y2="293.4"><stop offset="0.00" stop-color="#444748"/><stop offset="0.17" stop-color="#444748"/><stop offset="0.33" stop-color="#444748"/><stop offset="0.50" stop-color="#444748"/><stop offset="0.67" stop-color="#444748"/><stop offset="0.83" stop-color="#444748"/><stop offset="1.00" stop-color="#444748"/></linearGradient>
<linearGradient id="s2_19" gradientUnits="userSpaceOnUse" x1="691.1" y1="385.0" x2="613.4" y2="292.3"><stop offset="0.00" stop-color="#5c0e0b"/><stop offset="0.17" stop-color="#5f0e0c"/><stop offset="0.33" stop-color="#610f0c"/><stop offset="0.50" stop-color="#640f0d"/><stop offset="0.67" stop-color="#660f0d"/><stop offset="0.83" stop-color="#690f0e"/><stop offset="1.00" stop-color="#6c0f0e"/></linearGradient>
<linearGradient id="s2_20" gradientUnits="userSpaceOnUse" x1="691.5" y1="383.9" x2="613.7" y2="291.3"><stop offset="0.00" stop-color="#5d0e0c"/><stop offset="0.17" stop-color="#600e0c"/><stop offset="0.33" stop-color="#620f0d"/><stop offset="0.50" stop-color="#650f0d"/><stop offset="0.67" stop-color="#670f0e"/><stop offset="0.83" stop-color="#6a0f0e"/><stop offset="1.00" stop-color="#6d0f0f"/></linearGradient>
<linearGradient id="s2_21" gradientUnits="userSpaceOnUse" x1="691.9" y1="382.9" x2="614.0" y2="290.3"><stop offset="0.00" stop-color="#5e0e0c"/><stop offset="0.17" stop-color="#610f0c"/><stop offset="0.33" stop-color="#630f0d"/><stop offset="0.50" stop-color="#660f0d"/><stop offset="0.67" stop-color="#680f0e"/><stop offset="0.83" stop-color="#6b0f0e"/><stop offset="1.00" stop-color="#6e100f"/></linearGradient>
<linearGradient id="s2_22" gradientUnits="userSpaceOnUse" x1="692.4" y1="381.8" x2="614.4" y2="289.2"><stop offset="0.00" stop-color="#5f0e0c"/><stop offset="0.17" stop-color="#620f0c"/><stop offset="0.33" stop-color="#640f0d"/><stop offset="0.50" stop-color="#670f0d"/><stop offset="0.67" stop-color="#6a0f0e"/><stop offset="0.83" stop-color="#6c0f0e"/><stop offset="1.00" stop-color="#6f100f"/></linearGradient>
<linearGradient id="s2_23" gradientUnits="userSpaceOnUse" x1="693.0" y1="380.7" x2="614.8" y2="288.1"><stop offset="0.00" stop-color="#600e0c"/><stop offset="0.17" stop-color="#630f0d"/><stop offset="0.33" stop-color="#650f0d"/><stop offset="0.50" stop-color="#680f0e"/><stop offset="0.67" stop-color="#6b0f0e"/><stop offset="0.83" stop-color="#6d0f0f"/><stop offset="1.00" stop-color="#70100f"/></linearGradient>
<linearGradient id="s2_24" gradientUnits="userSpaceOnUse" x1="693.5" y1="379.5" x2="615.3" y2="287.0"><stop offset="0.00" stop-color="#610f0c"/><stop offset="0.17" stop-color="#640f0d"/><stop offset="0.33" stop-color="#670f0d"/><stop offset="0.50" stop-color="#690f0e"/><stop offset="0.67" stop-color="#6c0f0e"/><stop offset="0.83" stop-color="#6e100f"/><stop offset="1.00" stop-color="#71100f"/></linearGradient>
<linearGradient id="s2_25" gradientUnits="userSpaceOnUse" x1="694.2" y1="378.4" x2="615.8" y2="285.9"><stop offset="0.00" stop-color="#630f0d"/><stop offset="0.17" stop-color="#650f0d"/><stop offset="0.33" stop-color="#680f0e"/><stop offset="0.50" stop-color="#6a0f0e"/><stop offset="0.67" stop-color="#6d0f0f"/><stop offset="0.83" stop-color="#70100f"/><stop offset="1.00" stop-color="#721010"/></linearGradient>
<linearGradient id="s2_26" gradientUnits="userSpaceOnUse" x1="694.8" y1="377.2" x2="616.3" y2="284.8"><stop offset="0.00" stop-color="#640f0d"/><stop offset="0.17" stop-color="#670f0d"/><stop offset="0.33" stop-color="#690f0e"/><stop offset="0.50" stop-color="#6c0f0e"/><stop offset="0.67" stop-color="#6e100f"/><stop offset="0.83" stop-color="#71100f"/><stop offset="1.00" stop-color="#741010"/></linearGradient>
<linearGradient id="s2_27" gradientUnits="userSpaceOnUse" x1="695.5" y1="376.0" x2="616.9" y2="283.7"><stop offset="0.00" stop-color="#650f0d"/><stop offset="0.17" stop-color="#680f0e"/><stop offset="0.33" stop-color="#6a0f0e"/><stop offset="0.50" stop-color="#6d0f0f"/><stop offset="0.67" stop-color="#70100f"/><stop offset="0.83" stop-color="#721010"/><stop offset="1.00" stop-color="#761010"/></linearGradient>
<linearGradient id="s2_28" gradientUnits="userSpaceOnUse" x1="696.2" y1="374.8" x2="617.5" y2="282.5"><stop offset="0.00" stop-color="#670f0d"/><stop offset="0.17" stop-color="#690f0e"/><stop offset="0.33" stop-color="#6c0f0e"/><stop offset="0.50" stop-color="#6e100f"/><stop offset="0.67" stop-color="#71100f"/><stop offset="0.83" stop-color="#741010"/><stop offset="1.00" stop-color="#781010"/></linearGradient>
<linearGradient id="s2_29" gradientUnits="userSpaceOnUse" x1="697.0" y1="373.6" x2="618.1" y2="281.4"><stop offset="0.00" stop-color="#680f0e"/><stop offset="0.17" stop-color="#6b0f0e"/><stop offset="0.33" stop-color="#6d0f0f"/><stop offset="0.50" stop-color="#70100f"/><stop offset="0.67" stop-color="#721010"/><stop offset="0.83" stop-color="#761010"/><stop offset="1.00" stop-color="#7b1110"/></linearGradient>
<linearGradient id="s2_30" gradientUnits="userSpaceOnUse" x1="697.8" y1="372.4" x2="618.7" y2="280.2"><stop offset="0.00" stop-color="#690f0e"/><stop offset="0.17" stop-color="#6c0f0e"/><stop offset="0.33" stop-color="#6f100f"/><stop offset="0.50" stop-color="#71100f"/><stop offset="0.67" stop-color="#741010"/><stop offset="0.83" stop-color="#791010"/><stop offset="1.00" stop-color="#7e1110"/></linearGradient>
<linearGradient id="s2_31" gradientUnits="userSpaceOnUse" x1="698.6" y1="371.1" x2="619.4" y2="279.0"><stop offset="0.00" stop-color="#6b0f0e"/><stop offset="0.17" stop-color="#6d0f0f"/><stop offset="0.33" stop-color="#70100f"/><stop offset="0.50" stop-color="#731010"/><stop offset="0.67" stop-color="#761010"/><stop offset="0.83" stop-color="#7c1110"/><stop offset="1.00" stop-color="#811110"/></linearGradient>
<linearGradient id="s2_32" gradientUnits="userSpaceOnUse" x1="699.4" y1="369.9" x2="620.2" y2="277.8"><stop offset="0.00" stop-color="#6c0f0f"/><stop offset="0.17" stop-color="#6f100f"/><stop offset="0.33" stop-color="#711010"/><stop offset="0.50" stop-color="#741010"/><stop offset="0.67" stop-color="#791110"/><stop offset="0.83" stop-color="#7e1110"/><stop offset="1.00" stop-color="#841210"/></linearGradient>
<linearGradient id="s2_33" gradientUnits="userSpaceOnUse" x1="700.3" y1="368.6" x2="620.9" y2="276.6"><stop offset="0.00" stop-color="#6e100f"/><stop offset="0.17" stop-color="#70100f"/><stop offset="0.33" stop-color="#731010"/><stop offset="0.50" stop-color="#771010"/><stop offset="0.67" stop-color="#7c1110"/><stop offset="0.83" stop-color="#811110"/><stop offset="1.00" stop-color="#871210"/></linearGradient>
<linearGradient id="s2_34" gradientUnits="userSpaceOnUse" x1="701.3" y1="367.3" x2="621.7" y2="275.4"><stop offset="0.00" stop-color="#6f100f"/><stop offset="0.17" stop-color="#721010"/><stop offset="0.33" stop-color="#751010"/><stop offset="0.50" stop-color="#7a1110"/><stop offset="0.67" stop-color="#7f1110"/><stop offset="0.83" stop-color="#851210"/><stop offset="1.00" stop-color="#8a1210"/></linearGradient>
<linearGradient id="s2_35" gradientUnits="userSpaceOnUse" x1="702.2" y1="366.0" x2="622.5" y2="274.2"><stop offset="0.00" stop-color="#71100f"/><stop offset="0.17" stop-color="#731010"/><stop offset="0.33" stop-color="#781010"/><stop offset="0.50" stop-color="#7d1110"/><stop offset="0.67" stop-color="#821110"/><stop offset="0.83" stop-color="#881210"/><stop offset="1.00" stop-color="#8d1210"/></linearGradient>
<linearGradient id="s2_36" gradientUnits="userSpaceOnUse" x1="703.2" y1="364.7" x2="623.4" y2="272.9"><stop offset="0.00" stop-color="#721010"/><stop offset="0.17" stop-color="#761010"/><stop offset="0.33" stop-color="#7b1110"/><stop offset="0.50" stop-color="#801110"/><stop offset="0.67" stop-color="#861210"/><stop offset="0.83" stop-color="#8b1210"/><stop offset="1.00" stop-color="#901310"/></linearGradient>
<linearGradient id="s2_37" gradientUnits="userSpaceOnUse" x1="704.2" y1="363.4" x2="624.3" y2="271.7"><stop offset="0.00" stop-color="#741010"/><stop offset="0.17" stop-color="#791110"/><stop offset="0.33" stop-color="#7e1110"/><stop offset="0.50" stop-color="#841210"/><stop offset="0.67" stop-color="#891210"/><stop offset="0.83" stop-color="#8e1310"/><stop offset="1.00" stop-color="#931310"/></linearGradient>
<linearGradient id="s2_38" gradientUnits="userSpaceOnUse" x1="705.3" y1="362.1" x2="625.2" y2="270.5"><stop offset="0.00" stop-color="#771010"/><stop offset="0.17" stop-color="#7d1110"/><stop offset="0.33" stop-color="#821110"/><stop offset="0.50" stop-color="#871210"/><stop offset="0.67" stop-color="#8c1210"/><stop offset="0.83" stop-color="#911310"/><stop offset="1.00" stop-color="#971310"/></linearGradient>
<linearGradient id="s2_39" gradientUnits="userSpaceOnUse" x1="706.3" y1="360.8" x2="626.1" y2="269.3"><stop offset="0.00" stop-color="#7b1110"/><stop offset="0.17" stop-color="#801110"/><stop offset="0.33" stop-color="#851210"/><stop offset="0.50" stop-color="#8a1210"/><stop offset="0.67" stop-color="#901310"/><stop offset="0.83" stop-color="#951310"/><stop offset="1.00" stop-color="#9a1410"/></linearGradient>
<linearGradient id="s2_40" gradientUnits="userSpaceOnUse" x1="707.4" y1="359.5" x2="627.1" y2="268.0"><stop offset="0.00" stop-color="#7e1110"/><stop offset="0.17" stop-color="#831110"/><stop offset="0.33" stop-color="#881210"/><stop offset="0.50" stop-color="#8e1210"/><stop offset="0.67" stop-color="#931310"/><stop offset="0.83" stop-color="#981310"/><stop offset="1.00" stop-color="#9d1410"/></linearGradient>
<linearGradient id="s2_41" gradientUnits="userSpaceOnUse" x1="708.6" y1="358.1" x2="628.1" y2="266.8"><stop offset="0.00" stop-color="#821110"/><stop offset="0.17" stop-color="#871210"/><stop offset="0.33" stop-color="#8c1210"/><stop offset="0.50" stop-color="#911310"/><stop offset="0.67" stop-color="#961310"/><stop offset="0.83" stop-color="#9c1410"/><stop offset="1.00" stop-color="#a11410"/></linearGradient>
<linearGradient id="s2_42" gradientUnits="userSpaceOnUse" x1="709.7" y1="356.8" x2="629.1" y2="265.6"><stop offset="0.00" stop-color="#851210"/><stop offset="0.17" stop-color="#8a1210"/><stop offset="0.33" stop-color="#8f1310"/><stop offset="0.50" stop-color="#951310"/><stop offset="0.67" stop-color="#9a1410"/><stop offset="0.83" stop-color="#9f1410"/><stop offset="1.00" stop-color="#a41510"/></linearGradient>
<linearGradient id="s2_43" gradientUnits="userSpaceOnUse" x1="710.9" y1="355.5" x2="630.1" y2="264.3"><stop offset="0.00" stop-color="#891210"/><stop offset="0.17" stop-color="#8e1310"/><stop offset="0.33" stop-color="#931310"/><stop offset="0.50" stop-color="#981410"/><stop offset="0.67" stop-color="#9d1410"/><stop offset="0.83" stop-color="#a31510"/><stop offset="1.00" stop-color="#a81510"/></linearGradient>
<linearGradient id="s2_44" gradientUnits="userSpaceOnUse" x1="712.1" y1="354.2" x2="631.2" y2="263.1"><stop offset="0.00" stop-color="#8d1311"/><stop offset="0.17" stop-color="#921311"/><stop offset="0.33" stop-color="#971411"/><stop offset="0.50" stop-color="#9c1411"/><stop offset="0.67" stop-color="#a11511"/><stop offset="0.83" stop-color="#a71511"/><stop offset="1.00" stop-color="#b01611"/></linearGradient>
<linearGradient id="s2_45" gradientUnits="userSpaceOnUse" x1="713.3" y1="352.8" x2="632.3" y2="261.9"><stop offset="0.00" stop-color="#911411"/><stop offset="0.17" stop-color="#961511"/><stop offset="0.33" stop-color="#9b1511"/><stop offset="0.50" stop-color="#a11611"/><stop offset="0.67" stop-color="#a61611"/><stop offset="0.83" stop-color="#ad1712"/><stop offset="1.00" stop-color="#b81712"/></linearGradient>
<linearGradient id="s2_46" gradientUnits="userSpaceOnUse" x1="714.6" y1="351.5" x2="633.4" y2="260.6"><stop offset="0.00" stop-color="#971613"/><stop offset="0.17" stop-color="#9c1713"/><stop offset="0.33" stop-color="#a11713"/><stop offset="0.50" stop-color="#a61813"/><stop offset="0.67" stop-color="#ab1813"/><stop offset="0.83" stop-color="#b61914"/><stop offset="1.00" stop-color="#c11a14"/></linearGradient>
<linearGradient id="s2_47" gradientUnits="userSpaceOnUse" x1="715.8" y1="350.2" x2="634.5" y2="259.4"><stop offset="0.00" stop-color="#9e1a17"/><stop offset="0.17" stop-color="#a31b17"/><stop offset="0.33" stop-color="#a81b17"/><stop offset="0.50" stop-color="#ac1c17"/><stop offset="0.67" stop-color="#b51c17"/><stop offset="0.83" stop-color="#c01d18"/><stop offset="1.00" stop-color="#cb1e18"/></linearGradient>
<linearGradient id="s2_48" gradientUnits="userSpaceOnUse" x1="717.1" y1="348.9" x2="635.6" y2="258.2"><stop offset="0.00" stop-color="#a8211e"/><stop offset="0.17" stop-color="#ac221e"/><stop offset="0.33" stop-color="#b1221e"/><stop offset="0.50" stop-color="#b7231e"/><stop offset="0.67" stop-color="#c2231e"/><stop offset="0.83" stop-color="#cc241e"/><stop offset="1.00" stop-color="#d6241f"/></linearGradient>
<linearGradient id="s2_49" gradientUnits="userSpaceOnUse" x1="718.4" y1="347.6" x2="636.8" y2="257.0"><stop offset="0.00" stop-color="#b52c28"/><stop offset="0.17" stop-color="#b92c28"/><stop offset="0.33" stop-color="#bd2d28"/><stop offset="0.50" stop-color="#c62d29"/><stop offset="0.67" stop-color="#cf2e29"/><stop offset="0.83" stop-color="#d82e29"/><stop offset="1.00" stop-color="#e12f29"/></linearGradient>
<linearGradient id="s2_50" gradientUnits="userSpaceOnUse" x1="719.7" y1="346.3" x2="638.0" y2="255.8"><stop offset="0.00" stop-color="#c53b37"/><stop offset="0.17" stop-color="#c83b37"/><stop offset="0.33" stop-color="#cf3c37"/><stop offset="0.50" stop-color="#d63c38"/><stop offset="0.67" stop-color="#dd3c38"/><stop offset="0.83" stop-color="#e43d38"/><stop offset="1.00" stop-color="#eb3d38"/></linearGradient>
<linearGradient id="s2_51" gradientUnits="userSpaceOnUse" x1="721.1" y1="345.0" x2="639.2" y2="254.7"><stop offset="0.00" stop-color="#d74d4a"/><stop offset="0.17" stop-color="#db4d4a"/><stop offset="0.33" stop-color="#e04d4a"/><stop offset="0.50" stop-color="#e54e4a"/><stop offset="0.67" stop-color="#ea4e4a"/><stop offset="0.83" stop-color="#f04e4a"/><stop offset="1.00" stop-color="#f54f4a"/></linearGradient>
<linearGradient id="s2_52" gradientUnits="userSpaceOnUse" x1="722.4" y1="343.7" x2="640.4" y2="253.5"><stop offset="0.00" stop-color="#e9605d"/><stop offset="0.17" stop-color="#ec605d"/><stop offset="0.33" stop-color="#ef605d"/><stop offset="0.50" stop-color="#f2605d"/><stop offset="0.67" stop-color="#f5605d"/><stop offset="0.83" stop-color="#f8615d"/><stop offset="1.00" stop-color="#fb615d"/></linearGradient>
<linearGradient id="s2_53" gradientUnits="userSpaceOnUse" x1="723.8" y1="342.4" x2="641.6" y2="252.3"><stop offset="0.00" stop-color="#f7706d"/><stop offset="0.17" stop-color="#f8706d"/><stop offset="0.33" stop-color="#fa706d"/><stop offset="0.50" stop-color="#fb706d"/><stop offset="0.67" stop-color="#fc706d"/><stop offset="0.83" stop-color="#fd706d"/><stop offset="1.00" stop-color="#fe706d"/></linearGradient>
<linearGradient id="s2_54" gradientUnits="userSpaceOnUse" x1="725.2" y1="341.1" x2="642.9" y2="251.2"><stop offset="0.00" stop-color="#fe7977"/><stop offset="0.17" stop-color="#fe7977"/><stop offset="0.33" stop-color="#fe7977"/><stop offset="0.50" stop-color="#ff7977"/><stop offset="0.67" stop-color="#ff7977"/><stop offset="0.83" stop-color="#ff7977"/><stop offset="1.00" stop-color="#ff7977"/></linearGradient>
<linearGradient id="s2_55" gradientUnits="userSpaceOnUse" x1="726.5" y1="339.9" x2="644.1" y2="250.0"><stop offset="0.00" stop-color="#fe7977"/><stop offset="0.17" stop-color="#fe7977"/><stop offset="0.33" stop-color="#ff7977"/><stop offset="0.50" stop-color="#ff7977"/><stop offset="0.67" stop-color="#ff7977"/><stop offset="0.83" stop-color="#ff7977"/><stop offset="1.00" stop-color="#ff7977"/></linearGradient>
<linearGradient id="s2_56" gradientUnits="userSpaceOnUse" x1="727.9" y1="338.7" x2="645.4" y2="248.9"><stop offset="0.00" stop-color="#fa706d"/><stop offset="0.17" stop-color="#fb706d"/><stop offset="0.33" stop-color="#fc706d"/><stop offset="0.50" stop-color="#fd706d"/><stop offset="0.67" stop-color="#fe706d"/><stop offset="0.83" stop-color="#ff706e"/><stop offset="1.00" stop-color="#ff706e"/></linearGradient>
<linearGradient id="s2_57" gradientUnits="userSpaceOnUse" x1="729.4" y1="337.4" x2="646.7" y2="247.8"><stop offset="0.00" stop-color="#f4605d"/><stop offset="0.17" stop-color="#f7615d"/><stop offset="0.33" stop-color="#fa615d"/><stop offset="0.50" stop-color="#fd615d"/><stop offset="0.67" stop-color="#ff615d"/><stop offset="0.83" stop-color="#ff615d"/><stop offset="1.00" stop-color="#ff615d"/></linearGradient>
<linearGradient id="s2_58" gradientUnits="userSpaceOnUse" x1="730.8" y1="336.2" x2="648.0" y2="246.7"><stop offset="0.00" stop-color="#ef4e4a"/><stop offset="0.17" stop-color="#f54f4a"/><stop offset="0.33" stop-color="#fa4f4a"/><stop offset="0.50" stop-color="#ff4f4b"/><stop offset="0.67" stop-color="#ff4f4b"/><stop offset="0.83" stop-color="#ff4f4b"/><stop offset="1.00" stop-color="#ff4f4b"/></linearGradient>
<linearGradient id="s2_59" gradientUnits="userSpaceOnUse" x1="732.2" y1="335.0" x2="649.3" y2="245.7"><stop offset="0.00" stop-color="#ee3d38"/><stop offset="0.17" stop-color="#f63e38"/><stop offset="0.33" stop-color="#fd3e39"/><stop offset="0.50" stop-color="#ff3e39"/><stop offset="0.67" stop-color="#ff3e39"/><stop offset="0.83" stop-color="#ff3e39"/><stop offset="1.00" stop-color="#ff3e39"/></linearGradient>
<linearGradient id="s2_60" gradientUnits="userSpaceOnUse" x1="733.6" y1="333.9" x2="650.6" y2="244.6"><stop offset="0.00" stop-color="#f1302a"/><stop offset="0.17" stop-color="#fa302a"/><stop offset="0.33" stop-color="#ff312a"/><stop offset="0.50" stop-color="#ff302a"/><stop offset="0.67" stop-color="#ff302a"/><stop offset="0.83" stop-color="#ff302a"/><stop offset="1.00" stop-color="#ff302a"/></linearGradient>
<linearGradient id="s2_61" gradientUnits="userSpaceOnUse" x1="735.1" y1="332.7" x2="651.9" y2="243.6"><stop offset="0.00" stop-color="#f6261f"/><stop offset="0.17" stop-color="#ff2720"/><stop offset="0.33" stop-color="#ff2720"/><stop offset="0.50" stop-color="#ff2720"/><stop offset="0.67" stop-color="#ff2620"/><stop offset="0.83" stop-color="#ff2620"/><stop offset="1.00" stop-color="#ff2620"/></linearGradient>
<linearGradient id="s2_62" gradientUnits="userSpaceOnUse" x1="736.5" y1="331.6" x2="653.2" y2="242.6"><stop offset="0.00" stop-color="#fd2119"/><stop offset="0.17" stop-color="#ff2119"/><stop offset="0.33" stop-color="#ff2019"/><stop offset="0.50" stop-color="#ff2019"/><stop offset="0.67" stop-color="#ff2019"/><stop offset="0.83" stop-color="#ff2019"/><stop offset="1.00" stop-color="#ff2019"/></linearGradient>
<linearGradient id="s2_63" gradientUnits="userSpaceOnUse" x1="738.0" y1="330.4" x2="654.6" y2="241.6"><stop offset="0.00" stop-color="#ff1d15"/><stop offset="0.17" stop-color="#ff1d15"/><stop offset="0.33" stop-color="#ff1d15"/><stop offset="0.50" stop-color="#ff1d15"/><stop offset="0.67" stop-color="#ff1d15"/><stop offset="0.83" stop-color="#ff1c15"/><stop offset="1.00" stop-color="#ff1c15"/></linearGradient>
<linearGradient id="s2_64" gradientUnits="userSpaceOnUse" x1="739.4" y1="329.3" x2="655.9" y2="240.6"><stop offset="0.00" stop-color="#ff1b13"/><stop offset="0.17" stop-color="#ff1b13"/><stop offset="0.33" stop-color="#ff1b13"/><stop offset="0.50" stop-color="#ff1b13"/><stop offset="0.67" stop-color="#ff1b13"/><stop offset="0.83" stop-color="#ff1b13"/><stop offset="1.00" stop-color="#ff1a13"/></linearGradient>
<linearGradient id="s2_65" gradientUnits="userSpaceOnUse" x1="740.8" y1="328.3" x2="657.2" y2="239.6"><stop offset="0.00" stop-color="#ff1a13"/><stop offset="0.17" stop-color="#ff1a13"/><stop offset="0.33" stop-color="#ff1a13"/><stop offset="0.50" stop-color="#ff1a13"/><stop offset="0.67" stop-color="#ff1a13"/><stop offset="0.83" stop-color="#ff1a13"/><stop offset="1.00" stop-color="#ff1a13"/></linearGradient>
<linearGradient id="s2_66" gradientUnits="userSpaceOnUse" x1="742.3" y1="327.2" x2="658.5" y2="238.7"><stop offset="0.00" stop-color="#ff1a12"/><stop offset="0.17" stop-color="#ff1a12"/><stop offset="0.33" stop-color="#ff1a12"/><stop offset="0.50" stop-color="#ff1912"/><stop offset="0.67" stop-color="#ff1912"/><stop offset="0.83" stop-color="#ff1912"/><stop offset="1.00" stop-color="#ff1912"/></linearGradient>
<linearGradient id="s2_67" gradientUnits="userSpaceOnUse" x1="743.7" y1="326.2" x2="659.9" y2="237.8"><stop offset="0.00" stop-color="#ff1a12"/><stop offset="0.17" stop-color="#ff1a12"/><stop offset="0.33" stop-color="#ff1912"/><stop offset="0.50" stop-color="#ff1912"/><stop offset="0.67" stop-color="#ff1912"/><stop offset="0.83" stop-color="#ff1912"/><stop offset="1.00" stop-color="#ff1912"/></linearGradient>
<linearGradient id="s2_68" gradientUnits="userSpaceOnUse" x1="745.2" y1="325.2" x2="661.2" y2="236.9"><stop offset="0.00" stop-color="#ff1a12"/><stop offset="0.17" stop-color="#ff1912"/><stop offset="0.33" stop-color="#ff1912"/><stop offset="0.50" stop-color="#ff1912"/><stop offset="0.67" stop-color="#ff1912"/><stop offset="0.83" stop-color="#ff1912"/><stop offset="1.00" stop-color="#ff1912"/></linearGradient>
<linearGradient id="s2_69" gradientUnits="userSpaceOnUse" x1="746.6" y1="324.2" x2="662.5" y2="236.1"><stop offset="0.00" stop-color="#ff1912"/><stop offset="0.17" stop-color="#ff1912"/><stop offset="0.33" stop-color="#ff1912"/><stop offset="0.50" stop-color="#ff1912"/><stop offset="0.67" stop-color="#ff1912"/><stop offset="0.83" stop-color="#ff1912"/><stop offset="1.00" stop-color="#ff1912"/></linearGradient>
<linearGradient id="s2_70" gradientUnits="userSpaceOnUse" x1="748.0" y1="323.2" x2="663.9" y2="235.3"><stop offset="0.00" stop-color="#ff1912"/><stop offset="0.17" stop-color="#ff1912"/><stop offset="0.33" stop-color="#ff1912"/><stop offset="0.50" stop-color="#ff1912"/><stop offset="0.67" stop-color="#ff1912"/><stop offset="0.83" stop-color="#ff1912"/><stop offset="1.00" stop-color="#ff1912"/></linearGradient>
<linearGradient id="s2_71" gradientUnits="userSpaceOnUse" x1="749.5" y1="322.3" x2="665.2" y2="234.5"><stop offset="0.00" stop-color="#ff1912"/><stop offset="0.17" stop-color="#ff1912"/><stop offset="0.33" stop-color="#ff1912"/><stop offset="0.50" stop-color="#ff1912"/><stop offset="0.67" stop-color="#ff1912"/><stop offset="0.83" stop-color="#ff1912"/><stop offset="1.00" stop-color="#ff1812"/></linearGradient>
<linearGradient id="s2_72" gradientUnits="userSpaceOnUse" x1="750.9" y1="321.4" x2="666.5" y2="233.7"><stop offset="0.00" stop-color="#ff1912"/><stop offset="0.17" stop-color="#ff1912"/><stop offset="0.33" stop-color="#ff1912"/><stop offset="0.50" stop-color="#ff1912"/><stop offset="0.67" stop-color="#ff1912"/><stop offset="0.83" stop-color="#ff1812"/><stop offset="1.00" stop-color="#ff1812"/></linearGradient>
<linearGradient id="s2_73" gradientUnits="userSpaceOnUse" x1="752.3" y1="320.5" x2="667.8" y2="232.9"><stop offset="0.00" stop-color="#ff1912"/><stop offset="0.17" stop-color="#ff1912"/><stop offset="0.33" stop-color="#ff1912"/><stop offset="0.50" stop-color="#ff1912"/><stop offset="0.67" stop-color="#ff1912"/><stop offset="0.83" stop-color="#ff1812"/><stop offset="1.00" stop-color="#ff1812"/></linearGradient>
<linearGradient id="s2_74" gradientUnits="userSpaceOnUse" x1="753.7" y1="319.7" x2="669.1" y2="232.2"><stop offset="0.00" stop-color="#ff1912"/><stop offset="0.17" stop-color="#ff1912"/><stop offset="0.33" stop-color="#ff1912"/><stop offset="0.50" stop-color="#ff1912"/><stop offset="0.67" stop-color="#ff1812"/><stop offset="0.83" stop-color="#ff1812"/><stop offset="1.00" stop-color="#ff1812"/></linearGradient>
<linearGradient id="s2_75" gradientUnits="userSpaceOnUse" x1="755.1" y1="318.9" x2="670.4" y2="231.5"><stop offset="0.00" stop-color="#ff1912"/><stop offset="0.17" stop-color="#ff1912"/><stop offset="0.33" stop-color="#ff1912"/><stop offset="0.50" stop-color="#ff1812"/><stop offset="0.67" stop-color="#ff1812"/><stop offset="0.83" stop-color="#ff1812"/><stop offset="1.00" stop-color="#ff1812"/></linearGradient>
<linearGradient id="s2_76" gradientUnits="userSpaceOnUse" x1="756.4" y1="318.1" x2="671.7" y2="230.9"><stop offset="0.00" stop-color="#ff1912"/><stop offset="0.17" stop-color="#ff1912"/><stop offset="0.33" stop-color="#ff1912"/><stop offset="0.50" stop-color="#ff1812"/><stop offset="0.67" stop-color="#ff1812"/><stop offset="0.83" stop-color="#ff1812"/><stop offset="1.00" stop-color="#ff1812"/></linearGradient>
<linearGradient id="s2_77" gradientUnits="userSpaceOnUse" x1="757.8" y1="317.3" x2="673.0" y2="230.2"><stop offset="0.00" stop-color="#ff1912"/><stop offset="0.17" stop-color="#ff1912"/><stop offset="0.33" stop-color="#ff1812"/><stop offset="0.50" stop-color="#ff1812"/><stop offset="0.67" stop-color="#ff1812"/><stop offset="0.83" stop-color="#ff1812"/><stop offset="1.00" stop-color="#ff1812"/></linearGradient>
<linearGradient id="s2_78" gradientUnits="userSpaceOnUse" x1="759.1" y1="316.6" x2="674.3" y2="229.6"><stop offset="0.00" stop-color="#ff1912"/><stop offset="0.17" stop-color="#ff1912"/><stop offset="0.33" stop-color="#ff1812"/><stop offset="0.50" stop-color="#ff1812"/><stop offset="0.67" stop-color="#ff1812"/><stop offset="0.83" stop-color="#ff1812"/><stop offset="1.00" stop-color="#ff1812"/></linearGradient>
<linearGradient id="s2_79" gradientUnits="userSpaceOnUse" x1="760.5" y1="315.9" x2="675.5" y2="229.1"><stop offset="0.00" stop-color="#ff1912"/><stop offset="0.17" stop-color="#ff1812"/><stop offset="0.33" stop-color="#ff1812"/><stop offset="0.50" stop-color="#ff1812"/><stop offset="0.67" stop-color="#ff1812"/><stop offset="0.83" stop-color="#ff1812"/><stop offset="1.00" stop-color="#ff1812"/></linearGradient>
<linearGradient id="s2_80" gradientUnits="userSpaceOnUse" x1="761.8" y1="315.2" x2="676.7" y2="228.5"><stop offset="0.00" stop-color="#ff1912"/><stop offset="0.17" stop-color="#ff1812"/><stop offset="0.33" stop-color="#ff1812"/><stop offset="0.50" stop-color="#ff1812"/><stop offset="0.67" stop-color="#ff1812"/><stop offset="0.83" stop-color="#ff1812"/><stop offset="1.00" stop-color="#ff1812"/></linearGradient>
<linearGradient id="s2_81" gradientUnits="userSpaceOnUse" x1="763.1" y1="314.6" x2="678.0" y2="228.0"><stop offset="0.00" stop-color="#ff1812"/><stop offset="0.17" stop-color="#ff1812"/><stop offset="0.33" stop-color="#ff1812"/><stop offset="0.50" stop-color="#ff1812"/><stop offset="0.67" stop-color="#ff1812"/><stop offset="0.83" stop-color="#ff1812"/><stop offset="1.00" stop-color="#ff1812"/></linearGradient>
<linearGradient id="s2_82" gradientUnits="userSpaceOnUse" x1="764.3" y1="314.0" x2="679.2" y2="227.6"><stop offset="0.00" stop-color="#ff1812"/><stop offset="0.17" stop-color="#ff1812"/><stop offset="0.33" stop-color="#ff1812"/><stop offset="0.50" stop-color="#ff1812"/><stop offset="0.67" stop-color="#ff1812"/><stop offset="0.83" stop-color="#ff1812"/><stop offset="1.00" stop-color="#ff1812"/></linearGradient>
<linearGradient id="s2_83" gradientUnits="userSpaceOnUse" x1="765.6" y1="313.5" x2="680.4" y2="227.1"><stop offset="0.00" stop-color="#ff1812"/><stop offset="0.17" stop-color="#ff1812"/><stop offset="0.33" stop-color="#ff1812"/><stop offset="0.50" stop-color="#ff1812"/><stop offset="0.67" stop-color="#ff1812"/><stop offset="0.83" stop-color="#ff1812"/><stop offset="1.00" stop-color="#ff1812"/></linearGradient>
<linearGradient id="s2_84" gradientUnits="userSpaceOnUse" x1="766.8" y1="313.0" x2="681.5" y2="226.7"><stop offset="0.00" stop-color="#ff1812"/><stop offset="0.17" stop-color="#ff1812"/><stop offset="0.33" stop-color="#ff1812"/><stop offset="0.50" stop-color="#ff1812"/><stop offset="0.67" stop-color="#ff1812"/><stop offset="0.83" stop-color="#ff1812"/><stop offset="1.00" stop-color="#ff1712"/></linearGradient>
<linearGradient id="s2_85" gradientUnits="userSpaceOnUse" x1="768.0" y1="312.5" x2="682.7" y2="226.3"><stop offset="0.00" stop-color="#ff1812"/><stop offset="0.17" stop-color="#ff1812"/><stop offset="0.33" stop-color="#ff1812"/><stop offset="0.50" stop-color="#ff1812"/><stop offset="0.67" stop-color="#ff1812"/><stop offset="0.83" stop-color="#ff1812"/><stop offset="1.00" stop-color="#ff1712"/></linearGradient>
<linearGradient id="s2_86" gradientUnits="userSpaceOnUse" x1="769.2" y1="312.0" x2="683.8" y2="226.0"><stop offset="0.00" stop-color="#ff1812"/><stop offset="0.17" stop-color="#ff1812"/><stop offset="0.33" stop-color="#ff1812"/><stop offset="0.50" stop-color="#ff1812"/><stop offset="0.67" stop-color="#ff1812"/><stop offset="0.83" stop-color="#ff1712"/><stop offset="1.00" stop-color="#ff1712"/></linearGradient>
<linearGradient id="s2_87" gradientUnits="userSpaceOnUse" x1="770.4" y1="311.6" x2="685.0" y2="225.7"><stop offset="0.00" stop-color="#ff1812"/><stop offset="0.17" stop-color="#ff1812"/><stop offset="0.33" stop-color="#ff1812"/><stop offset="0.50" stop-color="#ff1812"/><stop offset="0.67" stop-color="#ff1812"/><stop offset="0.83" stop-color="#ff1712"/><stop offset="1.00" stop-color="#ff1712"/></linearGradient>
<linearGradient id="s2_88" gradientUnits="userSpaceOnUse" x1="771.5" y1="311.2" x2="686.1" y2="225.4"><stop offset="0.00" stop-color="#ff1812"/><stop offset="0.17" stop-color="#ff1812"/><stop offset="0.33" stop-color="#ff1812"/><stop offset="0.50" stop-color="#ff1812"/><stop offset="0.67" stop-color="#ff1712"/><stop offset="0.83" stop-color="#ff1712"/><stop offset="1.00" stop-color="#ff1712"/></linearGradient>
<linearGradient id="s2_89" gradientUnits="userSpaceOnUse" x1="772.6" y1="310.9" x2="687.1" y2="225.2"><stop offset="0.00" stop-color="#ff1812"/><stop offset="0.17" stop-color="#ff1812"/><stop offset="0.33" stop-color="#ff1812"/><stop offset="0.50" stop-color="#ff1812"/><stop offset="0.67" stop-color="#ff1712"/><stop offset="0.83" stop-color="#ff1712"/><stop offset="1.00" stop-color="#ff1712"/></linearGradient>
<linearGradient id="s2_90" gradientUnits="userSpaceOnUse" x1="773.7" y1="310.6" x2="688.2" y2="225.0"><stop offset="0.00" stop-color="#ff1812"/><stop offset="0.17" stop-color="#ff1812"/><stop offset="0.33" stop-color="#ff1812"/><stop offset="0.50" stop-color="#ff1812"/><stop offset="0.67" stop-color="#ff1712"/><stop offset="0.83" stop-color="#ff1712"/><stop offset="1.00" stop-color="#ff1712"/></linearGradient>
<linearGradient id="s2_91" gradientUnits="userSpaceOnUse" x1="774.8" y1="310.3" x2="689.2" y2="224.8"><stop offset="0.00" stop-color="#fd1812"/><stop offset="0.17" stop-color="#fd1812"/><stop offset="0.33" stop-color="#fd1712"/><stop offset="0.50" stop-color="#fd1712"/><stop offset="0.67" stop-color="#fd1712"/><stop offset="0.83" stop-color="#fd1712"/><stop offset="1.00" stop-color="#fd1712"/></linearGradient>
<linearGradient id="s2_92" gradientUnits="userSpaceOnUse" x1="775.8" y1="310.1" x2="690.2" y2="224.7"><stop offset="0.00" stop-color="#f71711"/><stop offset="0.17" stop-color="#f71711"/><stop offset="0.33" stop-color="#f71711"/><stop offset="0.50" stop-color="#f71711"/><stop offset="0.67" stop-color="#f71711"/><stop offset="0.83" stop-color="#f71611"/><stop offset="1.00" stop-color="#f71611"/></linearGradient>
<linearGradient id="s2_93" gradientUnits="userSpaceOnUse" x1="776.8" y1="309.9" x2="691.2" y2="224.6"><stop offset="0.00" stop-color="#f11611"/><stop offset="0.17" stop-color="#f11611"/><stop offset="0.33" stop-color="#f11611"/><stop offset="0.50" stop-color="#f11611"/><stop offset="0.67" stop-color="#f11611"/><stop offset="0.83" stop-color="#f11611"/><stop offset="1.00" stop-color="#f11611"/></linearGradient>
<linearGradient id="s2_94" gradientUnits="userSpaceOnUse" x1="777.8" y1="309.7" x2="692.1" y2="224.5"><stop offset="0.00" stop-color="#eb1611"/><stop offset="0.17" stop-color="#eb1611"/><stop offset="0.33" stop-color="#eb1611"/><stop offset="0.50" stop-color="#eb1611"/><stop offset="0.67" stop-color="#eb1511"/><stop offset="0.83" stop-color="#eb1511"/><stop offset="1.00" stop-color="#eb1511"/></linearGradient>
<linearGradient id="s2_95" gradientUnits="userSpaceOnUse" x1="778.7" y1="309.6" x2="693.1" y2="224.5"><stop offset="0.00" stop-color="#e61510"/><stop offset="0.17" stop-color="#e61510"/><stop offset="0.33" stop-color="#e61510"/><stop offset="0.50" stop-color="#e61510"/><stop offset="0.67" stop-color="#e61510"/><stop offset="0.83" stop-color="#e61510"/><stop offset="1.00" stop-color="#e61510"/></linearGradient>
<linearGradient id="s2_96" gradientUnits="userSpaceOnUse" x1="779.6" y1="309.5" x2="693.9" y2="224.5"><stop offset="0.00" stop-color="#e11510"/><stop offset="0.17" stop-color="#e11510"/><stop offset="0.33" stop-color="#e11510"/><stop offset="0.50" stop-color="#e11410"/><stop offset="0.67" stop-color="#e11410"/><stop offset="0.83" stop-color="#e11410"/><stop offset="1.00" stop-color="#e11410"/></linearGradient>
<linearGradient id="s2_97" gradientUnits="userSpaceOnUse" x1="780.5" y1="309.5" x2="694.8" y2="224.5"><stop offset="0.00" stop-color="#dc1410"/><stop offset="0.17" stop-color="#dc1410"/><stop offset="0.33" stop-color="#dc1410"/><stop offset="0.50" stop-color="#dc1410"/><stop offset="0.67" stop-color="#dc1410"/><stop offset="0.83" stop-color="#dc1410"/><stop offset="1.00" stop-color="#dc1410"/></linearGradient>
<linearGradient id="s2_98" gradientUnits="userSpaceOnUse" x1="781.3" y1="309.5" x2="695.6" y2="224.6"><stop offset="0.00" stop-color="#d8140f"/><stop offset="0.17" stop-color="#d8140f"/><stop offset="0.33" stop-color="#d8140f"/><stop offset="0.50" stop-color="#d8140f"/><stop offset="0.67" stop-color="#d8130f"/><stop offset="0.83" stop-color="#d8130f"/><stop offset="1.00" stop-color="#d8130f"/></linearGradient>
<linearGradient id="s2_99" gradientUnits="userSpaceOnUse" x1="782.1" y1="309.5" x2="696.5" y2="224.7"><stop offset="0.00" stop-color="#d4140f"/><stop offset="0.17" stop-color="#d4130f"/><stop offset="0.33" stop-color="#d4130f"/><stop offset="0.50" stop-color="#d4130f"/><stop offset="0.67" stop-color="#d4130f"/><stop offset="0.83" stop-color="#d4130f"/><stop offset="1.00" stop-color="#d4130f"/></linearGradient>
<linearGradient id="s2_100" gradientUnits="userSpaceOnUse" x1="782.9" y1="309.6" x2="697.2" y2="224.9"><stop offset="0.00" stop-color="#d0130f"/><stop offset="0.17" stop-color="#d0130f"/><stop offset="0.33" stop-color="#d0130f"/><stop offset="0.50" stop-color="#d0130f"/><stop offset="0.67" stop-color="#d0130f"/><stop offset="0.83" stop-color="#d0130f"/><stop offset="1.00" stop-color="#d0130f"/></linearGradient>
<linearGradient id="s2_101" gradientUnits="userSpaceOnUse" x1="783.6" y1="309.7" x2="698.0" y2="225.1"><stop offset="0.00" stop-color="#cd130e"/><stop offset="0.17" stop-color="#cd130e"/><stop offset="0.33" stop-color="#cd130e"/><stop offset="0.50" stop-color="#cd130e"/><stop offset="0.67" stop-color="#cd120e"/><stop offset="0.83" stop-color="#cd120e"/><stop offset="1.00" stop-color="#cd120e"/></linearGradient>
<linearGradient id="s2_102" gradientUnits="userSpaceOnUse" x1="784.3" y1="309.8" x2="698.7" y2="225.3"><stop offset="0.00" stop-color="#ca130e"/><stop offset="0.17" stop-color="#ca120e"/><stop offset="0.33" stop-color="#ca120e"/><stop offset="0.50" stop-color="#ca120e"/><stop offset="0.67" stop-color="#ca120e"/><stop offset="0.83" stop-color="#ca120e"/><stop offset="1.00" stop-color="#ca120e"/></linearGradient>
<linearGradient id="s2_103" gradientUnits="userSpaceOnUse" x1="785.0" y1="310.0" x2="699.4" y2="225.5"><stop offset="0.00" stop-color="#c7120e"/><stop offset="0.17" stop-color="#c7120e"/><stop offset="0.33" stop-color="#c7120e"/><stop offset="0.50" stop-color="#c7120e"/><stop offset="0.67" stop-color="#c7120e"/><stop offset="0.83" stop-color="#c7120e"/><stop offset="1.00" stop-color="#c7120e"/></linearGradient>
<linearGradient id="s2_104" gradientUnits="userSpaceOnUse" x1="785.6" y1="310.2" x2="700.0" y2="225.8"><stop offset="0.00" stop-color="#c5120e"/><stop offset="0.17" stop-color="#c5120e"/><stop offset="0.33" stop-color="#c5120e"/><stop offset="0.50" stop-color="#c5120e"/><stop offset="0.67" stop-color="#c5120e"/><stop offset="0.83" stop-color="#c5120e"/><stop offset="1.00" stop-color="#c5120e"/></linearGradient>
<linearGradient id="s2_105" gradientUnits="userSpaceOnUse" x1="786.2" y1="310.5" x2="700.6" y2="226.2"><stop offset="0.00" stop-color="#c3120e"/><stop offset="0.17" stop-color="#c3120e"/><stop offset="0.33" stop-color="#c3120e"/><stop offset="0.50" stop-color="#c3120e"/><stop offset="0.67" stop-color="#c3120e"/><stop offset="0.83" stop-color="#c3120e"/><stop offset="1.00" stop-color="#c3120e"/></linearGradient>
<linearGradient id="s2_106" gradientUnits="userSpaceOnUse" x1="786.8" y1="310.8" x2="701.2" y2="226.5"><stop offset="0.00" stop-color="#c2120e"/><stop offset="0.17" stop-color="#c2120e"/><stop offset="0.33" stop-color="#c2120e"/><stop offset="0.50" stop-color="#c2110e"/><stop offset="0.67" stop-color="#c2110e"/><stop offset="0.83" stop-color="#c2110e"/><stop offset="1.00" stop-color="#c2110e"/></linearGradient>
<linearGradient id="s2_107" gradientUnits="userSpaceOnUse" x1="787.3" y1="311.1" x2="701.8" y2="226.9"><stop offset="0.00" stop-color="#c0120e"/><stop offset="0.17" stop-color="#c0120e"/><stop offset="0.33" stop-color="#c0110e"/><stop offset="0.50" stop-color="#c0110e"/><stop offset="0.67" stop-color="#c0110e"/><stop offset="0.83" stop-color="#c0110e"/><stop offset="1.00" stop-color="#c0110e"/></linearGradient>
<linearGradient id="s2_108" gradientUnits="userSpaceOnUse" x1="787.7" y1="311.5" x2="702.3" y2="227.3"><stop offset="0.00" stop-color="#c0120e"/><stop offset="0.17" stop-color="#c0110e"/><stop offset="0.33" stop-color="#c0110e"/><stop offset="0.50" stop-color="#c0110e"/><stop offset="0.67" stop-color="#c0110e"/><stop offset="0.83" stop-color="#c0110e"/><stop offset="1.00" stop-color="#c0110e"/></linearGradient>
<linearGradient id="s2_109" gradientUnits="userSpaceOnUse" x1="788.2" y1="311.9" x2="702.7" y2="227.8"><stop offset="0.00" stop-color="#bf120e"/><stop offset="0.17" stop-color="#bf110e"/><stop offset="0.33" stop-color="#bf110e"/><stop offset="0.50" stop-color="#bf110e"/><stop offset="0.67" stop-color="#bf110e"/><stop offset="0.83" stop-color="#bf110e"/><stop offset="1.00" stop-color="#bf110e"/></linearGradient>
<path d="M703.6 401.7 L690.6 399.2 L614.4 306.8 L627.6 310.7Z" fill="url(#s2_1000)"/>
<path d="M787.9 311.6 L789.1 324.8 L705.0 241.1 L702.5 227.5Z" fill="url(#s2_1001)"/>
<path d="M691.0 399.7 L690.3 398.8 L614.0 306.3 L614.8 307.4Z" fill="url(#s2_0)"/>
<path d="M690.6 399.3 L690.0 398.3 L613.7 305.8 L614.4 306.9Z" fill="url(#s2_1)"/>
<path d="M690.3 398.8 L689.8 397.7 L613.4 305.2 L614.0 306.3Z" fill="url(#s2_2)"/>
<path d="M690.0 398.3 L689.5 397.1 L613.1 304.5 L613.7 305.8Z" fill="url(#s2_3)"/>
<path d="M689.8 397.7 L689.4 396.5 L612.9 303.9 L613.4 305.2Z" fill="url(#s2_4)"/>
<path d="M689.5 397.1 L689.2 395.8 L612.7 303.2 L613.1 304.5Z" fill="url(#s2_5)"/>
<path d="M689.4 396.5 L689.2 395.1 L612.5 302.5 L612.9 303.9Z" fill="url(#s2_6)"/>
<path d="M689.2 395.8 L689.1 394.4 L612.4 301.7 L612.7 303.2Z" fill="url(#s2_7)"/>
<path d="M689.2 395.1 L689.1 393.6 L612.3 301.0 L612.5 302.5Z" fill="url(#s2_8)"/>
<path d="M689.1 394.4 L689.1 392.8 L612.2 300.2 L612.4 301.7Z" fill="url(#s2_9)"/>
<path d="M689.1 393.6 L689.2 392.0 L612.2 299.3 L612.3 301.0Z" fill="url(#s2_10)"/>
<path d="M689.1 392.8 L689.3 391.2 L612.3 298.5 L612.2 300.2Z" fill="url(#s2_11)"/>
<path d="M689.2 392.0 L689.5 390.3 L612.3 297.6 L612.2 299.3Z" fill="url(#s2_12)"/>
<path d="M689.3 391.2 L689.7 389.4 L612.4 296.7 L612.3 298.5Z" fill="url(#s2_13)"/>
<path d="M689.5 390.3 L689.9 388.4 L612.6 295.8 L612.3 297.6Z" fill="url(#s2_14)"/>
<path d="M689.7 389.4 L690.2 387.5 L612.7 294.8 L612.4 296.7Z" fill="url(#s2_15)"/>
<path d="M689.9 388.4 L690.5 386.5 L613.0 293.8 L612.6 295.8Z" fill="url(#s2_16)"/>
<path d="M690.2 387.5 L690.9 385.5 L613.2 292.9 L612.7 294.8Z" fill="url(#s2_17)"/>
<path d="M690.5 386.5 L691.3 384.5 L613.5 291.8 L613.0 293.8Z" fill="url(#s2_18)"/>
<path d="M690.9 385.5 L691.7 383.4 L613.8 290.8 L613.2 292.9Z" fill="url(#s2_19)"/>
<path d="M691.3 384.5 L692.2 382.3 L614.2 289.8 L613.5 291.8Z" fill="url(#s2_20)"/>
<path d="M691.7 383.4 L692.7 381.2 L614.6 288.7 L613.8 290.8Z" fill="url(#s2_21)"/>
<path d="M692.2 382.3 L693.3 380.1 L615.0 287.6 L614.2 289.8Z" fill="url(#s2_22)"/>
<path d="M692.7 381.2 L693.8 378.9 L615.5 286.5 L614.6 288.7Z" fill="url(#s2_23)"/>
<path d="M693.3 380.1 L694.5 377.8 L616.0 285.4 L615.0 287.6Z" fill="url(#s2_24)"/>
<path d="M693.8 378.9 L695.1 376.6 L616.6 284.2 L615.5 286.5Z" fill="url(#s2_25)"/>
<path d="M694.5 377.8 L695.8 375.4 L617.2 283.1 L616.0 285.4Z" fill="url(#s2_26)"/>
<path d="M695.1 376.6 L696.6 374.2 L617.8 281.9 L616.6 284.2Z" fill="url(#s2_27)"/>
<path d="M695.8 375.4 L697.4 373.0 L618.4 280.8 L617.2 283.1Z" fill="url(#s2_28)"/>
<path d="M696.6 374.2 L698.2 371.7 L619.1 279.6 L617.8 281.9Z" fill="url(#s2_29)"/>
<path d="M697.4 373.0 L699.0 370.5 L619.8 278.4 L618.4 280.8Z" fill="url(#s2_30)"/>
<path d="M698.2 371.7 L699.9 369.2 L620.5 277.2 L619.1 279.6Z" fill="url(#s2_31)"/>
<path d="M699.0 370.5 L700.8 367.9 L621.3 276.0 L619.8 278.4Z" fill="url(#s2_32)"/>
<path d="M699.9 369.2 L701.7 366.7 L622.1 274.8 L620.5 277.2Z" fill="url(#s2_33)"/>
<path d="M700.8 367.9 L702.7 365.4 L623.0 273.6 L621.3 276.0Z" fill="url(#s2_34)"/>
<path d="M701.7 366.7 L703.7 364.1 L623.8 272.3 L622.1 274.8Z" fill="url(#s2_35)"/>
<path d="M702.7 365.4 L704.7 362.7 L624.7 271.1 L623.0 273.6Z" fill="url(#s2_36)"/>
<path d="M703.7 364.1 L705.8 361.4 L625.6 269.9 L623.8 272.3Z" fill="url(#s2_37)"/>
<path d="M704.7 362.7 L706.9 360.1 L626.6 268.6 L624.7 271.1Z" fill="url(#s2_38)"/>
<path d="M705.8 361.4 L708.0 358.8 L627.6 267.4 L625.6 269.9Z" fill="url(#s2_39)"/>
<path d="M706.9 360.1 L709.1 357.5 L628.6 266.2 L626.6 268.6Z" fill="url(#s2_40)"/>
<path d="M708.0 358.8 L710.3 356.1 L629.6 264.9 L627.6 267.4Z" fill="url(#s2_41)"/>
<path d="M709.1 357.5 L711.5 354.8 L630.6 263.7 L628.6 266.2Z" fill="url(#s2_42)"/>
<path d="M710.3 356.1 L712.7 353.5 L631.7 262.5 L629.6 264.9Z" fill="url(#s2_43)"/>
<path d="M711.5 354.8 L713.9 352.2 L632.8 261.3 L630.6 263.7Z" fill="url(#s2_44)"/>
<path d="M712.7 353.5 L715.2 350.8 L633.9 260.0 L631.7 262.5Z" fill="url(#s2_45)"/>
<path d="M713.9 352.2 L716.5 349.5 L635.1 258.8 L632.8 261.3Z" fill="url(#s2_46)"/>
<path d="M715.2 350.8 L717.8 348.2 L636.2 257.6 L633.9 260.0Z" fill="url(#s2_47)"/>
<path d="M716.5 349.5 L719.1 346.9 L637.4 256.4 L635.1 258.8Z" fill="url(#s2_48)"/>
<path d="M717.8 348.2 L720.4 345.6 L638.6 255.2 L636.2 257.6Z" fill="url(#s2_49)"/>
<path d="M719.1 346.9 L721.7 344.3 L639.8 254.1 L637.4 256.4Z" fill="url(#s2_50)"/>
<path d="M720.4 345.6 L723.1 343.0 L641.0 252.9 L638.6 255.2Z" fill="url(#s2_51)"/>
<path d="M721.7 344.3 L724.5 341.8 L642.3 251.7 L639.8 254.1Z" fill="url(#s2_52)"/>
<path d="M723.1 343.0 L725.8 340.5 L643.5 250.6 L641.0 252.9Z" fill="url(#s2_53)"/>
<path d="M724.5 341.8 L727.2 339.3 L644.8 249.5 L642.3 251.7Z" fill="url(#s2_54)"/>
<path d="M725.8 340.5 L728.7 338.0 L646.1 248.4 L643.5 250.6Z" fill="url(#s2_55)"/>
<path d="M727.2 339.3 L730.1 336.8 L647.3 247.3 L644.8 249.5Z" fill="url(#s2_56)"/>
<path d="M728.7 338.0 L731.5 335.6 L648.6 246.2 L646.1 248.4Z" fill="url(#s2_57)"/>
<path d="M730.1 336.8 L732.9 334.4 L649.9 245.1 L647.3 247.3Z" fill="url(#s2_58)"/>
<path d="M731.5 335.6 L734.4 333.3 L651.3 244.1 L648.6 246.2Z" fill="url(#s2_59)"/>
<path d="M732.9 334.4 L735.8 332.1 L652.6 243.1 L649.9 245.1Z" fill="url(#s2_60)"/>
<path d="M734.4 333.3 L737.2 331.0 L653.9 242.1 L651.3 244.1Z" fill="url(#s2_61)"/>
<path d="M735.8 332.1 L738.7 329.9 L655.2 241.1 L652.6 243.1Z" fill="url(#s2_62)"/>
<path d="M737.2 331.0 L740.1 328.8 L656.5 240.1 L653.9 242.1Z" fill="url(#s2_63)"/>
<path d="M738.7 329.9 L741.6 327.7 L657.9 239.2 L655.2 241.1Z" fill="url(#s2_64)"/>
<path d="M740.1 328.8 L743.0 326.7 L659.2 238.3 L656.5 240.1Z" fill="url(#s2_65)"/>
<path d="M741.6 327.7 L744.5 325.7 L660.5 237.4 L657.9 239.2Z" fill="url(#s2_66)"/>
<path d="M743.0 326.7 L745.9 324.7 L661.9 236.5 L659.2 238.3Z" fill="url(#s2_67)"/>
<path d="M744.5 325.7 L747.3 323.7 L663.2 235.7 L660.5 237.4Z" fill="url(#s2_68)"/>
<path d="M745.9 324.7 L748.7 322.8 L664.5 234.9 L661.9 236.5Z" fill="url(#s2_69)"/>
<path d="M747.3 323.7 L750.2 321.8 L665.9 234.1 L663.2 235.7Z" fill="url(#s2_70)"/>
<path d="M748.7 322.8 L751.6 321.0 L667.2 233.3 L664.5 234.9Z" fill="url(#s2_71)"/>
<path d="M750.2 321.8 L753.0 320.1 L668.5 232.6 L665.9 234.1Z" fill="url(#s2_72)"/>
<path d="M751.6 321.0 L754.4 319.3 L669.8 231.9 L667.2 233.3Z" fill="url(#s2_73)"/>
<path d="M753.0 320.1 L755.7 318.5 L671.1 231.2 L668.5 232.6Z" fill="url(#s2_74)"/>
<path d="M754.4 319.3 L757.1 317.7 L672.4 230.5 L669.8 231.9Z" fill="url(#s2_75)"/>
<path d="M755.7 318.5 L758.5 317.0 L673.6 229.9 L671.1 231.2Z" fill="url(#s2_76)"/>
<path d="M757.1 317.7 L759.8 316.2 L674.9 229.4 L672.4 230.5Z" fill="url(#s2_77)"/>
<path d="M758.5 317.0 L761.1 315.6 L676.1 228.8 L673.6 229.9Z" fill="url(#s2_78)"/>
<path d="M759.8 316.2 L762.4 314.9 L677.4 228.3 L674.9 229.4Z" fill="url(#s2_79)"/>
<path d="M761.1 315.6 L763.7 314.3 L678.6 227.8 L676.1 228.8Z" fill="url(#s2_80)"/>
<path d="M762.4 314.9 L765.0 313.7 L679.8 227.3 L677.4 228.3Z" fill="url(#s2_81)"/>
<path d="M763.7 314.3 L766.2 313.2 L681.0 226.9 L678.6 227.8Z" fill="url(#s2_82)"/>
<path d="M765.0 313.7 L767.4 312.7 L682.1 226.5 L679.8 227.3Z" fill="url(#s2_83)"/>
<path d="M766.2 313.2 L768.6 312.2 L683.3 226.2 L681.0 226.9Z" fill="url(#s2_84)"/>
<path d="M767.4 312.7 L769.8 311.8 L684.4 225.8 L682.1 226.5Z" fill="url(#s2_85)"/>
<path d="M768.6 312.2 L770.9 311.4 L685.5 225.6 L683.3 226.2Z" fill="url(#s2_86)"/>
<path d="M769.8 311.8 L772.1 311.0 L686.6 225.3 L684.4 225.8Z" fill="url(#s2_87)"/>
<path d="M770.9 311.4 L773.2 310.7 L687.7 225.1 L685.5 225.6Z" fill="url(#s2_88)"/>
<path d="M772.1 311.0 L774.2 310.4 L688.7 224.9 L686.6 225.3Z" fill="url(#s2_89)"/>
<path d="M773.2 310.7 L775.3 310.2 L689.7 224.7 L687.7 225.1Z" fill="url(#s2_90)"/>
<path d="M774.2 310.4 L776.3 310.0 L690.7 224.6 L688.7 224.9Z" fill="url(#s2_91)"/>
<path d="M775.3 310.2 L777.3 309.8 L691.7 224.6 L689.7 224.7Z" fill="url(#s2_92)"/>
<path d="M776.3 310.0 L778.2 309.6 L692.6 224.5 L690.7 224.6Z" fill="url(#s2_93)"/>
<path d="M777.3 309.8 L779.1 309.5 L693.5 224.5 L691.7 224.6Z" fill="url(#s2_94)"/>
<path d="M778.2 309.6 L780.0 309.5 L694.4 224.5 L692.6 224.5Z" fill="url(#s2_95)"/>
<path d="M779.1 309.5 L780.9 309.5 L695.2 224.6 L693.5 224.5Z" fill="url(#s2_96)"/>
<path d="M780.0 309.5 L781.7 309.5 L696.1 224.7 L694.4 224.5Z" fill="url(#s2_97)"/>
<path d="M780.9 309.5 L782.5 309.5 L696.8 224.8 L695.2 224.6Z" fill="url(#s2_98)"/>
<path d="M781.7 309.5 L783.3 309.6 L697.6 225.0 L696.1 224.7Z" fill="url(#s2_99)"/>
<path d="M782.5 309.5 L784.0 309.7 L698.3 225.2 L696.8 224.8Z" fill="url(#s2_100)"/>
<path d="M783.3 309.6 L784.7 309.9 L699.0 225.4 L697.6 225.0Z" fill="url(#s2_101)"/>
<path d="M784.0 309.7 L785.3 310.1 L699.7 225.7 L698.3 225.2Z" fill="url(#s2_102)"/>
<path d="M784.7 309.9 L785.9 310.3 L700.3 226.0 L699.0 225.4Z" fill="url(#s2_103)"/>
<path d="M785.3 310.1 L786.5 310.6 L700.9 226.3 L699.7 225.7Z" fill="url(#s2_104)"/>
<path d="M785.9 310.3 L787.0 310.9 L701.5 226.7 L700.3 226.0Z" fill="url(#s2_105)"/>
<path d="M786.5 310.6 L787.5 311.3 L702.0 227.1 L700.9 226.3Z" fill="url(#s2_106)"/>
<path d="M787.0 310.9 L788.0 311.7 L702.5 227.5 L701.5 226.7Z" fill="url(#s2_107)"/>
<path d="M787.5 311.3 L788.4 312.1 L703.0 228.0 L702.0 227.1Z" fill="url(#s2_108)"/>
<path d="M788.0 311.7 L788.4 312.1 L703.0 228.0 L702.5 227.5Z" fill="url(#s2_109)"/>
</g>
<ellipse cx="739.7" cy="355.9" rx="65.5" ry="20.7" transform="rotate(138.0 739.7 355.9)" fill="#2b2b2b"/>
<g fill="none" stroke-linecap="butt">
<path d="M288.2 534.8 L266.1 507.9" stroke="#1414f0" stroke-width="1.8"/>
<path d="M288.2 534.8 L318.8 519.4" stroke="#ff0a0a" stroke-width="1.8"/>
<path d="M288.2 534.8 L283 557" stroke="#10e010" stroke-width="1.8"/>
<path d="M256 497.5 H263 L256.3 504.3 H263.5" stroke="#1414f0" stroke-width="1.7"/>
<path d="M324.8 510.8 L332 518.3 M332 510.8 L324.8 518.3" stroke="#ff0a0a" stroke-width="1.7"/>
<path d="M278.6 557.5 L283 564.5 M287 557.5 L280.6 569.3" stroke="#10e010" stroke-width="1.7"/>
</g>
</svg></div>
<div class="a" style="left:861px;top:190px;width:1px;height:397px;background:#fff"></div>
</body></html>
